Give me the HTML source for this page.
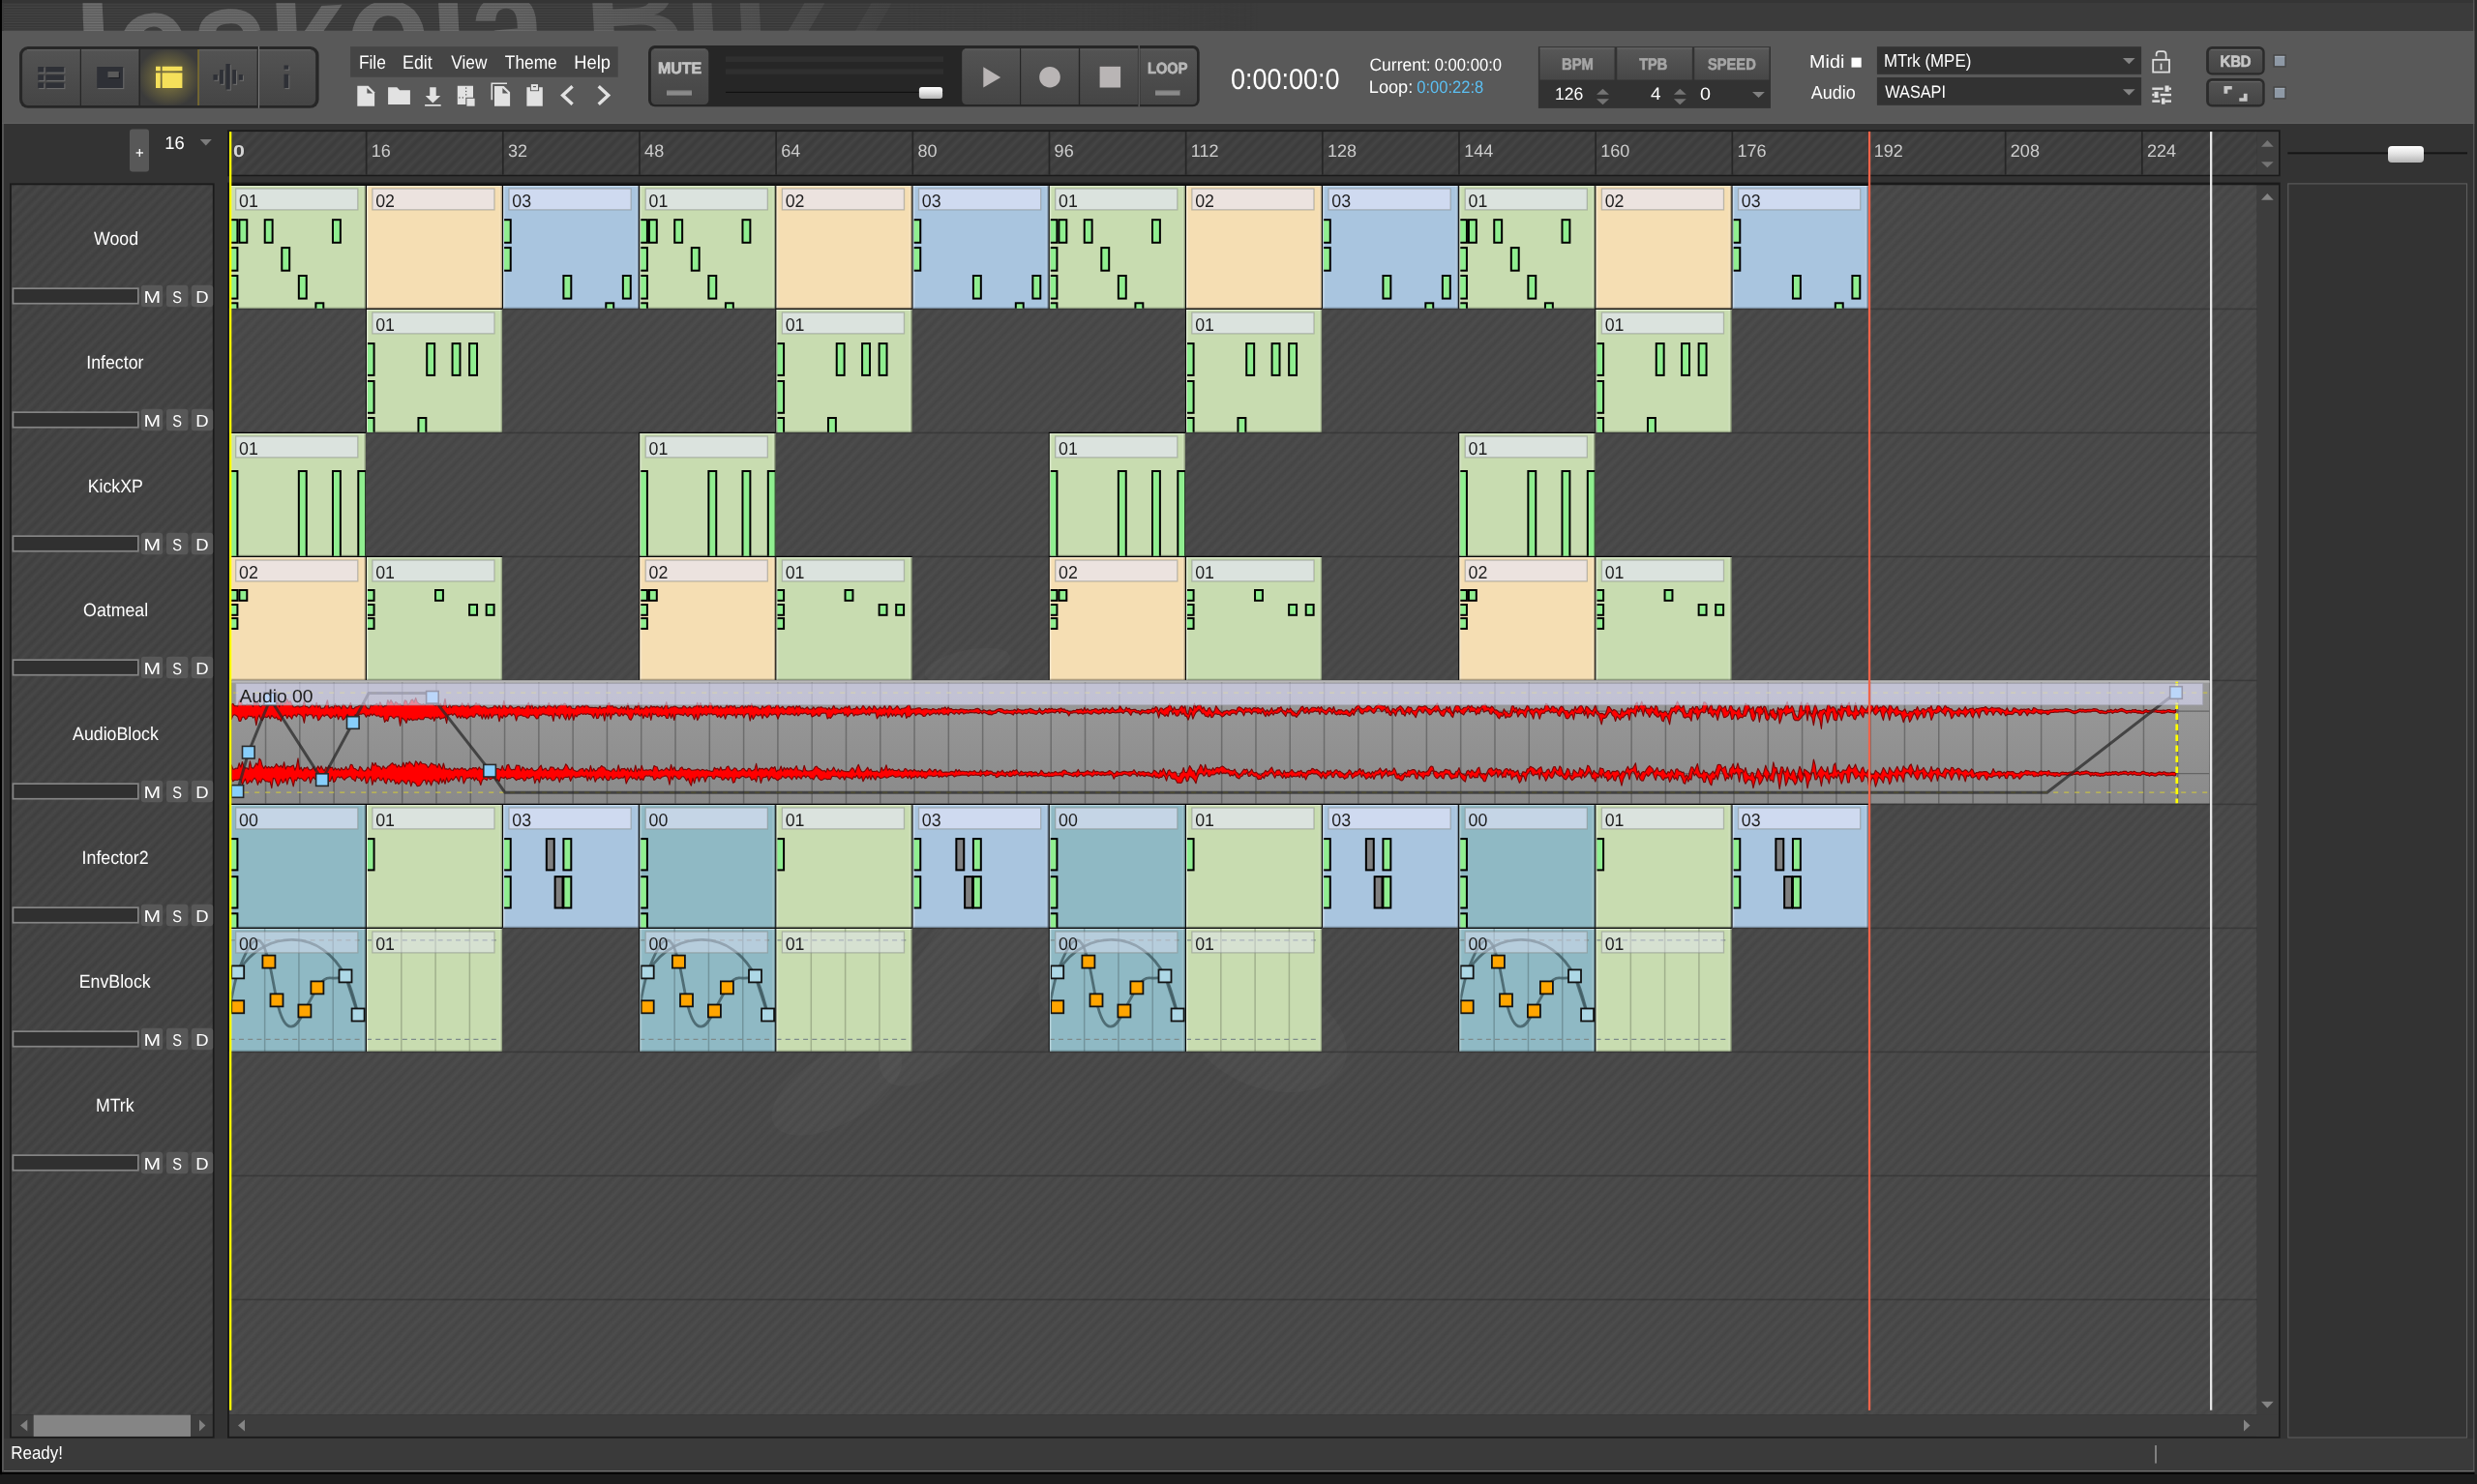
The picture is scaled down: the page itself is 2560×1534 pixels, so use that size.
<!DOCTYPE html>
<html><head><meta charset="utf-8"><title>Jeskola Buzz</title>
<style>html,body{margin:0;padding:0;background:#333;overflow:hidden}body{width:2560px;height:1534px;font-family:"Liberation Sans",sans-serif}svg{display:block}</style>
</head><body>
<svg width="2560" height="1534" viewBox="0 0 2560 1534" font-family="'Liberation Sans', sans-serif" text-rendering="geometricPrecision">
<defs><linearGradient id="btn" x1="0" y1="0" x2="0" y2="1"><stop offset="0" stop-color="#535353"/><stop offset="1" stop-color="#454545"/></linearGradient>
<linearGradient id="hdr" x1="0" y1="0" x2="0" y2="1"><stop offset="0" stop-color="#585858"/><stop offset="1" stop-color="#474747"/></linearGradient>
<linearGradient id="thumb" x1="0" y1="0" x2="0" y2="1"><stop offset="0" stop-color="#ffffff"/><stop offset="0.45" stop-color="#e4e4e4"/><stop offset="1" stop-color="#b4b4b4"/></linearGradient>
<linearGradient id="hg1" x1="0" y1="0" x2="1" y2="0"><stop offset="0" stop-color="#454545"/><stop offset="0.5" stop-color="#4c4c4c"/><stop offset="1" stop-color="#454545"/></linearGradient>
<linearGradient id="hg2" x1="0" y1="0" x2="1" y2="0"><stop offset="0" stop-color="#3b3b3b"/><stop offset="0.5" stop-color="#444444"/><stop offset="1" stop-color="#3b3b3b"/></linearGradient>
<linearGradient id="hg3" x1="0" y1="0" x2="1" y2="0"><stop offset="0" stop-color="#3f3f3f"/><stop offset="0.5" stop-color="#474747"/><stop offset="1" stop-color="#3f3f3f"/></linearGradient>
<pattern id="h1" width="8.5" height="8.5" patternUnits="userSpaceOnUse" patternTransform="rotate(45)"><rect width="8.5" height="8.5" fill="url(#hg1)"/></pattern>
<pattern id="h2" width="8.5" height="8.5" patternUnits="userSpaceOnUse" patternTransform="rotate(45)"><rect width="8.5" height="8.5" fill="url(#hg2)"/></pattern>
<pattern id="h3" width="8.5" height="8.5" patternUnits="userSpaceOnUse" patternTransform="rotate(45)"><rect width="8.5" height="8.5" fill="url(#hg3)"/></pattern>
<pattern id="scan" width="4" height="2.67" patternUnits="userSpaceOnUse"><rect width="4" height="1.33" fill="#000" fill-opacity="0.22"/></pattern>
<linearGradient id="bfade" x1="0" y1="0" x2="1" y2="0"><stop offset="0" stop-color="#747474"/><stop offset="0.55" stop-color="#6c6c6c"/><stop offset="0.8" stop-color="#5a5a5a"/><stop offset="1" stop-color="#484848"/></linearGradient>
<radialGradient id="glow" cx="0.5" cy="0.5" r="0.5"><stop offset="0" stop-color="#e8d24a" stop-opacity="0.5"/><stop offset="0.5" stop-color="#c8b440" stop-opacity="0.28"/><stop offset="1" stop-color="#c8b440" stop-opacity="0"/></radialGradient>
<linearGradient id="audbg" x1="0" y1="0" x2="0" y2="1"><stop offset="0" stop-color="#9a9a9a"/><stop offset="1" stop-color="#8a8a8a"/></linearGradient>
<filter id="idf" x="0" y="0" width="2560" height="1534" filterUnits="userSpaceOnUse" color-interpolation-filters="sRGB"><feOffset dx="0" dy="0"/></filter>
<linearGradient id="bmg" x1="0" y1="0" x2="1" y2="0"><stop offset="0" stop-color="#fff"/><stop offset="0.72" stop-color="#fff"/><stop offset="1" stop-color="#000"/></linearGradient>
<mask id="bmask" maskUnits="userSpaceOnUse" x="0" y="0" width="1300" height="40"><rect x="0" y="0" width="1300" height="40" fill="url(#bmg)"/></mask>
<clipPath id="selclip"><rect x="145" y="50.9" width="59.3" height="58.1"/></clipPath>
<clipPath id="bannerclip"><rect x="4" y="3" width="2552" height="29"/></clipPath>
</defs>
<g filter="url(#idf)">
<rect x="0.00" y="0.00" width="2560.00" height="1534.00" fill="#333333"/><rect x="0.00" y="0.00" width="2560.00" height="32.00" fill="#3b3b3b"/><rect x="0.00" y="0.00" width="2560.00" height="3.00" fill="#353535"/><g clip-path="url(#bannerclip)"><rect x="4" y="3" width="1296" height="29" fill="#454545" mask="url(#bmask)"/><text transform="translate(41 108.5) rotate(-3) scale(0.87 1)" font-size="165" font-weight="bold" fill="url(#bfade)" letter-spacing="0">Jeskola Buzz</text><rect x="55.00" y="3.00" width="30.50" height="14.00" fill="#454545"/><rect x="4" y="3" width="1296" height="29" fill="url(#scan)" mask="url(#bmask)"/></g><rect x="0.00" y="32.00" width="2560.00" height="96.00" fill="#595959"/><rect x="0.00" y="126.80" width="2560.00" height="1.20" fill="#5f5f5f"/><rect x="0.00" y="1486.80" width="2560.00" height="34.00" fill="#3a3a3a"/><rect x="0.00" y="1520.00" width="2560.00" height="1.60" fill="#707070"/><rect x="0.00" y="1521.60" width="2560.00" height="2.60" fill="#050505"/><rect x="0.00" y="1524.20" width="2560.00" height="10.00" fill="#1c1c1c"/><rect x="2.00" y="128.00" width="2.00" height="1393.00" fill="#555555"/><rect x="0.00" y="0.00" width="2.00" height="1534.00" fill="#000000"/><rect x="2556.30" y="0.00" width="1.20" height="1521.00" fill="#626262"/><rect x="2557.50" y="0.00" width="2.50" height="1534.00" fill="#2a2a2a"/><rect x="0.00" y="1524.20" width="2560.00" height="10.00" fill="#1c1c1c"/><text transform="translate(11.24 1507.80) scale(0.9050 1)" font-size="18.76" fill="#ffffff">Ready!</text><rect x="2227.00" y="1494.00" width="2.00" height="18.60" fill="#808080"/>
<rect x="20" y="48" width="309.6" height="63.8" rx="9" fill="#272727"/><path d="M29.5 50.9 H82.7 V109 H29.5 a6.4 6.4 0 0 1 -6.4 -6.4 V57.3 a6.4 6.4 0 0 1 6.4 -6.4z" fill="url(#btn)"/><rect x="84.00" y="50.90" width="59.40" height="58.10" fill="url(#btn)"/><rect x="145.00" y="50.90" width="59.30" height="58.10" fill="#3b3b3b"/><rect x="205.90" y="50.90" width="59.70" height="58.10" fill="url(#btn)"/><path d="M268.1 50.9 H319.8 a6.4 6.4 0 0 1 6.4 6.4 V102.6 a6.4 6.4 0 0 1 -6.4 6.4 H268.1z" fill="url(#btn)"/><rect x="28.00" y="51.20" width="54.70" height="1.10" fill="#6a6a6a" fill-opacity="0.8"/><rect x="84.00" y="51.20" width="59.40" height="1.10" fill="#6a6a6a" fill-opacity="0.8"/><rect x="205.90" y="51.20" width="59.70" height="1.10" fill="#6a6a6a" fill-opacity="0.8"/><rect x="268.10" y="51.20" width="53.00" height="1.10" fill="#6a6a6a" fill-opacity="0.8"/><rect x="266.90" y="48.00" width="1.20" height="63.80" fill="#7a7a7a"/><rect x="204.20" y="51.00" width="1.70" height="58.00" fill="#7d6f34"/><ellipse cx="174.8" cy="80" rx="33" ry="31" fill="url(#glow)" clip-path="url(#selclip)"/><rect x="40.30" y="70.10" width="6.10" height="5.60" fill="#6a6a6a"/><rect x="48.40" y="70.10" width="19.00" height="5.60" fill="#6a6a6a"/><rect x="40.30" y="78.40" width="6.10" height="5.60" fill="#6a6a6a"/><rect x="48.40" y="78.40" width="19.00" height="5.60" fill="#6a6a6a"/><rect x="40.30" y="86.50" width="6.10" height="5.60" fill="#6a6a6a"/><rect x="48.40" y="86.50" width="19.00" height="5.60" fill="#6a6a6a"/><rect x="39.20" y="69.00" width="6.10" height="5.60" fill="#2e3036"/><rect x="47.30" y="69.00" width="19.00" height="5.60" fill="#2e3036"/><rect x="39.20" y="77.30" width="6.10" height="5.60" fill="#2e3036"/><rect x="47.30" y="77.30" width="19.00" height="5.60" fill="#2e3036"/><rect x="39.20" y="85.40" width="6.10" height="5.60" fill="#2e3036"/><rect x="47.30" y="85.40" width="19.00" height="5.60" fill="#2e3036"/><rect x="101.30" y="70.10" width="27.00" height="22.00" fill="#6a6a6a"/><rect x="100.20" y="69.00" width="27.00" height="22.00" fill="#2e3036"/><rect x="112.60" y="75.00" width="11.30" height="6.10" fill="#1e1f24"/><rect x="111.50" y="73.90" width="11.30" height="6.10" fill="#5a5a5a"/><rect x="161.00" y="68.70" width="4.80" height="4.60" fill="#f5e05a"/><rect x="167.60" y="68.70" width="20.80" height="4.60" fill="#f5e05a"/><rect x="161.00" y="75.30" width="4.80" height="15.70" fill="#f5e05a"/><rect x="167.60" y="75.30" width="20.80" height="15.70" fill="#f5e05a"/><rect x="221.50" y="78.20" width="4.50" height="5.70" fill="#6a6a6a"/><rect x="228.20" y="73.20" width="3.80" height="14.70" fill="#6a6a6a"/><rect x="234.50" y="67.10" width="4.40" height="26.50" fill="#6a6a6a"/><rect x="241.30" y="73.20" width="3.80" height="14.70" fill="#6a6a6a"/><rect x="247.80" y="78.20" width="4.20" height="5.70" fill="#6a6a6a"/><rect x="220.40" y="77.10" width="4.50" height="5.70" fill="#2e3036"/><rect x="227.10" y="72.10" width="3.80" height="14.70" fill="#2e3036"/><rect x="233.40" y="66.00" width="4.40" height="26.50" fill="#2e3036"/><rect x="240.20" y="72.10" width="3.80" height="14.70" fill="#2e3036"/><rect x="246.70" y="77.10" width="4.20" height="5.70" fill="#2e3036"/><rect x="294.60" y="68.60" width="4.70" height="4.20" fill="#6a6a6a"/><rect x="294.60" y="77.80" width="4.70" height="14.30" fill="#6a6a6a"/><rect x="293.50" y="67.50" width="4.70" height="4.20" fill="#2e3036"/><rect x="293.50" y="76.70" width="4.70" height="14.30" fill="#2e3036"/><rect x="362.10" y="48.10" width="276.60" height="31.60" fill="#454545"/><text transform="translate(370.91 71.20) scale(0.8899 1)" font-size="19.49" fill="#ffffff">File</text><text transform="translate(416.08 71.20) scale(0.9118 1)" font-size="19.49" fill="#ffffff">Edit</text><text transform="translate(466.36 71.20) scale(0.8829 1)" font-size="19.49" fill="#ffffff">View</text><text transform="translate(521.85 71.20) scale(0.8889 1)" font-size="19.49" fill="#ffffff">Theme</text><text transform="translate(593.23 71.20) scale(0.9413 1)" font-size="19.49" fill="#ffffff">Help</text><path d="M369.3 88.8 H380.6 L387.1 95.2 V109.7 H369.3z" fill="#e2e2e2"/><path d="M379.4 90.9 V96.6 H385.2z" fill="#595959"/><path d="M401.1 90.2 H410.3 L413.1 93.3 H423.9 V108 H401.1z" fill="#e2e2e2"/><path d="M444.2 90.2 H450.7 V98.9 H455.2 L447.4 106.4 L439.7 98.9 H444.2z" fill="#e2e2e2"/><rect x="439.10" y="108.00" width="16.60" height="1.70" fill="#e2e2e2"/><path d="M472.8 88.8 H489 V100.7 H481.3 V108 H472.8z" fill="#e2e2e2"/><rect x="482.40" y="101.80" width="8.20" height="7.90" fill="#e2e2e2"/><rect x="481.00" y="90.40" width="1.30" height="1.30" fill="#595959"/><rect x="481.00" y="93.80" width="1.30" height="1.30" fill="#595959"/><rect x="481.00" y="97.20" width="1.30" height="1.30" fill="#595959"/><rect x="474.30" y="100.30" width="1.30" height="1.30" fill="#595959"/><rect x="477.70" y="100.30" width="1.30" height="1.30" fill="#595959"/><path d="M508.3 103.2 V86.2 H524" fill="none" stroke="#e2e2e2" stroke-width="1.6"/><path d="M511 89 H520.7 L527.1 95.2 V109.7 H511z" fill="#e2e2e2"/><path d="M519.4 91 V96.6 H525.2z" fill="#595959"/><rect x="544.40" y="90.20" width="16.40" height="19.50" fill="#e2e2e2"/><rect x="547.90" y="86.30" width="9.20" height="7.90" fill="#595959"/><rect x="548.90" y="87.10" width="7.10" height="6.20" fill="#e2e2e2"/><rect x="550.90" y="89.00" width="3.10" height="1.20" fill="#595959"/><path d="M591.6 89.3 L581.6 98.4 L591.6 107.7" fill="none" stroke="#e2e2e2" stroke-width="3.4" stroke-linecap="butt" stroke-linejoin="miter"/><path d="M618.7 89.3 L628.7 98.4 L618.7 107.7" fill="none" stroke="#e2e2e2" stroke-width="3.4" stroke-linecap="butt" stroke-linejoin="miter"/><rect x="670" y="47" width="569.7" height="63.3" rx="7" fill="#262626"/><rect x="672.9" y="50.2" width="59.4" height="57.8" rx="4.5" fill="url(#btn)"/><rect x="676.00" y="50.60" width="53.00" height="1.00" fill="#6a6a6a" fill-opacity="0.7"/><text transform="translate(679.96 75.70) scale(0.9717 1)" font-size="16.44" fill="#c4c4c4" font-weight="bold" stroke="#c4c4c4" stroke-width="0.7">MUTE</text><rect x="689.00" y="93.00" width="26.00" height="5.60" fill="#8a8a8a"/><rect x="689.00" y="93.00" width="26.00" height="1.20" fill="#6a6a6a"/><rect x="750.00" y="58.30" width="225.00" height="5.70" fill="#2f2f2f"/><rect x="750.00" y="71.20" width="225.00" height="5.60" fill="#2f2f2f"/><rect x="750.00" y="94.80" width="225.00" height="1.20" fill="#101010"/><rect x="949.9" y="90" width="24.2" height="11.9" rx="3" fill="url(#thumb)"/><path d="M998.7 50.2 H1054 V108 H998.7 a4.5 4.5 0 0 1 -4.5 -4.5 V54.7 a4.5 4.5 0 0 1 4.5 -4.5z" fill="url(#btn)"/><rect x="1055.20" y="50.20" width="59.60" height="57.80" fill="url(#btn)"/><rect x="1116.20" y="50.20" width="59.70" height="57.80" fill="url(#btn)"/><path d="M1178.3 50.2 H1232.5 a4.5 4.5 0 0 1 4.5 4.5 V103.5 a4.5 4.5 0 0 1 -4.5 4.5 H1178.3z" fill="url(#btn)"/><rect x="997.00" y="50.60" width="57.00" height="1.00" fill="#6a6a6a" fill-opacity="0.7"/><rect x="1055.20" y="50.60" width="59.60" height="1.00" fill="#6a6a6a" fill-opacity="0.7"/><rect x="1116.20" y="50.60" width="59.70" height="1.00" fill="#6a6a6a" fill-opacity="0.7"/><rect x="1178.30" y="50.60" width="56.00" height="1.00" fill="#6a6a6a" fill-opacity="0.7"/><rect x="1176.60" y="47.00" width="1.10" height="63.30" fill="#6c6c6c"/><path d="M1016.3 69.2 L1034.2 79.9 L1016.3 90.6z" fill="#b9b5b5"/><circle cx="1085" cy="79.7" r="10.8" fill="#b9b5b5"/><rect x="1136.60" y="68.80" width="21.50" height="21.70" fill="#b9b5b5"/><text transform="translate(1186.05 75.70) scale(0.9019 1)" font-size="16.20" fill="#b8b8b8" font-weight="bold" stroke="#b8b8b8" stroke-width="0.7">LOOP</text><rect x="1194.00" y="93.00" width="25.50" height="5.60" fill="#8a8a8a"/><rect x="1194.00" y="93.00" width="25.50" height="1.20" fill="#6a6a6a"/><text transform="translate(1271.89 92.20) scale(0.8971 1)" font-size="30.11" fill="#ffffff">0:00:00:0</text><text transform="translate(1415.42 72.80) scale(0.9708 1)" font-size="18.06" fill="#ffffff">Current:</text><text transform="translate(1482.68 72.80) scale(0.9219 1)" font-size="18.06" fill="#ffffff">0:00:00:0</text><text transform="translate(1414.85 96.20) scale(0.9895 1)" font-size="18.33" fill="#ffffff">Loop:</text><text transform="translate(1464.18 96.20) scale(0.9171 1)" font-size="18.06" fill="#5bbff2">0:00:22:8</text><rect x="1589.90" y="48.20" width="240.10" height="63.70" fill="#323232"/><rect x="1591.50" y="49.40" width="77.00" height="33.10" fill="url(#hdr)"/><rect x="1591.50" y="49.40" width="77.00" height="1.10" fill="#6e6e6e" fill-opacity="0.8"/><text transform="translate(1614.04 72.30) scale(0.8780 1)" font-size="16.87" fill="#a6a6a6" font-weight="bold" stroke="#a6a6a6" stroke-width="0.6">BPM</text><rect x="1671.30" y="49.40" width="77.50" height="33.10" fill="url(#hdr)"/><rect x="1671.30" y="49.40" width="77.50" height="1.10" fill="#6e6e6e" fill-opacity="0.8"/><text transform="translate(1694.15 72.30) scale(0.8623 1)" font-size="16.87" fill="#a6a6a6" font-weight="bold" stroke="#a6a6a6" stroke-width="0.6">TPB</text><rect x="1751.30" y="49.40" width="77.10" height="33.10" fill="url(#hdr)"/><rect x="1751.30" y="49.40" width="77.10" height="1.10" fill="#6e6e6e" fill-opacity="0.8"/><text transform="translate(1765.00 72.30) scale(0.8832 1)" font-size="16.63" fill="#a6a6a6" font-weight="bold" stroke="#a6a6a6" stroke-width="0.6">SPEED</text><text transform="translate(1606.97 103.00) scale(0.9944 1)" font-size="17.78" fill="#ffffff">126</text><text transform="translate(1706.07 103.00) scale(1.0540 1)" font-size="18.04" fill="#ffffff">4</text><text transform="translate(1757.06 103.00) scale(1.1133 1)" font-size="17.78" fill="#ffffff">0</text><path d="M1650.0 97.8 L1656.5 91.8 L1663.0 97.8z" fill="#737373"/><path d="M1650.0 102.2 L1656.5 108.3 L1663.0 102.2z" fill="#737373"/><path d="M1729.9 97.8 L1736.3 91.8 L1742.8 97.8z" fill="#737373"/><path d="M1729.9 102.2 L1736.3 108.3 L1742.8 102.2z" fill="#737373"/><path d="M1811.0 94.9 L1817.5 101.0 L1823.9 94.9z" fill="#808080"/><text transform="translate(1870.12 69.90) scale(1.0517 1)" font-size="18.76" fill="#ffffff">Midi</text><rect x="1913.50" y="59.60" width="10.20" height="10.00" fill="#ffffff"/><text transform="translate(1871.70 101.90) scale(0.9495 1)" font-size="18.91" fill="#ffffff">Audio</text><rect x="1939.90" y="48.20" width="273.20" height="28.60" fill="#323232"/><rect x="1939.90" y="80.00" width="273.20" height="28.80" fill="#323232"/><text transform="translate(1946.95 69.20) scale(0.9002 1)" font-size="18.76" fill="#ffffff">MTrk (MPE)</text><text transform="translate(1948.26 100.70) scale(0.9025 1)" font-size="18.06" fill="#ffffff">WASAPI</text><path d="M2194.0 59.9 L2200.3 66.3 L2206.6 59.9z" fill="#858585"/><path d="M2194.0 92.2 L2200.3 98.6 L2206.6 92.2z" fill="#858585"/><rect x="2225.2" y="61.8" width="16.8" height="12.8" fill="none" stroke="#dedede" stroke-width="1.8"/><path d="M2228.6 58.2 V56.2 a3 3 0 0 1 3 -3 H2235.6 a3 3 0 0 1 3 3 V61.5" fill="none" stroke="#dedede" stroke-width="1.7"/><rect x="2232.70" y="65.60" width="1.70" height="6.50" fill="#dedede"/><rect x="2224.30" y="90.50" width="11.50" height="2.40" fill="#dedede"/><rect x="2241.50" y="90.50" width="2.50" height="2.40" fill="#dedede"/><rect x="2237.50" y="88.50" width="4.10" height="6.30" fill="#dedede"/><rect x="2224.30" y="96.80" width="2.20" height="2.40" fill="#dedede"/><rect x="2232.60" y="96.80" width="11.40" height="2.40" fill="#dedede"/><rect x="2226.50" y="94.80" width="4.10" height="6.30" fill="#dedede"/><rect x="2224.30" y="103.40" width="8.00" height="2.40" fill="#dedede"/><rect x="2237.40" y="103.40" width="6.60" height="2.40" fill="#dedede"/><rect x="2234.00" y="101.40" width="3.50" height="6.30" fill="#dedede"/><rect x="2280.1" y="48.1" width="60.6" height="29.5" rx="6" fill="#2b2b2b"/><rect x="2282.9" y="50.8" width="55.3" height="24.4" rx="3.5" fill="url(#btn)"/><rect x="2285.00" y="51.10" width="51.00" height="1.00" fill="#6a6a6a" fill-opacity="0.8"/><rect x="2280.1" y="81.0" width="60.6" height="29.5" rx="6" fill="#2b2b2b"/><rect x="2282.9" y="83.7" width="55.3" height="24.4" rx="3.5" fill="url(#btn)"/><rect x="2285.00" y="84.00" width="51.00" height="1.00" fill="#6a6a6a" fill-opacity="0.8"/><text transform="translate(2294.44 68.70) scale(0.9027 1)" font-size="16.44" fill="#c6c6c6" font-weight="bold" stroke="#c6c6c6" stroke-width="0.7">KBD</text><path d="M2298.5 96.8 V88.9 H2306.8 V92.4 H2302.3 V96.8z" fill="#c6c6c6"/><path d="M2322.6 96.8 V104.7 H2314.3 V101.3 H2318.8 V96.8z" fill="#c6c6c6"/><rect x="2349.30" y="56.30" width="13.40" height="13.30" fill="#484848"/><rect x="2350.90" y="57.90" width="10.40" height="10.20" fill="#8e99a6"/><rect x="2350.90" y="57.90" width="10.40" height="1.20" fill="#a4aeba"/><rect x="2349.30" y="89.30" width="13.40" height="13.30" fill="#484848"/><rect x="2350.90" y="90.90" width="10.40" height="10.20" fill="#8e99a6"/><rect x="2350.90" y="90.90" width="10.40" height="1.20" fill="#a4aeba"/>
<rect x="134" y="133.4" width="20" height="44.2" rx="3" fill="#585858"/><rect x="140.60" y="157.30" width="7.40" height="1.30" fill="#ffffff"/><rect x="143.65" y="154.00" width="1.30" height="7.90" fill="#ffffff"/><text transform="translate(170.22 154.00) scale(0.9839 1)" font-size="18.64" fill="#ffffff">16</text><path d="M206.7 143.9 L212.8 150.4 L218.8 143.9z" fill="#7c7c7c"/><rect x="10.00" y="189.40" width="211.60" height="1297.20" fill="#1b1b1b"/><rect x="11.90" y="191.30" width="207.90" height="1271.30" fill="url(#h3)"/><rect x="11.90" y="1462.60" width="207.90" height="22.30" fill="#3d3d3d"/><rect x="34.70" y="1462.60" width="162.30" height="22.30" fill="#858585"/><path d="M28.3 1467.4 L21.0 1473.5 L28.3 1479.5z" fill="#808080"/><path d="M206.0 1467.4 L212.4 1473.5 L206.0 1479.5z" fill="#808080"/><text transform="translate(97.01 252.70) scale(0.9250 1)" font-size="19.20" fill="#ffffff">Wood</text><rect x="12.60" y="297.30" width="131.10" height="17.30" fill="#848484"/><rect x="14.30" y="299.00" width="127.70" height="13.90" fill="#303030"/><rect x="145.8" y="294.7" width="22.4" height="22.6" rx="3" fill="#585858"/><text transform="translate(148.51 312.50) scale(1.2097 1)" font-size="17.45" fill="#ffffff">M</text><rect x="172.0" y="294.7" width="22.4" height="22.6" rx="3" fill="#585858"/><text transform="translate(178.25 312.50) scale(0.8455 1)" font-size="17.20" fill="#ffffff">S</text><rect x="197.8" y="294.7" width="22.4" height="22.6" rx="3" fill="#585858"/><text transform="translate(202.32 312.50) scale(1.0592 1)" font-size="17.45" fill="#ffffff">D</text><text transform="translate(89.22 380.70) scale(0.9250 1)" font-size="19.20" fill="#ffffff">Infector</text><rect x="12.60" y="425.30" width="131.10" height="17.30" fill="#848484"/><rect x="14.30" y="427.00" width="127.70" height="13.90" fill="#303030"/><rect x="145.8" y="422.7" width="22.4" height="22.6" rx="3" fill="#585858"/><text transform="translate(148.51 440.50) scale(1.2097 1)" font-size="17.45" fill="#ffffff">M</text><rect x="172.0" y="422.7" width="22.4" height="22.6" rx="3" fill="#585858"/><text transform="translate(178.25 440.50) scale(0.8455 1)" font-size="17.20" fill="#ffffff">S</text><rect x="197.8" y="422.7" width="22.4" height="22.6" rx="3" fill="#585858"/><text transform="translate(202.32 440.50) scale(1.0592 1)" font-size="17.45" fill="#ffffff">D</text><text transform="translate(90.64 508.70) scale(0.9250 1)" font-size="19.20" fill="#ffffff">KickXP</text><rect x="12.60" y="553.30" width="131.10" height="17.30" fill="#848484"/><rect x="14.30" y="555.00" width="127.70" height="13.90" fill="#303030"/><rect x="145.8" y="550.7" width="22.4" height="22.6" rx="3" fill="#585858"/><text transform="translate(148.51 568.50) scale(1.2097 1)" font-size="17.45" fill="#ffffff">M</text><rect x="172.0" y="550.7" width="22.4" height="22.6" rx="3" fill="#585858"/><text transform="translate(178.25 568.50) scale(0.8455 1)" font-size="17.20" fill="#ffffff">S</text><rect x="197.8" y="550.7" width="22.4" height="22.6" rx="3" fill="#585858"/><text transform="translate(202.32 568.50) scale(1.0592 1)" font-size="17.45" fill="#ffffff">D</text><text transform="translate(86.11 636.70) scale(0.9250 1)" font-size="19.20" fill="#ffffff">Oatmeal</text><rect x="12.60" y="681.30" width="131.10" height="17.30" fill="#848484"/><rect x="14.30" y="683.00" width="127.70" height="13.90" fill="#303030"/><rect x="145.8" y="678.7" width="22.4" height="22.6" rx="3" fill="#585858"/><text transform="translate(148.51 696.50) scale(1.2097 1)" font-size="17.45" fill="#ffffff">M</text><rect x="172.0" y="678.7" width="22.4" height="22.6" rx="3" fill="#585858"/><text transform="translate(178.25 696.50) scale(0.8455 1)" font-size="17.20" fill="#ffffff">S</text><rect x="197.8" y="678.7" width="22.4" height="22.6" rx="3" fill="#585858"/><text transform="translate(202.32 696.50) scale(1.0592 1)" font-size="17.45" fill="#ffffff">D</text><text transform="translate(75.06 764.70) scale(0.9250 1)" font-size="19.20" fill="#ffffff">AudioBlock</text><rect x="12.60" y="809.30" width="131.10" height="17.30" fill="#848484"/><rect x="14.30" y="811.00" width="127.70" height="13.90" fill="#303030"/><rect x="145.8" y="806.7" width="22.4" height="22.6" rx="3" fill="#585858"/><text transform="translate(148.51 824.50) scale(1.2097 1)" font-size="17.45" fill="#ffffff">M</text><rect x="172.0" y="806.7" width="22.4" height="22.6" rx="3" fill="#585858"/><text transform="translate(178.25 824.50) scale(0.8455 1)" font-size="17.20" fill="#ffffff">S</text><rect x="197.8" y="806.7" width="22.4" height="22.6" rx="3" fill="#585858"/><text transform="translate(202.32 824.50) scale(1.0592 1)" font-size="17.45" fill="#ffffff">D</text><text transform="translate(84.58 892.70) scale(0.9250 1)" font-size="19.20" fill="#ffffff">Infector2</text><rect x="12.60" y="937.30" width="131.10" height="17.30" fill="#848484"/><rect x="14.30" y="939.00" width="127.70" height="13.90" fill="#303030"/><rect x="145.8" y="934.7" width="22.4" height="22.6" rx="3" fill="#585858"/><text transform="translate(148.51 952.50) scale(1.2097 1)" font-size="17.45" fill="#ffffff">M</text><rect x="172.0" y="934.7" width="22.4" height="22.6" rx="3" fill="#585858"/><text transform="translate(178.25 952.50) scale(0.8455 1)" font-size="17.20" fill="#ffffff">S</text><rect x="197.8" y="934.7" width="22.4" height="22.6" rx="3" fill="#585858"/><text transform="translate(202.32 952.50) scale(1.0592 1)" font-size="17.45" fill="#ffffff">D</text><text transform="translate(81.76 1020.70) scale(0.9250 1)" font-size="19.20" fill="#ffffff">EnvBlock</text><rect x="12.60" y="1065.30" width="131.10" height="17.30" fill="#848484"/><rect x="14.30" y="1067.00" width="127.70" height="13.90" fill="#303030"/><rect x="145.8" y="1062.7" width="22.4" height="22.6" rx="3" fill="#585858"/><text transform="translate(148.51 1080.50) scale(1.2097 1)" font-size="17.45" fill="#ffffff">M</text><rect x="172.0" y="1062.7" width="22.4" height="22.6" rx="3" fill="#585858"/><text transform="translate(178.25 1080.50) scale(0.8455 1)" font-size="17.20" fill="#ffffff">S</text><rect x="197.8" y="1062.7" width="22.4" height="22.6" rx="3" fill="#585858"/><text transform="translate(202.32 1080.50) scale(1.0592 1)" font-size="17.45" fill="#ffffff">D</text><text transform="translate(98.88 1148.70) scale(0.9250 1)" font-size="19.20" fill="#ffffff">MTrk</text><rect x="12.60" y="1193.30" width="131.10" height="17.30" fill="#848484"/><rect x="14.30" y="1195.00" width="127.70" height="13.90" fill="#303030"/><rect x="145.8" y="1190.7" width="22.4" height="22.6" rx="3" fill="#585858"/><text transform="translate(148.51 1208.50) scale(1.2097 1)" font-size="17.45" fill="#ffffff">M</text><rect x="172.0" y="1190.7" width="22.4" height="22.6" rx="3" fill="#585858"/><text transform="translate(178.25 1208.50) scale(0.8455 1)" font-size="17.20" fill="#ffffff">S</text><rect x="197.8" y="1190.7" width="22.4" height="22.6" rx="3" fill="#585858"/><text transform="translate(202.32 1208.50) scale(1.0592 1)" font-size="17.45" fill="#ffffff">D</text><rect x="235.00" y="134.40" width="2121.70" height="47.80" fill="#1a1a1a"/><rect x="236.90" y="136.10" width="2096.00" height="44.60" fill="url(#h2)"/><rect x="2332.80" y="136.10" width="22.20" height="44.60" fill="#3f3f3f"/><path d="M2337.0 151.8 L2343.3 145.0 L2349.7 151.8z" fill="#747474"/><path d="M2337.0 167.2 L2343.3 173.3 L2349.7 167.2z" fill="#747474"/><rect x="377.77" y="136.10" width="1.70" height="44.60" fill="#262626"/><rect x="518.94" y="136.10" width="1.70" height="44.60" fill="#262626"/><rect x="660.11" y="136.10" width="1.70" height="44.60" fill="#262626"/><rect x="801.28" y="136.10" width="1.70" height="44.60" fill="#262626"/><rect x="942.45" y="136.10" width="1.70" height="44.60" fill="#262626"/><rect x="1083.62" y="136.10" width="1.70" height="44.60" fill="#262626"/><rect x="1224.79" y="136.10" width="1.70" height="44.60" fill="#262626"/><rect x="1365.96" y="136.10" width="1.70" height="44.60" fill="#262626"/><rect x="1507.13" y="136.10" width="1.70" height="44.60" fill="#262626"/><rect x="1648.30" y="136.10" width="1.70" height="44.60" fill="#262626"/><rect x="1789.47" y="136.10" width="1.70" height="44.60" fill="#262626"/><rect x="1930.64" y="136.10" width="1.70" height="44.60" fill="#262626"/><rect x="2071.81" y="136.10" width="1.70" height="44.60" fill="#262626"/><rect x="2212.98" y="136.10" width="1.70" height="44.60" fill="#262626"/><text transform="translate(240.90 162.00) scale(1.2370 1)" font-size="17.35" fill="#d6d6d6" font-weight="bold">0</text><text transform="translate(383.77 162.00) scale(1.0000 1)" font-size="18.06" fill="#cdcdcd">16</text><text transform="translate(524.94 162.00) scale(1.0000 1)" font-size="18.06" fill="#cdcdcd">32</text><text transform="translate(666.11 162.00) scale(1.0000 1)" font-size="18.06" fill="#cdcdcd">48</text><text transform="translate(807.28 162.00) scale(1.0000 1)" font-size="18.06" fill="#cdcdcd">64</text><text transform="translate(948.45 162.00) scale(1.0000 1)" font-size="18.06" fill="#cdcdcd">80</text><text transform="translate(1089.62 162.00) scale(1.0000 1)" font-size="18.06" fill="#cdcdcd">96</text><text transform="translate(1230.79 162.00) scale(1.0000 1)" font-size="18.06" fill="#cdcdcd">112</text><text transform="translate(1371.96 162.00) scale(1.0000 1)" font-size="18.06" fill="#cdcdcd">128</text><text transform="translate(1513.13 162.00) scale(1.0000 1)" font-size="18.06" fill="#cdcdcd">144</text><text transform="translate(1654.30 162.00) scale(1.0000 1)" font-size="18.06" fill="#cdcdcd">160</text><text transform="translate(1795.47 162.00) scale(1.0000 1)" font-size="18.06" fill="#cdcdcd">176</text><text transform="translate(1936.64 162.00) scale(1.0000 1)" font-size="18.06" fill="#cdcdcd">192</text><text transform="translate(2077.81 162.00) scale(1.0000 1)" font-size="18.06" fill="#cdcdcd">208</text><text transform="translate(2218.98 162.00) scale(1.0000 1)" font-size="18.06" fill="#cdcdcd">224</text><rect x="235.00" y="188.60" width="2121.70" height="1298.00" fill="#1a1a1a"/><rect x="236.90" y="191.30" width="2095.90" height="1271.30" fill="url(#h1)"/><g fill="#ffffff" fill-opacity="0.022"><ellipse cx="1010" cy="1000" rx="150" ry="55" transform="rotate(-52 1010 1000)"/><ellipse cx="1180" cy="960" rx="130" ry="60" transform="rotate(-40 1180 960)"/><ellipse cx="1310" cy="1070" rx="85" ry="55" transform="rotate(20 1310 1070)"/><ellipse cx="865" cy="1125" rx="75" ry="36" transform="rotate(-30 865 1125)"/><ellipse cx="1000" cy="688" rx="45" ry="16" transform="rotate(-12 1000 688)"/></g><rect x="236.90" y="318.60" width="2095.90" height="1.60" fill="#303030" fill-opacity="0.62"/><rect x="236.90" y="446.60" width="2095.90" height="1.60" fill="#303030" fill-opacity="0.62"/><rect x="236.90" y="574.60" width="2095.90" height="1.60" fill="#303030" fill-opacity="0.62"/><rect x="236.90" y="702.60" width="2095.90" height="1.60" fill="#303030" fill-opacity="0.62"/><rect x="236.90" y="830.60" width="2095.90" height="1.60" fill="#303030" fill-opacity="0.62"/><rect x="236.90" y="958.60" width="2095.90" height="1.60" fill="#303030" fill-opacity="0.62"/><rect x="236.90" y="1086.60" width="2095.90" height="1.60" fill="#303030" fill-opacity="0.62"/><rect x="236.90" y="1214.60" width="2095.90" height="1.60" fill="#303030" fill-opacity="0.62"/><rect x="236.90" y="1342.60" width="2095.90" height="1.60" fill="#303030" fill-opacity="0.62"/><rect x="2332.80" y="191.30" width="22.20" height="1293.60" fill="#3d3d3d"/><rect x="236.90" y="1462.60" width="2118.10" height="22.30" fill="#3d3d3d"/><path d="M2337.0 206.8 L2343.3 200.0 L2349.7 206.8z" fill="#858585"/><path d="M2337.0 1448.8 L2343.3 1455.6 L2349.7 1448.8z" fill="#858585"/><path d="M253.0 1467.4 L246.0 1473.5 L253.0 1479.5z" fill="#858585"/><path d="M2319.0 1467.4 L2325.5 1473.5 L2319.0 1479.5z" fill="#858585"/><clipPath id="c1"><rect x="238.80" y="192.00" width="139.12" height="126.80"/></clipPath><rect x="236.75" y="190.80" width="141.17" height="128.00" fill="#050505"/><rect x="237.80" y="192.00" width="140.12" height="126.80" fill="#c8dcb0"/><rect x="237.80" y="192.00" width="140.12" height="1.10" fill="#ffffff" fill-opacity="0.38"/><rect x="237.80" y="192.00" width="1.00" height="126.80" fill="#ffffff" fill-opacity="0.45"/><rect x="238.80" y="192.00" width="1.00" height="126.80" fill="#ffffff" fill-opacity="0.18"/><rect x="374.52" y="192.00" width="2.00" height="126.80" fill="#ffffff" fill-opacity="0.10"/><rect x="376.52" y="192.00" width="1.40" height="126.80" fill="#000000" fill-opacity="0.25"/><rect x="237.80" y="317.50" width="140.12" height="1.30" fill="#000000" fill-opacity="0.16"/><g clip-path="url(#c1)"><rect x="237.50" y="227.20" width="7.90" height="23.60" fill="#90ee90" stroke="#000" stroke-width="2"/><rect x="247.38" y="227.20" width="7.90" height="23.60" fill="#90ee90" stroke="#000" stroke-width="2"/><rect x="273.72" y="227.20" width="7.90" height="23.60" fill="#90ee90" stroke="#000" stroke-width="2"/><rect x="343.96" y="227.20" width="7.90" height="23.60" fill="#90ee90" stroke="#000" stroke-width="2"/><rect x="237.50" y="256.10" width="7.90" height="23.60" fill="#90ee90" stroke="#000" stroke-width="2"/><rect x="291.28" y="256.10" width="7.90" height="23.60" fill="#90ee90" stroke="#000" stroke-width="2"/><rect x="237.50" y="285.00" width="7.90" height="23.60" fill="#90ee90" stroke="#000" stroke-width="2"/><rect x="308.84" y="285.00" width="7.90" height="23.60" fill="#90ee90" stroke="#000" stroke-width="2"/><rect x="237.50" y="313.30" width="7.90" height="23.60" fill="#90ee90" stroke="#000" stroke-width="2"/><rect x="326.40" y="313.30" width="7.90" height="23.60" fill="#90ee90" stroke="#000" stroke-width="2"/><rect x="243.70" y="195.05" width="126.1" height="21.8" fill="#e6e6fa" fill-opacity="0.62" stroke="#858a85" stroke-opacity="0.5" stroke-width="1.3"/><text transform="translate(247.00 213.90) scale(0.9550 1)" font-size="18.64" fill="#1e1e1e">01</text></g><clipPath id="c2"><rect x="379.97" y="192.00" width="139.12" height="126.80"/></clipPath><rect x="377.92" y="190.80" width="141.17" height="128.00" fill="#050505"/><rect x="378.97" y="192.00" width="140.12" height="126.80" fill="#f5deb3"/><rect x="378.97" y="192.00" width="140.12" height="1.10" fill="#ffffff" fill-opacity="0.38"/><rect x="378.97" y="192.00" width="1.00" height="126.80" fill="#ffffff" fill-opacity="0.45"/><rect x="379.97" y="192.00" width="1.00" height="126.80" fill="#ffffff" fill-opacity="0.18"/><rect x="515.69" y="192.00" width="2.00" height="126.80" fill="#ffffff" fill-opacity="0.10"/><rect x="517.69" y="192.00" width="1.40" height="126.80" fill="#000000" fill-opacity="0.25"/><rect x="378.97" y="317.50" width="140.12" height="1.30" fill="#000000" fill-opacity="0.16"/><g clip-path="url(#c2)"><rect x="384.87" y="195.05" width="126.1" height="21.8" fill="#e6e6fa" fill-opacity="0.62" stroke="#858a85" stroke-opacity="0.5" stroke-width="1.3"/><text transform="translate(388.17 213.90) scale(0.9550 1)" font-size="18.64" fill="#1e1e1e">02</text></g><clipPath id="c3"><rect x="521.14" y="192.00" width="139.12" height="126.80"/></clipPath><rect x="519.09" y="190.80" width="141.17" height="128.00" fill="#050505"/><rect x="520.14" y="192.00" width="140.12" height="126.80" fill="#a9c5df"/><rect x="520.14" y="192.00" width="140.12" height="1.10" fill="#ffffff" fill-opacity="0.38"/><rect x="520.14" y="192.00" width="1.00" height="126.80" fill="#ffffff" fill-opacity="0.45"/><rect x="521.14" y="192.00" width="1.00" height="126.80" fill="#ffffff" fill-opacity="0.18"/><rect x="656.86" y="192.00" width="2.00" height="126.80" fill="#ffffff" fill-opacity="0.10"/><rect x="658.86" y="192.00" width="1.40" height="126.80" fill="#000000" fill-opacity="0.25"/><rect x="520.14" y="317.50" width="140.12" height="1.30" fill="#000000" fill-opacity="0.16"/><g clip-path="url(#c3)"><rect x="519.84" y="227.20" width="7.90" height="23.60" fill="#90ee90" stroke="#000" stroke-width="2"/><rect x="519.84" y="256.10" width="7.90" height="23.60" fill="#90ee90" stroke="#000" stroke-width="2"/><rect x="582.40" y="285.00" width="7.90" height="23.60" fill="#90ee90" stroke="#000" stroke-width="2"/><rect x="643.86" y="285.00" width="7.90" height="23.60" fill="#90ee90" stroke="#000" stroke-width="2"/><rect x="626.30" y="313.30" width="7.90" height="23.60" fill="#90ee90" stroke="#000" stroke-width="2"/><rect x="526.04" y="195.05" width="126.1" height="21.8" fill="#e6e6fa" fill-opacity="0.62" stroke="#858a85" stroke-opacity="0.5" stroke-width="1.3"/><text transform="translate(529.34 213.90) scale(0.9550 1)" font-size="18.64" fill="#1e1e1e">03</text></g><clipPath id="c4"><rect x="662.31" y="192.00" width="139.12" height="126.80"/></clipPath><rect x="660.26" y="190.80" width="141.17" height="128.00" fill="#050505"/><rect x="661.31" y="192.00" width="140.12" height="126.80" fill="#c8dcb0"/><rect x="661.31" y="192.00" width="140.12" height="1.10" fill="#ffffff" fill-opacity="0.38"/><rect x="661.31" y="192.00" width="1.00" height="126.80" fill="#ffffff" fill-opacity="0.45"/><rect x="662.31" y="192.00" width="1.00" height="126.80" fill="#ffffff" fill-opacity="0.18"/><rect x="798.03" y="192.00" width="2.00" height="126.80" fill="#ffffff" fill-opacity="0.10"/><rect x="800.03" y="192.00" width="1.40" height="126.80" fill="#000000" fill-opacity="0.25"/><rect x="661.31" y="317.50" width="140.12" height="1.30" fill="#000000" fill-opacity="0.16"/><g clip-path="url(#c4)"><rect x="661.01" y="227.20" width="7.90" height="23.60" fill="#90ee90" stroke="#000" stroke-width="2"/><rect x="670.89" y="227.20" width="7.90" height="23.60" fill="#90ee90" stroke="#000" stroke-width="2"/><rect x="697.23" y="227.20" width="7.90" height="23.60" fill="#90ee90" stroke="#000" stroke-width="2"/><rect x="767.47" y="227.20" width="7.90" height="23.60" fill="#90ee90" stroke="#000" stroke-width="2"/><rect x="661.01" y="256.10" width="7.90" height="23.60" fill="#90ee90" stroke="#000" stroke-width="2"/><rect x="714.79" y="256.10" width="7.90" height="23.60" fill="#90ee90" stroke="#000" stroke-width="2"/><rect x="661.01" y="285.00" width="7.90" height="23.60" fill="#90ee90" stroke="#000" stroke-width="2"/><rect x="732.35" y="285.00" width="7.90" height="23.60" fill="#90ee90" stroke="#000" stroke-width="2"/><rect x="661.01" y="313.30" width="7.90" height="23.60" fill="#90ee90" stroke="#000" stroke-width="2"/><rect x="749.91" y="313.30" width="7.90" height="23.60" fill="#90ee90" stroke="#000" stroke-width="2"/><rect x="667.21" y="195.05" width="126.1" height="21.8" fill="#e6e6fa" fill-opacity="0.62" stroke="#858a85" stroke-opacity="0.5" stroke-width="1.3"/><text transform="translate(670.51 213.90) scale(0.9550 1)" font-size="18.64" fill="#1e1e1e">01</text></g><clipPath id="c5"><rect x="803.48" y="192.00" width="139.12" height="126.80"/></clipPath><rect x="801.43" y="190.80" width="141.17" height="128.00" fill="#050505"/><rect x="802.48" y="192.00" width="140.12" height="126.80" fill="#f5deb3"/><rect x="802.48" y="192.00" width="140.12" height="1.10" fill="#ffffff" fill-opacity="0.38"/><rect x="802.48" y="192.00" width="1.00" height="126.80" fill="#ffffff" fill-opacity="0.45"/><rect x="803.48" y="192.00" width="1.00" height="126.80" fill="#ffffff" fill-opacity="0.18"/><rect x="939.20" y="192.00" width="2.00" height="126.80" fill="#ffffff" fill-opacity="0.10"/><rect x="941.20" y="192.00" width="1.40" height="126.80" fill="#000000" fill-opacity="0.25"/><rect x="802.48" y="317.50" width="140.12" height="1.30" fill="#000000" fill-opacity="0.16"/><g clip-path="url(#c5)"><rect x="808.38" y="195.05" width="126.1" height="21.8" fill="#e6e6fa" fill-opacity="0.62" stroke="#858a85" stroke-opacity="0.5" stroke-width="1.3"/><text transform="translate(811.68 213.90) scale(0.9550 1)" font-size="18.64" fill="#1e1e1e">02</text></g><clipPath id="c6"><rect x="944.65" y="192.00" width="139.12" height="126.80"/></clipPath><rect x="942.60" y="190.80" width="141.17" height="128.00" fill="#050505"/><rect x="943.65" y="192.00" width="140.12" height="126.80" fill="#a9c5df"/><rect x="943.65" y="192.00" width="140.12" height="1.10" fill="#ffffff" fill-opacity="0.38"/><rect x="943.65" y="192.00" width="1.00" height="126.80" fill="#ffffff" fill-opacity="0.45"/><rect x="944.65" y="192.00" width="1.00" height="126.80" fill="#ffffff" fill-opacity="0.18"/><rect x="1080.37" y="192.00" width="2.00" height="126.80" fill="#ffffff" fill-opacity="0.10"/><rect x="1082.37" y="192.00" width="1.40" height="126.80" fill="#000000" fill-opacity="0.25"/><rect x="943.65" y="317.50" width="140.12" height="1.30" fill="#000000" fill-opacity="0.16"/><g clip-path="url(#c6)"><rect x="943.35" y="227.20" width="7.90" height="23.60" fill="#90ee90" stroke="#000" stroke-width="2"/><rect x="943.35" y="256.10" width="7.90" height="23.60" fill="#90ee90" stroke="#000" stroke-width="2"/><rect x="1005.91" y="285.00" width="7.90" height="23.60" fill="#90ee90" stroke="#000" stroke-width="2"/><rect x="1067.37" y="285.00" width="7.90" height="23.60" fill="#90ee90" stroke="#000" stroke-width="2"/><rect x="1049.81" y="313.30" width="7.90" height="23.60" fill="#90ee90" stroke="#000" stroke-width="2"/><rect x="949.55" y="195.05" width="126.1" height="21.8" fill="#e6e6fa" fill-opacity="0.62" stroke="#858a85" stroke-opacity="0.5" stroke-width="1.3"/><text transform="translate(952.85 213.90) scale(0.9550 1)" font-size="18.64" fill="#1e1e1e">03</text></g><clipPath id="c7"><rect x="1085.82" y="192.00" width="139.12" height="126.80"/></clipPath><rect x="1083.77" y="190.80" width="141.17" height="128.00" fill="#050505"/><rect x="1084.82" y="192.00" width="140.12" height="126.80" fill="#c8dcb0"/><rect x="1084.82" y="192.00" width="140.12" height="1.10" fill="#ffffff" fill-opacity="0.38"/><rect x="1084.82" y="192.00" width="1.00" height="126.80" fill="#ffffff" fill-opacity="0.45"/><rect x="1085.82" y="192.00" width="1.00" height="126.80" fill="#ffffff" fill-opacity="0.18"/><rect x="1221.54" y="192.00" width="2.00" height="126.80" fill="#ffffff" fill-opacity="0.10"/><rect x="1223.54" y="192.00" width="1.40" height="126.80" fill="#000000" fill-opacity="0.25"/><rect x="1084.82" y="317.50" width="140.12" height="1.30" fill="#000000" fill-opacity="0.16"/><g clip-path="url(#c7)"><rect x="1084.52" y="227.20" width="7.90" height="23.60" fill="#90ee90" stroke="#000" stroke-width="2"/><rect x="1094.40" y="227.20" width="7.90" height="23.60" fill="#90ee90" stroke="#000" stroke-width="2"/><rect x="1120.74" y="227.20" width="7.90" height="23.60" fill="#90ee90" stroke="#000" stroke-width="2"/><rect x="1190.98" y="227.20" width="7.90" height="23.60" fill="#90ee90" stroke="#000" stroke-width="2"/><rect x="1084.52" y="256.10" width="7.90" height="23.60" fill="#90ee90" stroke="#000" stroke-width="2"/><rect x="1138.30" y="256.10" width="7.90" height="23.60" fill="#90ee90" stroke="#000" stroke-width="2"/><rect x="1084.52" y="285.00" width="7.90" height="23.60" fill="#90ee90" stroke="#000" stroke-width="2"/><rect x="1155.86" y="285.00" width="7.90" height="23.60" fill="#90ee90" stroke="#000" stroke-width="2"/><rect x="1084.52" y="313.30" width="7.90" height="23.60" fill="#90ee90" stroke="#000" stroke-width="2"/><rect x="1173.42" y="313.30" width="7.90" height="23.60" fill="#90ee90" stroke="#000" stroke-width="2"/><rect x="1090.72" y="195.05" width="126.1" height="21.8" fill="#e6e6fa" fill-opacity="0.62" stroke="#858a85" stroke-opacity="0.5" stroke-width="1.3"/><text transform="translate(1094.02 213.90) scale(0.9550 1)" font-size="18.64" fill="#1e1e1e">01</text></g><clipPath id="c8"><rect x="1226.99" y="192.00" width="139.12" height="126.80"/></clipPath><rect x="1224.94" y="190.80" width="141.17" height="128.00" fill="#050505"/><rect x="1225.99" y="192.00" width="140.12" height="126.80" fill="#f5deb3"/><rect x="1225.99" y="192.00" width="140.12" height="1.10" fill="#ffffff" fill-opacity="0.38"/><rect x="1225.99" y="192.00" width="1.00" height="126.80" fill="#ffffff" fill-opacity="0.45"/><rect x="1226.99" y="192.00" width="1.00" height="126.80" fill="#ffffff" fill-opacity="0.18"/><rect x="1362.71" y="192.00" width="2.00" height="126.80" fill="#ffffff" fill-opacity="0.10"/><rect x="1364.71" y="192.00" width="1.40" height="126.80" fill="#000000" fill-opacity="0.25"/><rect x="1225.99" y="317.50" width="140.12" height="1.30" fill="#000000" fill-opacity="0.16"/><g clip-path="url(#c8)"><rect x="1231.89" y="195.05" width="126.1" height="21.8" fill="#e6e6fa" fill-opacity="0.62" stroke="#858a85" stroke-opacity="0.5" stroke-width="1.3"/><text transform="translate(1235.19 213.90) scale(0.9550 1)" font-size="18.64" fill="#1e1e1e">02</text></g><clipPath id="c9"><rect x="1368.16" y="192.00" width="139.12" height="126.80"/></clipPath><rect x="1366.11" y="190.80" width="141.17" height="128.00" fill="#050505"/><rect x="1367.16" y="192.00" width="140.12" height="126.80" fill="#a9c5df"/><rect x="1367.16" y="192.00" width="140.12" height="1.10" fill="#ffffff" fill-opacity="0.38"/><rect x="1367.16" y="192.00" width="1.00" height="126.80" fill="#ffffff" fill-opacity="0.45"/><rect x="1368.16" y="192.00" width="1.00" height="126.80" fill="#ffffff" fill-opacity="0.18"/><rect x="1503.88" y="192.00" width="2.00" height="126.80" fill="#ffffff" fill-opacity="0.10"/><rect x="1505.88" y="192.00" width="1.40" height="126.80" fill="#000000" fill-opacity="0.25"/><rect x="1367.16" y="317.50" width="140.12" height="1.30" fill="#000000" fill-opacity="0.16"/><g clip-path="url(#c9)"><rect x="1366.86" y="227.20" width="7.90" height="23.60" fill="#90ee90" stroke="#000" stroke-width="2"/><rect x="1366.86" y="256.10" width="7.90" height="23.60" fill="#90ee90" stroke="#000" stroke-width="2"/><rect x="1429.42" y="285.00" width="7.90" height="23.60" fill="#90ee90" stroke="#000" stroke-width="2"/><rect x="1490.88" y="285.00" width="7.90" height="23.60" fill="#90ee90" stroke="#000" stroke-width="2"/><rect x="1473.32" y="313.30" width="7.90" height="23.60" fill="#90ee90" stroke="#000" stroke-width="2"/><rect x="1373.06" y="195.05" width="126.1" height="21.8" fill="#e6e6fa" fill-opacity="0.62" stroke="#858a85" stroke-opacity="0.5" stroke-width="1.3"/><text transform="translate(1376.36 213.90) scale(0.9550 1)" font-size="18.64" fill="#1e1e1e">03</text></g><clipPath id="c10"><rect x="1509.33" y="192.00" width="139.12" height="126.80"/></clipPath><rect x="1507.28" y="190.80" width="141.17" height="128.00" fill="#050505"/><rect x="1508.33" y="192.00" width="140.12" height="126.80" fill="#c8dcb0"/><rect x="1508.33" y="192.00" width="140.12" height="1.10" fill="#ffffff" fill-opacity="0.38"/><rect x="1508.33" y="192.00" width="1.00" height="126.80" fill="#ffffff" fill-opacity="0.45"/><rect x="1509.33" y="192.00" width="1.00" height="126.80" fill="#ffffff" fill-opacity="0.18"/><rect x="1645.05" y="192.00" width="2.00" height="126.80" fill="#ffffff" fill-opacity="0.10"/><rect x="1647.05" y="192.00" width="1.40" height="126.80" fill="#000000" fill-opacity="0.25"/><rect x="1508.33" y="317.50" width="140.12" height="1.30" fill="#000000" fill-opacity="0.16"/><g clip-path="url(#c10)"><rect x="1508.03" y="227.20" width="7.90" height="23.60" fill="#90ee90" stroke="#000" stroke-width="2"/><rect x="1517.91" y="227.20" width="7.90" height="23.60" fill="#90ee90" stroke="#000" stroke-width="2"/><rect x="1544.25" y="227.20" width="7.90" height="23.60" fill="#90ee90" stroke="#000" stroke-width="2"/><rect x="1614.49" y="227.20" width="7.90" height="23.60" fill="#90ee90" stroke="#000" stroke-width="2"/><rect x="1508.03" y="256.10" width="7.90" height="23.60" fill="#90ee90" stroke="#000" stroke-width="2"/><rect x="1561.81" y="256.10" width="7.90" height="23.60" fill="#90ee90" stroke="#000" stroke-width="2"/><rect x="1508.03" y="285.00" width="7.90" height="23.60" fill="#90ee90" stroke="#000" stroke-width="2"/><rect x="1579.37" y="285.00" width="7.90" height="23.60" fill="#90ee90" stroke="#000" stroke-width="2"/><rect x="1508.03" y="313.30" width="7.90" height="23.60" fill="#90ee90" stroke="#000" stroke-width="2"/><rect x="1596.93" y="313.30" width="7.90" height="23.60" fill="#90ee90" stroke="#000" stroke-width="2"/><rect x="1514.23" y="195.05" width="126.1" height="21.8" fill="#e6e6fa" fill-opacity="0.62" stroke="#858a85" stroke-opacity="0.5" stroke-width="1.3"/><text transform="translate(1517.53 213.90) scale(0.9550 1)" font-size="18.64" fill="#1e1e1e">01</text></g><clipPath id="c11"><rect x="1650.50" y="192.00" width="139.12" height="126.80"/></clipPath><rect x="1648.45" y="190.80" width="141.17" height="128.00" fill="#050505"/><rect x="1649.50" y="192.00" width="140.12" height="126.80" fill="#f5deb3"/><rect x="1649.50" y="192.00" width="140.12" height="1.10" fill="#ffffff" fill-opacity="0.38"/><rect x="1649.50" y="192.00" width="1.00" height="126.80" fill="#ffffff" fill-opacity="0.45"/><rect x="1650.50" y="192.00" width="1.00" height="126.80" fill="#ffffff" fill-opacity="0.18"/><rect x="1786.22" y="192.00" width="2.00" height="126.80" fill="#ffffff" fill-opacity="0.10"/><rect x="1788.22" y="192.00" width="1.40" height="126.80" fill="#000000" fill-opacity="0.25"/><rect x="1649.50" y="317.50" width="140.12" height="1.30" fill="#000000" fill-opacity="0.16"/><g clip-path="url(#c11)"><rect x="1655.40" y="195.05" width="126.1" height="21.8" fill="#e6e6fa" fill-opacity="0.62" stroke="#858a85" stroke-opacity="0.5" stroke-width="1.3"/><text transform="translate(1658.70 213.90) scale(0.9550 1)" font-size="18.64" fill="#1e1e1e">02</text></g><clipPath id="c12"><rect x="1791.67" y="192.00" width="139.12" height="126.80"/></clipPath><rect x="1789.62" y="190.80" width="141.17" height="128.00" fill="#050505"/><rect x="1790.67" y="192.00" width="140.12" height="126.80" fill="#a9c5df"/><rect x="1790.67" y="192.00" width="140.12" height="1.10" fill="#ffffff" fill-opacity="0.38"/><rect x="1790.67" y="192.00" width="1.00" height="126.80" fill="#ffffff" fill-opacity="0.45"/><rect x="1791.67" y="192.00" width="1.00" height="126.80" fill="#ffffff" fill-opacity="0.18"/><rect x="1927.39" y="192.00" width="2.00" height="126.80" fill="#ffffff" fill-opacity="0.10"/><rect x="1929.39" y="192.00" width="1.40" height="126.80" fill="#000000" fill-opacity="0.25"/><rect x="1790.67" y="317.50" width="140.12" height="1.30" fill="#000000" fill-opacity="0.16"/><g clip-path="url(#c12)"><rect x="1790.37" y="227.20" width="7.90" height="23.60" fill="#90ee90" stroke="#000" stroke-width="2"/><rect x="1790.37" y="256.10" width="7.90" height="23.60" fill="#90ee90" stroke="#000" stroke-width="2"/><rect x="1852.93" y="285.00" width="7.90" height="23.60" fill="#90ee90" stroke="#000" stroke-width="2"/><rect x="1914.39" y="285.00" width="7.90" height="23.60" fill="#90ee90" stroke="#000" stroke-width="2"/><rect x="1896.83" y="313.30" width="7.90" height="23.60" fill="#90ee90" stroke="#000" stroke-width="2"/><rect x="1796.57" y="195.05" width="126.1" height="21.8" fill="#e6e6fa" fill-opacity="0.62" stroke="#858a85" stroke-opacity="0.5" stroke-width="1.3"/><text transform="translate(1799.87 213.90) scale(0.9550 1)" font-size="18.64" fill="#1e1e1e">03</text></g><clipPath id="c13"><rect x="379.97" y="320.00" width="139.12" height="126.80"/></clipPath><rect x="377.92" y="318.80" width="141.17" height="128.00" fill="#050505"/><rect x="378.97" y="320.00" width="140.12" height="126.80" fill="#c8dcb0"/><rect x="378.97" y="320.00" width="140.12" height="1.10" fill="#ffffff" fill-opacity="0.38"/><rect x="378.97" y="320.00" width="1.00" height="126.80" fill="#ffffff" fill-opacity="0.45"/><rect x="379.97" y="320.00" width="1.00" height="126.80" fill="#ffffff" fill-opacity="0.18"/><rect x="515.69" y="320.00" width="2.00" height="126.80" fill="#ffffff" fill-opacity="0.10"/><rect x="517.69" y="320.00" width="1.40" height="126.80" fill="#000000" fill-opacity="0.25"/><rect x="378.97" y="445.50" width="140.12" height="1.30" fill="#000000" fill-opacity="0.16"/><g clip-path="url(#c13)"><rect x="378.67" y="355.10" width="7.90" height="32.80" fill="#90ee90" stroke="#000" stroke-width="2"/><rect x="441.23" y="355.10" width="7.90" height="32.80" fill="#90ee90" stroke="#000" stroke-width="2"/><rect x="467.57" y="355.10" width="7.90" height="32.80" fill="#90ee90" stroke="#000" stroke-width="2"/><rect x="485.13" y="355.10" width="7.90" height="32.80" fill="#90ee90" stroke="#000" stroke-width="2"/><rect x="378.67" y="394.00" width="7.90" height="32.80" fill="#90ee90" stroke="#000" stroke-width="2"/><rect x="378.67" y="432.00" width="7.90" height="32.80" fill="#90ee90" stroke="#000" stroke-width="2"/><rect x="432.45" y="432.00" width="7.90" height="32.80" fill="#90ee90" stroke="#000" stroke-width="2"/><rect x="384.87" y="323.05" width="126.1" height="21.8" fill="#e6e6fa" fill-opacity="0.62" stroke="#858a85" stroke-opacity="0.5" stroke-width="1.3"/><text transform="translate(388.17 341.90) scale(0.9550 1)" font-size="18.64" fill="#1e1e1e">01</text></g><clipPath id="c14"><rect x="803.48" y="320.00" width="139.12" height="126.80"/></clipPath><rect x="801.43" y="318.80" width="141.17" height="128.00" fill="#050505"/><rect x="802.48" y="320.00" width="140.12" height="126.80" fill="#c8dcb0"/><rect x="802.48" y="320.00" width="140.12" height="1.10" fill="#ffffff" fill-opacity="0.38"/><rect x="802.48" y="320.00" width="1.00" height="126.80" fill="#ffffff" fill-opacity="0.45"/><rect x="803.48" y="320.00" width="1.00" height="126.80" fill="#ffffff" fill-opacity="0.18"/><rect x="939.20" y="320.00" width="2.00" height="126.80" fill="#ffffff" fill-opacity="0.10"/><rect x="941.20" y="320.00" width="1.40" height="126.80" fill="#000000" fill-opacity="0.25"/><rect x="802.48" y="445.50" width="140.12" height="1.30" fill="#000000" fill-opacity="0.16"/><g clip-path="url(#c14)"><rect x="802.18" y="355.10" width="7.90" height="32.80" fill="#90ee90" stroke="#000" stroke-width="2"/><rect x="864.74" y="355.10" width="7.90" height="32.80" fill="#90ee90" stroke="#000" stroke-width="2"/><rect x="891.08" y="355.10" width="7.90" height="32.80" fill="#90ee90" stroke="#000" stroke-width="2"/><rect x="908.64" y="355.10" width="7.90" height="32.80" fill="#90ee90" stroke="#000" stroke-width="2"/><rect x="802.18" y="394.00" width="7.90" height="32.80" fill="#90ee90" stroke="#000" stroke-width="2"/><rect x="802.18" y="432.00" width="7.90" height="32.80" fill="#90ee90" stroke="#000" stroke-width="2"/><rect x="855.96" y="432.00" width="7.90" height="32.80" fill="#90ee90" stroke="#000" stroke-width="2"/><rect x="808.38" y="323.05" width="126.1" height="21.8" fill="#e6e6fa" fill-opacity="0.62" stroke="#858a85" stroke-opacity="0.5" stroke-width="1.3"/><text transform="translate(811.68 341.90) scale(0.9550 1)" font-size="18.64" fill="#1e1e1e">01</text></g><clipPath id="c15"><rect x="1226.99" y="320.00" width="139.12" height="126.80"/></clipPath><rect x="1224.94" y="318.80" width="141.17" height="128.00" fill="#050505"/><rect x="1225.99" y="320.00" width="140.12" height="126.80" fill="#c8dcb0"/><rect x="1225.99" y="320.00" width="140.12" height="1.10" fill="#ffffff" fill-opacity="0.38"/><rect x="1225.99" y="320.00" width="1.00" height="126.80" fill="#ffffff" fill-opacity="0.45"/><rect x="1226.99" y="320.00" width="1.00" height="126.80" fill="#ffffff" fill-opacity="0.18"/><rect x="1362.71" y="320.00" width="2.00" height="126.80" fill="#ffffff" fill-opacity="0.10"/><rect x="1364.71" y="320.00" width="1.40" height="126.80" fill="#000000" fill-opacity="0.25"/><rect x="1225.99" y="445.50" width="140.12" height="1.30" fill="#000000" fill-opacity="0.16"/><g clip-path="url(#c15)"><rect x="1225.69" y="355.10" width="7.90" height="32.80" fill="#90ee90" stroke="#000" stroke-width="2"/><rect x="1288.25" y="355.10" width="7.90" height="32.80" fill="#90ee90" stroke="#000" stroke-width="2"/><rect x="1314.59" y="355.10" width="7.90" height="32.80" fill="#90ee90" stroke="#000" stroke-width="2"/><rect x="1332.15" y="355.10" width="7.90" height="32.80" fill="#90ee90" stroke="#000" stroke-width="2"/><rect x="1225.69" y="394.00" width="7.90" height="32.80" fill="#90ee90" stroke="#000" stroke-width="2"/><rect x="1225.69" y="432.00" width="7.90" height="32.80" fill="#90ee90" stroke="#000" stroke-width="2"/><rect x="1279.47" y="432.00" width="7.90" height="32.80" fill="#90ee90" stroke="#000" stroke-width="2"/><rect x="1231.89" y="323.05" width="126.1" height="21.8" fill="#e6e6fa" fill-opacity="0.62" stroke="#858a85" stroke-opacity="0.5" stroke-width="1.3"/><text transform="translate(1235.19 341.90) scale(0.9550 1)" font-size="18.64" fill="#1e1e1e">01</text></g><clipPath id="c16"><rect x="1650.50" y="320.00" width="139.12" height="126.80"/></clipPath><rect x="1648.45" y="318.80" width="141.17" height="128.00" fill="#050505"/><rect x="1649.50" y="320.00" width="140.12" height="126.80" fill="#c8dcb0"/><rect x="1649.50" y="320.00" width="140.12" height="1.10" fill="#ffffff" fill-opacity="0.38"/><rect x="1649.50" y="320.00" width="1.00" height="126.80" fill="#ffffff" fill-opacity="0.45"/><rect x="1650.50" y="320.00" width="1.00" height="126.80" fill="#ffffff" fill-opacity="0.18"/><rect x="1786.22" y="320.00" width="2.00" height="126.80" fill="#ffffff" fill-opacity="0.10"/><rect x="1788.22" y="320.00" width="1.40" height="126.80" fill="#000000" fill-opacity="0.25"/><rect x="1649.50" y="445.50" width="140.12" height="1.30" fill="#000000" fill-opacity="0.16"/><g clip-path="url(#c16)"><rect x="1649.20" y="355.10" width="7.90" height="32.80" fill="#90ee90" stroke="#000" stroke-width="2"/><rect x="1711.76" y="355.10" width="7.90" height="32.80" fill="#90ee90" stroke="#000" stroke-width="2"/><rect x="1738.10" y="355.10" width="7.90" height="32.80" fill="#90ee90" stroke="#000" stroke-width="2"/><rect x="1755.66" y="355.10" width="7.90" height="32.80" fill="#90ee90" stroke="#000" stroke-width="2"/><rect x="1649.20" y="394.00" width="7.90" height="32.80" fill="#90ee90" stroke="#000" stroke-width="2"/><rect x="1649.20" y="432.00" width="7.90" height="32.80" fill="#90ee90" stroke="#000" stroke-width="2"/><rect x="1702.98" y="432.00" width="7.90" height="32.80" fill="#90ee90" stroke="#000" stroke-width="2"/><rect x="1655.40" y="323.05" width="126.1" height="21.8" fill="#e6e6fa" fill-opacity="0.62" stroke="#858a85" stroke-opacity="0.5" stroke-width="1.3"/><text transform="translate(1658.70 341.90) scale(0.9550 1)" font-size="18.64" fill="#1e1e1e">01</text></g><clipPath id="c17"><rect x="238.80" y="448.00" width="139.12" height="126.80"/></clipPath><rect x="236.75" y="446.80" width="141.17" height="128.00" fill="#050505"/><rect x="237.80" y="448.00" width="140.12" height="126.80" fill="#c8dcb0"/><rect x="237.80" y="448.00" width="140.12" height="1.10" fill="#ffffff" fill-opacity="0.38"/><rect x="237.80" y="448.00" width="1.00" height="126.80" fill="#ffffff" fill-opacity="0.45"/><rect x="238.80" y="448.00" width="1.00" height="126.80" fill="#ffffff" fill-opacity="0.18"/><rect x="374.52" y="448.00" width="2.00" height="126.80" fill="#ffffff" fill-opacity="0.10"/><rect x="376.52" y="448.00" width="1.40" height="126.80" fill="#000000" fill-opacity="0.25"/><rect x="237.80" y="573.50" width="140.12" height="1.30" fill="#000000" fill-opacity="0.16"/><g clip-path="url(#c17)"><rect x="237.50" y="487.00" width="7.90" height="118.00" fill="#90ee90" stroke="#000" stroke-width="2"/><rect x="308.84" y="487.00" width="7.90" height="118.00" fill="#90ee90" stroke="#000" stroke-width="2"/><rect x="343.96" y="487.00" width="7.90" height="118.00" fill="#90ee90" stroke="#000" stroke-width="2"/><rect x="370.30" y="487.00" width="7.90" height="118.00" fill="#90ee90" stroke="#000" stroke-width="2"/><rect x="243.70" y="451.05" width="126.1" height="21.8" fill="#e6e6fa" fill-opacity="0.62" stroke="#858a85" stroke-opacity="0.5" stroke-width="1.3"/><text transform="translate(247.00 469.90) scale(0.9550 1)" font-size="18.64" fill="#1e1e1e">01</text></g><clipPath id="c18"><rect x="662.31" y="448.00" width="139.12" height="126.80"/></clipPath><rect x="660.26" y="446.80" width="141.17" height="128.00" fill="#050505"/><rect x="661.31" y="448.00" width="140.12" height="126.80" fill="#c8dcb0"/><rect x="661.31" y="448.00" width="140.12" height="1.10" fill="#ffffff" fill-opacity="0.38"/><rect x="661.31" y="448.00" width="1.00" height="126.80" fill="#ffffff" fill-opacity="0.45"/><rect x="662.31" y="448.00" width="1.00" height="126.80" fill="#ffffff" fill-opacity="0.18"/><rect x="798.03" y="448.00" width="2.00" height="126.80" fill="#ffffff" fill-opacity="0.10"/><rect x="800.03" y="448.00" width="1.40" height="126.80" fill="#000000" fill-opacity="0.25"/><rect x="661.31" y="573.50" width="140.12" height="1.30" fill="#000000" fill-opacity="0.16"/><g clip-path="url(#c18)"><rect x="661.01" y="487.00" width="7.90" height="118.00" fill="#90ee90" stroke="#000" stroke-width="2"/><rect x="732.35" y="487.00" width="7.90" height="118.00" fill="#90ee90" stroke="#000" stroke-width="2"/><rect x="767.47" y="487.00" width="7.90" height="118.00" fill="#90ee90" stroke="#000" stroke-width="2"/><rect x="793.81" y="487.00" width="7.90" height="118.00" fill="#90ee90" stroke="#000" stroke-width="2"/><rect x="667.21" y="451.05" width="126.1" height="21.8" fill="#e6e6fa" fill-opacity="0.62" stroke="#858a85" stroke-opacity="0.5" stroke-width="1.3"/><text transform="translate(670.51 469.90) scale(0.9550 1)" font-size="18.64" fill="#1e1e1e">01</text></g><clipPath id="c19"><rect x="1085.82" y="448.00" width="139.12" height="126.80"/></clipPath><rect x="1083.77" y="446.80" width="141.17" height="128.00" fill="#050505"/><rect x="1084.82" y="448.00" width="140.12" height="126.80" fill="#c8dcb0"/><rect x="1084.82" y="448.00" width="140.12" height="1.10" fill="#ffffff" fill-opacity="0.38"/><rect x="1084.82" y="448.00" width="1.00" height="126.80" fill="#ffffff" fill-opacity="0.45"/><rect x="1085.82" y="448.00" width="1.00" height="126.80" fill="#ffffff" fill-opacity="0.18"/><rect x="1221.54" y="448.00" width="2.00" height="126.80" fill="#ffffff" fill-opacity="0.10"/><rect x="1223.54" y="448.00" width="1.40" height="126.80" fill="#000000" fill-opacity="0.25"/><rect x="1084.82" y="573.50" width="140.12" height="1.30" fill="#000000" fill-opacity="0.16"/><g clip-path="url(#c19)"><rect x="1084.52" y="487.00" width="7.90" height="118.00" fill="#90ee90" stroke="#000" stroke-width="2"/><rect x="1155.86" y="487.00" width="7.90" height="118.00" fill="#90ee90" stroke="#000" stroke-width="2"/><rect x="1190.98" y="487.00" width="7.90" height="118.00" fill="#90ee90" stroke="#000" stroke-width="2"/><rect x="1217.32" y="487.00" width="7.90" height="118.00" fill="#90ee90" stroke="#000" stroke-width="2"/><rect x="1090.72" y="451.05" width="126.1" height="21.8" fill="#e6e6fa" fill-opacity="0.62" stroke="#858a85" stroke-opacity="0.5" stroke-width="1.3"/><text transform="translate(1094.02 469.90) scale(0.9550 1)" font-size="18.64" fill="#1e1e1e">01</text></g><clipPath id="c20"><rect x="1509.33" y="448.00" width="139.12" height="126.80"/></clipPath><rect x="1507.28" y="446.80" width="141.17" height="128.00" fill="#050505"/><rect x="1508.33" y="448.00" width="140.12" height="126.80" fill="#c8dcb0"/><rect x="1508.33" y="448.00" width="140.12" height="1.10" fill="#ffffff" fill-opacity="0.38"/><rect x="1508.33" y="448.00" width="1.00" height="126.80" fill="#ffffff" fill-opacity="0.45"/><rect x="1509.33" y="448.00" width="1.00" height="126.80" fill="#ffffff" fill-opacity="0.18"/><rect x="1645.05" y="448.00" width="2.00" height="126.80" fill="#ffffff" fill-opacity="0.10"/><rect x="1647.05" y="448.00" width="1.40" height="126.80" fill="#000000" fill-opacity="0.25"/><rect x="1508.33" y="573.50" width="140.12" height="1.30" fill="#000000" fill-opacity="0.16"/><g clip-path="url(#c20)"><rect x="1508.03" y="487.00" width="7.90" height="118.00" fill="#90ee90" stroke="#000" stroke-width="2"/><rect x="1579.37" y="487.00" width="7.90" height="118.00" fill="#90ee90" stroke="#000" stroke-width="2"/><rect x="1614.49" y="487.00" width="7.90" height="118.00" fill="#90ee90" stroke="#000" stroke-width="2"/><rect x="1640.83" y="487.00" width="7.90" height="118.00" fill="#90ee90" stroke="#000" stroke-width="2"/><rect x="1514.23" y="451.05" width="126.1" height="21.8" fill="#e6e6fa" fill-opacity="0.62" stroke="#858a85" stroke-opacity="0.5" stroke-width="1.3"/><text transform="translate(1517.53 469.90) scale(0.9550 1)" font-size="18.64" fill="#1e1e1e">01</text></g><clipPath id="c21"><rect x="238.80" y="576.00" width="139.12" height="126.80"/></clipPath><rect x="236.75" y="574.80" width="141.17" height="128.00" fill="#050505"/><rect x="237.80" y="576.00" width="140.12" height="126.80" fill="#f5deb3"/><rect x="237.80" y="576.00" width="140.12" height="1.10" fill="#ffffff" fill-opacity="0.38"/><rect x="237.80" y="576.00" width="1.00" height="126.80" fill="#ffffff" fill-opacity="0.45"/><rect x="238.80" y="576.00" width="1.00" height="126.80" fill="#ffffff" fill-opacity="0.18"/><rect x="374.52" y="576.00" width="2.00" height="126.80" fill="#ffffff" fill-opacity="0.10"/><rect x="376.52" y="576.00" width="1.40" height="126.80" fill="#000000" fill-opacity="0.25"/><rect x="237.80" y="701.50" width="140.12" height="1.30" fill="#000000" fill-opacity="0.16"/><g clip-path="url(#c21)"><rect x="237.50" y="610.00" width="7.90" height="10.80" fill="#90ee90" stroke="#000" stroke-width="2"/><rect x="247.38" y="610.00" width="7.90" height="10.80" fill="#90ee90" stroke="#000" stroke-width="2"/><rect x="237.50" y="625.00" width="7.90" height="10.80" fill="#90ee90" stroke="#000" stroke-width="2"/><rect x="237.50" y="639.10" width="7.90" height="10.80" fill="#90ee90" stroke="#000" stroke-width="2"/><rect x="243.70" y="579.05" width="126.1" height="21.8" fill="#e6e6fa" fill-opacity="0.62" stroke="#858a85" stroke-opacity="0.5" stroke-width="1.3"/><text transform="translate(247.00 597.90) scale(0.9550 1)" font-size="18.64" fill="#1e1e1e">02</text></g><clipPath id="c22"><rect x="379.97" y="576.00" width="139.12" height="126.80"/></clipPath><rect x="377.92" y="574.80" width="141.17" height="128.00" fill="#050505"/><rect x="378.97" y="576.00" width="140.12" height="126.80" fill="#c8dcb0"/><rect x="378.97" y="576.00" width="140.12" height="1.10" fill="#ffffff" fill-opacity="0.38"/><rect x="378.97" y="576.00" width="1.00" height="126.80" fill="#ffffff" fill-opacity="0.45"/><rect x="379.97" y="576.00" width="1.00" height="126.80" fill="#ffffff" fill-opacity="0.18"/><rect x="515.69" y="576.00" width="2.00" height="126.80" fill="#ffffff" fill-opacity="0.10"/><rect x="517.69" y="576.00" width="1.40" height="126.80" fill="#000000" fill-opacity="0.25"/><rect x="378.97" y="701.50" width="140.12" height="1.30" fill="#000000" fill-opacity="0.16"/><g clip-path="url(#c22)"><rect x="378.67" y="610.00" width="7.90" height="10.80" fill="#90ee90" stroke="#000" stroke-width="2"/><rect x="450.01" y="610.00" width="7.90" height="10.80" fill="#90ee90" stroke="#000" stroke-width="2"/><rect x="378.67" y="625.00" width="7.90" height="10.80" fill="#90ee90" stroke="#000" stroke-width="2"/><rect x="485.13" y="625.00" width="7.90" height="10.80" fill="#90ee90" stroke="#000" stroke-width="2"/><rect x="502.69" y="625.00" width="7.90" height="10.80" fill="#90ee90" stroke="#000" stroke-width="2"/><rect x="378.67" y="639.10" width="7.90" height="10.80" fill="#90ee90" stroke="#000" stroke-width="2"/><rect x="384.87" y="579.05" width="126.1" height="21.8" fill="#e6e6fa" fill-opacity="0.62" stroke="#858a85" stroke-opacity="0.5" stroke-width="1.3"/><text transform="translate(388.17 597.90) scale(0.9550 1)" font-size="18.64" fill="#1e1e1e">01</text></g><clipPath id="c23"><rect x="662.31" y="576.00" width="139.12" height="126.80"/></clipPath><rect x="660.26" y="574.80" width="141.17" height="128.00" fill="#050505"/><rect x="661.31" y="576.00" width="140.12" height="126.80" fill="#f5deb3"/><rect x="661.31" y="576.00" width="140.12" height="1.10" fill="#ffffff" fill-opacity="0.38"/><rect x="661.31" y="576.00" width="1.00" height="126.80" fill="#ffffff" fill-opacity="0.45"/><rect x="662.31" y="576.00" width="1.00" height="126.80" fill="#ffffff" fill-opacity="0.18"/><rect x="798.03" y="576.00" width="2.00" height="126.80" fill="#ffffff" fill-opacity="0.10"/><rect x="800.03" y="576.00" width="1.40" height="126.80" fill="#000000" fill-opacity="0.25"/><rect x="661.31" y="701.50" width="140.12" height="1.30" fill="#000000" fill-opacity="0.16"/><g clip-path="url(#c23)"><rect x="661.01" y="610.00" width="7.90" height="10.80" fill="#90ee90" stroke="#000" stroke-width="2"/><rect x="670.89" y="610.00" width="7.90" height="10.80" fill="#90ee90" stroke="#000" stroke-width="2"/><rect x="661.01" y="625.00" width="7.90" height="10.80" fill="#90ee90" stroke="#000" stroke-width="2"/><rect x="661.01" y="639.10" width="7.90" height="10.80" fill="#90ee90" stroke="#000" stroke-width="2"/><rect x="667.21" y="579.05" width="126.1" height="21.8" fill="#e6e6fa" fill-opacity="0.62" stroke="#858a85" stroke-opacity="0.5" stroke-width="1.3"/><text transform="translate(670.51 597.90) scale(0.9550 1)" font-size="18.64" fill="#1e1e1e">02</text></g><clipPath id="c24"><rect x="803.48" y="576.00" width="139.12" height="126.80"/></clipPath><rect x="801.43" y="574.80" width="141.17" height="128.00" fill="#050505"/><rect x="802.48" y="576.00" width="140.12" height="126.80" fill="#c8dcb0"/><rect x="802.48" y="576.00" width="140.12" height="1.10" fill="#ffffff" fill-opacity="0.38"/><rect x="802.48" y="576.00" width="1.00" height="126.80" fill="#ffffff" fill-opacity="0.45"/><rect x="803.48" y="576.00" width="1.00" height="126.80" fill="#ffffff" fill-opacity="0.18"/><rect x="939.20" y="576.00" width="2.00" height="126.80" fill="#ffffff" fill-opacity="0.10"/><rect x="941.20" y="576.00" width="1.40" height="126.80" fill="#000000" fill-opacity="0.25"/><rect x="802.48" y="701.50" width="140.12" height="1.30" fill="#000000" fill-opacity="0.16"/><g clip-path="url(#c24)"><rect x="802.18" y="610.00" width="7.90" height="10.80" fill="#90ee90" stroke="#000" stroke-width="2"/><rect x="873.52" y="610.00" width="7.90" height="10.80" fill="#90ee90" stroke="#000" stroke-width="2"/><rect x="802.18" y="625.00" width="7.90" height="10.80" fill="#90ee90" stroke="#000" stroke-width="2"/><rect x="908.64" y="625.00" width="7.90" height="10.80" fill="#90ee90" stroke="#000" stroke-width="2"/><rect x="926.20" y="625.00" width="7.90" height="10.80" fill="#90ee90" stroke="#000" stroke-width="2"/><rect x="802.18" y="639.10" width="7.90" height="10.80" fill="#90ee90" stroke="#000" stroke-width="2"/><rect x="808.38" y="579.05" width="126.1" height="21.8" fill="#e6e6fa" fill-opacity="0.62" stroke="#858a85" stroke-opacity="0.5" stroke-width="1.3"/><text transform="translate(811.68 597.90) scale(0.9550 1)" font-size="18.64" fill="#1e1e1e">01</text></g><clipPath id="c25"><rect x="1085.82" y="576.00" width="139.12" height="126.80"/></clipPath><rect x="1083.77" y="574.80" width="141.17" height="128.00" fill="#050505"/><rect x="1084.82" y="576.00" width="140.12" height="126.80" fill="#f5deb3"/><rect x="1084.82" y="576.00" width="140.12" height="1.10" fill="#ffffff" fill-opacity="0.38"/><rect x="1084.82" y="576.00" width="1.00" height="126.80" fill="#ffffff" fill-opacity="0.45"/><rect x="1085.82" y="576.00" width="1.00" height="126.80" fill="#ffffff" fill-opacity="0.18"/><rect x="1221.54" y="576.00" width="2.00" height="126.80" fill="#ffffff" fill-opacity="0.10"/><rect x="1223.54" y="576.00" width="1.40" height="126.80" fill="#000000" fill-opacity="0.25"/><rect x="1084.82" y="701.50" width="140.12" height="1.30" fill="#000000" fill-opacity="0.16"/><g clip-path="url(#c25)"><rect x="1084.52" y="610.00" width="7.90" height="10.80" fill="#90ee90" stroke="#000" stroke-width="2"/><rect x="1094.40" y="610.00" width="7.90" height="10.80" fill="#90ee90" stroke="#000" stroke-width="2"/><rect x="1084.52" y="625.00" width="7.90" height="10.80" fill="#90ee90" stroke="#000" stroke-width="2"/><rect x="1084.52" y="639.10" width="7.90" height="10.80" fill="#90ee90" stroke="#000" stroke-width="2"/><rect x="1090.72" y="579.05" width="126.1" height="21.8" fill="#e6e6fa" fill-opacity="0.62" stroke="#858a85" stroke-opacity="0.5" stroke-width="1.3"/><text transform="translate(1094.02 597.90) scale(0.9550 1)" font-size="18.64" fill="#1e1e1e">02</text></g><clipPath id="c26"><rect x="1226.99" y="576.00" width="139.12" height="126.80"/></clipPath><rect x="1224.94" y="574.80" width="141.17" height="128.00" fill="#050505"/><rect x="1225.99" y="576.00" width="140.12" height="126.80" fill="#c8dcb0"/><rect x="1225.99" y="576.00" width="140.12" height="1.10" fill="#ffffff" fill-opacity="0.38"/><rect x="1225.99" y="576.00" width="1.00" height="126.80" fill="#ffffff" fill-opacity="0.45"/><rect x="1226.99" y="576.00" width="1.00" height="126.80" fill="#ffffff" fill-opacity="0.18"/><rect x="1362.71" y="576.00" width="2.00" height="126.80" fill="#ffffff" fill-opacity="0.10"/><rect x="1364.71" y="576.00" width="1.40" height="126.80" fill="#000000" fill-opacity="0.25"/><rect x="1225.99" y="701.50" width="140.12" height="1.30" fill="#000000" fill-opacity="0.16"/><g clip-path="url(#c26)"><rect x="1225.69" y="610.00" width="7.90" height="10.80" fill="#90ee90" stroke="#000" stroke-width="2"/><rect x="1297.03" y="610.00" width="7.90" height="10.80" fill="#90ee90" stroke="#000" stroke-width="2"/><rect x="1225.69" y="625.00" width="7.90" height="10.80" fill="#90ee90" stroke="#000" stroke-width="2"/><rect x="1332.15" y="625.00" width="7.90" height="10.80" fill="#90ee90" stroke="#000" stroke-width="2"/><rect x="1349.71" y="625.00" width="7.90" height="10.80" fill="#90ee90" stroke="#000" stroke-width="2"/><rect x="1225.69" y="639.10" width="7.90" height="10.80" fill="#90ee90" stroke="#000" stroke-width="2"/><rect x="1231.89" y="579.05" width="126.1" height="21.8" fill="#e6e6fa" fill-opacity="0.62" stroke="#858a85" stroke-opacity="0.5" stroke-width="1.3"/><text transform="translate(1235.19 597.90) scale(0.9550 1)" font-size="18.64" fill="#1e1e1e">01</text></g><clipPath id="c27"><rect x="1509.33" y="576.00" width="139.12" height="126.80"/></clipPath><rect x="1507.28" y="574.80" width="141.17" height="128.00" fill="#050505"/><rect x="1508.33" y="576.00" width="140.12" height="126.80" fill="#f5deb3"/><rect x="1508.33" y="576.00" width="140.12" height="1.10" fill="#ffffff" fill-opacity="0.38"/><rect x="1508.33" y="576.00" width="1.00" height="126.80" fill="#ffffff" fill-opacity="0.45"/><rect x="1509.33" y="576.00" width="1.00" height="126.80" fill="#ffffff" fill-opacity="0.18"/><rect x="1645.05" y="576.00" width="2.00" height="126.80" fill="#ffffff" fill-opacity="0.10"/><rect x="1647.05" y="576.00" width="1.40" height="126.80" fill="#000000" fill-opacity="0.25"/><rect x="1508.33" y="701.50" width="140.12" height="1.30" fill="#000000" fill-opacity="0.16"/><g clip-path="url(#c27)"><rect x="1508.03" y="610.00" width="7.90" height="10.80" fill="#90ee90" stroke="#000" stroke-width="2"/><rect x="1517.91" y="610.00" width="7.90" height="10.80" fill="#90ee90" stroke="#000" stroke-width="2"/><rect x="1508.03" y="625.00" width="7.90" height="10.80" fill="#90ee90" stroke="#000" stroke-width="2"/><rect x="1508.03" y="639.10" width="7.90" height="10.80" fill="#90ee90" stroke="#000" stroke-width="2"/><rect x="1514.23" y="579.05" width="126.1" height="21.8" fill="#e6e6fa" fill-opacity="0.62" stroke="#858a85" stroke-opacity="0.5" stroke-width="1.3"/><text transform="translate(1517.53 597.90) scale(0.9550 1)" font-size="18.64" fill="#1e1e1e">02</text></g><clipPath id="c28"><rect x="1650.50" y="576.00" width="139.12" height="126.80"/></clipPath><rect x="1648.45" y="574.80" width="141.17" height="128.00" fill="#050505"/><rect x="1649.50" y="576.00" width="140.12" height="126.80" fill="#c8dcb0"/><rect x="1649.50" y="576.00" width="140.12" height="1.10" fill="#ffffff" fill-opacity="0.38"/><rect x="1649.50" y="576.00" width="1.00" height="126.80" fill="#ffffff" fill-opacity="0.45"/><rect x="1650.50" y="576.00" width="1.00" height="126.80" fill="#ffffff" fill-opacity="0.18"/><rect x="1786.22" y="576.00" width="2.00" height="126.80" fill="#ffffff" fill-opacity="0.10"/><rect x="1788.22" y="576.00" width="1.40" height="126.80" fill="#000000" fill-opacity="0.25"/><rect x="1649.50" y="701.50" width="140.12" height="1.30" fill="#000000" fill-opacity="0.16"/><g clip-path="url(#c28)"><rect x="1649.20" y="610.00" width="7.90" height="10.80" fill="#90ee90" stroke="#000" stroke-width="2"/><rect x="1720.54" y="610.00" width="7.90" height="10.80" fill="#90ee90" stroke="#000" stroke-width="2"/><rect x="1649.20" y="625.00" width="7.90" height="10.80" fill="#90ee90" stroke="#000" stroke-width="2"/><rect x="1755.66" y="625.00" width="7.90" height="10.80" fill="#90ee90" stroke="#000" stroke-width="2"/><rect x="1773.22" y="625.00" width="7.90" height="10.80" fill="#90ee90" stroke="#000" stroke-width="2"/><rect x="1649.20" y="639.10" width="7.90" height="10.80" fill="#90ee90" stroke="#000" stroke-width="2"/><rect x="1655.40" y="579.05" width="126.1" height="21.8" fill="#e6e6fa" fill-opacity="0.62" stroke="#858a85" stroke-opacity="0.5" stroke-width="1.3"/><text transform="translate(1658.70 597.90) scale(0.9550 1)" font-size="18.64" fill="#1e1e1e">01</text></g><clipPath id="c29"><rect x="238.80" y="832.00" width="139.12" height="126.80"/></clipPath><rect x="236.75" y="830.80" width="141.17" height="128.00" fill="#050505"/><rect x="237.80" y="832.00" width="140.12" height="126.80" fill="#8fb9c4"/><rect x="237.80" y="832.00" width="140.12" height="1.10" fill="#ffffff" fill-opacity="0.38"/><rect x="237.80" y="832.00" width="1.00" height="126.80" fill="#ffffff" fill-opacity="0.45"/><rect x="238.80" y="832.00" width="1.00" height="126.80" fill="#ffffff" fill-opacity="0.18"/><rect x="374.52" y="832.00" width="2.00" height="126.80" fill="#ffffff" fill-opacity="0.10"/><rect x="376.52" y="832.00" width="1.40" height="126.80" fill="#000000" fill-opacity="0.25"/><rect x="237.80" y="957.50" width="140.12" height="1.30" fill="#000000" fill-opacity="0.16"/><g clip-path="url(#c29)"><rect x="237.50" y="867.10" width="7.90" height="32.30" fill="#90ee90" stroke="#000" stroke-width="2"/><rect x="237.50" y="906.20" width="7.90" height="32.30" fill="#90ee90" stroke="#000" stroke-width="2"/><rect x="237.50" y="944.30" width="7.90" height="32.30" fill="#90ee90" stroke="#000" stroke-width="2"/><rect x="243.70" y="835.05" width="126.1" height="21.8" fill="#e6e6fa" fill-opacity="0.62" stroke="#858a85" stroke-opacity="0.5" stroke-width="1.3"/><text transform="translate(247.00 853.90) scale(0.9550 1)" font-size="18.64" fill="#1e1e1e">00</text></g><clipPath id="c30"><rect x="379.97" y="832.00" width="139.12" height="126.80"/></clipPath><rect x="377.92" y="830.80" width="141.17" height="128.00" fill="#050505"/><rect x="378.97" y="832.00" width="140.12" height="126.80" fill="#c8dcb0"/><rect x="378.97" y="832.00" width="140.12" height="1.10" fill="#ffffff" fill-opacity="0.38"/><rect x="378.97" y="832.00" width="1.00" height="126.80" fill="#ffffff" fill-opacity="0.45"/><rect x="379.97" y="832.00" width="1.00" height="126.80" fill="#ffffff" fill-opacity="0.18"/><rect x="515.69" y="832.00" width="2.00" height="126.80" fill="#ffffff" fill-opacity="0.10"/><rect x="517.69" y="832.00" width="1.40" height="126.80" fill="#000000" fill-opacity="0.25"/><rect x="378.97" y="957.50" width="140.12" height="1.30" fill="#000000" fill-opacity="0.16"/><g clip-path="url(#c30)"><rect x="378.67" y="867.10" width="7.90" height="32.30" fill="#90ee90" stroke="#000" stroke-width="2"/><rect x="384.87" y="835.05" width="126.1" height="21.8" fill="#e6e6fa" fill-opacity="0.62" stroke="#858a85" stroke-opacity="0.5" stroke-width="1.3"/><text transform="translate(388.17 853.90) scale(0.9550 1)" font-size="18.64" fill="#1e1e1e">01</text></g><clipPath id="c31"><rect x="521.14" y="832.00" width="139.12" height="126.80"/></clipPath><rect x="519.09" y="830.80" width="141.17" height="128.00" fill="#050505"/><rect x="520.14" y="832.00" width="140.12" height="126.80" fill="#a9c5df"/><rect x="520.14" y="832.00" width="140.12" height="1.10" fill="#ffffff" fill-opacity="0.38"/><rect x="520.14" y="832.00" width="1.00" height="126.80" fill="#ffffff" fill-opacity="0.45"/><rect x="521.14" y="832.00" width="1.00" height="126.80" fill="#ffffff" fill-opacity="0.18"/><rect x="656.86" y="832.00" width="2.00" height="126.80" fill="#ffffff" fill-opacity="0.10"/><rect x="658.86" y="832.00" width="1.40" height="126.80" fill="#000000" fill-opacity="0.25"/><rect x="520.14" y="957.50" width="140.12" height="1.30" fill="#000000" fill-opacity="0.16"/><g clip-path="url(#c31)"><rect x="564.84" y="867.10" width="7.90" height="32.30" fill="#808080" stroke="#000" stroke-width="2"/><rect x="519.84" y="867.10" width="7.90" height="32.30" fill="#90ee90" stroke="#000" stroke-width="2"/><rect x="582.40" y="867.10" width="7.90" height="32.30" fill="#90ee90" stroke="#000" stroke-width="2"/><rect x="573.62" y="906.20" width="7.90" height="32.30" fill="#808080" stroke="#000" stroke-width="2"/><rect x="519.84" y="906.20" width="7.90" height="32.30" fill="#90ee90" stroke="#000" stroke-width="2"/><rect x="582.40" y="906.20" width="7.90" height="32.30" fill="#90ee90" stroke="#000" stroke-width="2"/><rect x="526.04" y="835.05" width="126.1" height="21.8" fill="#e6e6fa" fill-opacity="0.62" stroke="#858a85" stroke-opacity="0.5" stroke-width="1.3"/><text transform="translate(529.34 853.90) scale(0.9550 1)" font-size="18.64" fill="#1e1e1e">03</text></g><clipPath id="c32"><rect x="662.31" y="832.00" width="139.12" height="126.80"/></clipPath><rect x="660.26" y="830.80" width="141.17" height="128.00" fill="#050505"/><rect x="661.31" y="832.00" width="140.12" height="126.80" fill="#8fb9c4"/><rect x="661.31" y="832.00" width="140.12" height="1.10" fill="#ffffff" fill-opacity="0.38"/><rect x="661.31" y="832.00" width="1.00" height="126.80" fill="#ffffff" fill-opacity="0.45"/><rect x="662.31" y="832.00" width="1.00" height="126.80" fill="#ffffff" fill-opacity="0.18"/><rect x="798.03" y="832.00" width="2.00" height="126.80" fill="#ffffff" fill-opacity="0.10"/><rect x="800.03" y="832.00" width="1.40" height="126.80" fill="#000000" fill-opacity="0.25"/><rect x="661.31" y="957.50" width="140.12" height="1.30" fill="#000000" fill-opacity="0.16"/><g clip-path="url(#c32)"><rect x="661.01" y="867.10" width="7.90" height="32.30" fill="#90ee90" stroke="#000" stroke-width="2"/><rect x="661.01" y="906.20" width="7.90" height="32.30" fill="#90ee90" stroke="#000" stroke-width="2"/><rect x="661.01" y="944.30" width="7.90" height="32.30" fill="#90ee90" stroke="#000" stroke-width="2"/><rect x="667.21" y="835.05" width="126.1" height="21.8" fill="#e6e6fa" fill-opacity="0.62" stroke="#858a85" stroke-opacity="0.5" stroke-width="1.3"/><text transform="translate(670.51 853.90) scale(0.9550 1)" font-size="18.64" fill="#1e1e1e">00</text></g><clipPath id="c33"><rect x="803.48" y="832.00" width="139.12" height="126.80"/></clipPath><rect x="801.43" y="830.80" width="141.17" height="128.00" fill="#050505"/><rect x="802.48" y="832.00" width="140.12" height="126.80" fill="#c8dcb0"/><rect x="802.48" y="832.00" width="140.12" height="1.10" fill="#ffffff" fill-opacity="0.38"/><rect x="802.48" y="832.00" width="1.00" height="126.80" fill="#ffffff" fill-opacity="0.45"/><rect x="803.48" y="832.00" width="1.00" height="126.80" fill="#ffffff" fill-opacity="0.18"/><rect x="939.20" y="832.00" width="2.00" height="126.80" fill="#ffffff" fill-opacity="0.10"/><rect x="941.20" y="832.00" width="1.40" height="126.80" fill="#000000" fill-opacity="0.25"/><rect x="802.48" y="957.50" width="140.12" height="1.30" fill="#000000" fill-opacity="0.16"/><g clip-path="url(#c33)"><rect x="802.18" y="867.10" width="7.90" height="32.30" fill="#90ee90" stroke="#000" stroke-width="2"/><rect x="808.38" y="835.05" width="126.1" height="21.8" fill="#e6e6fa" fill-opacity="0.62" stroke="#858a85" stroke-opacity="0.5" stroke-width="1.3"/><text transform="translate(811.68 853.90) scale(0.9550 1)" font-size="18.64" fill="#1e1e1e">01</text></g><clipPath id="c34"><rect x="944.65" y="832.00" width="139.12" height="126.80"/></clipPath><rect x="942.60" y="830.80" width="141.17" height="128.00" fill="#050505"/><rect x="943.65" y="832.00" width="140.12" height="126.80" fill="#a9c5df"/><rect x="943.65" y="832.00" width="140.12" height="1.10" fill="#ffffff" fill-opacity="0.38"/><rect x="943.65" y="832.00" width="1.00" height="126.80" fill="#ffffff" fill-opacity="0.45"/><rect x="944.65" y="832.00" width="1.00" height="126.80" fill="#ffffff" fill-opacity="0.18"/><rect x="1080.37" y="832.00" width="2.00" height="126.80" fill="#ffffff" fill-opacity="0.10"/><rect x="1082.37" y="832.00" width="1.40" height="126.80" fill="#000000" fill-opacity="0.25"/><rect x="943.65" y="957.50" width="140.12" height="1.30" fill="#000000" fill-opacity="0.16"/><g clip-path="url(#c34)"><rect x="988.35" y="867.10" width="7.90" height="32.30" fill="#808080" stroke="#000" stroke-width="2"/><rect x="943.35" y="867.10" width="7.90" height="32.30" fill="#90ee90" stroke="#000" stroke-width="2"/><rect x="1005.91" y="867.10" width="7.90" height="32.30" fill="#90ee90" stroke="#000" stroke-width="2"/><rect x="997.13" y="906.20" width="7.90" height="32.30" fill="#808080" stroke="#000" stroke-width="2"/><rect x="943.35" y="906.20" width="7.90" height="32.30" fill="#90ee90" stroke="#000" stroke-width="2"/><rect x="1005.91" y="906.20" width="7.90" height="32.30" fill="#90ee90" stroke="#000" stroke-width="2"/><rect x="949.55" y="835.05" width="126.1" height="21.8" fill="#e6e6fa" fill-opacity="0.62" stroke="#858a85" stroke-opacity="0.5" stroke-width="1.3"/><text transform="translate(952.85 853.90) scale(0.9550 1)" font-size="18.64" fill="#1e1e1e">03</text></g><clipPath id="c35"><rect x="1085.82" y="832.00" width="139.12" height="126.80"/></clipPath><rect x="1083.77" y="830.80" width="141.17" height="128.00" fill="#050505"/><rect x="1084.82" y="832.00" width="140.12" height="126.80" fill="#8fb9c4"/><rect x="1084.82" y="832.00" width="140.12" height="1.10" fill="#ffffff" fill-opacity="0.38"/><rect x="1084.82" y="832.00" width="1.00" height="126.80" fill="#ffffff" fill-opacity="0.45"/><rect x="1085.82" y="832.00" width="1.00" height="126.80" fill="#ffffff" fill-opacity="0.18"/><rect x="1221.54" y="832.00" width="2.00" height="126.80" fill="#ffffff" fill-opacity="0.10"/><rect x="1223.54" y="832.00" width="1.40" height="126.80" fill="#000000" fill-opacity="0.25"/><rect x="1084.82" y="957.50" width="140.12" height="1.30" fill="#000000" fill-opacity="0.16"/><g clip-path="url(#c35)"><rect x="1084.52" y="867.10" width="7.90" height="32.30" fill="#90ee90" stroke="#000" stroke-width="2"/><rect x="1084.52" y="906.20" width="7.90" height="32.30" fill="#90ee90" stroke="#000" stroke-width="2"/><rect x="1084.52" y="944.30" width="7.90" height="32.30" fill="#90ee90" stroke="#000" stroke-width="2"/><rect x="1090.72" y="835.05" width="126.1" height="21.8" fill="#e6e6fa" fill-opacity="0.62" stroke="#858a85" stroke-opacity="0.5" stroke-width="1.3"/><text transform="translate(1094.02 853.90) scale(0.9550 1)" font-size="18.64" fill="#1e1e1e">00</text></g><clipPath id="c36"><rect x="1226.99" y="832.00" width="139.12" height="126.80"/></clipPath><rect x="1224.94" y="830.80" width="141.17" height="128.00" fill="#050505"/><rect x="1225.99" y="832.00" width="140.12" height="126.80" fill="#c8dcb0"/><rect x="1225.99" y="832.00" width="140.12" height="1.10" fill="#ffffff" fill-opacity="0.38"/><rect x="1225.99" y="832.00" width="1.00" height="126.80" fill="#ffffff" fill-opacity="0.45"/><rect x="1226.99" y="832.00" width="1.00" height="126.80" fill="#ffffff" fill-opacity="0.18"/><rect x="1362.71" y="832.00" width="2.00" height="126.80" fill="#ffffff" fill-opacity="0.10"/><rect x="1364.71" y="832.00" width="1.40" height="126.80" fill="#000000" fill-opacity="0.25"/><rect x="1225.99" y="957.50" width="140.12" height="1.30" fill="#000000" fill-opacity="0.16"/><g clip-path="url(#c36)"><rect x="1225.69" y="867.10" width="7.90" height="32.30" fill="#90ee90" stroke="#000" stroke-width="2"/><rect x="1231.89" y="835.05" width="126.1" height="21.8" fill="#e6e6fa" fill-opacity="0.62" stroke="#858a85" stroke-opacity="0.5" stroke-width="1.3"/><text transform="translate(1235.19 853.90) scale(0.9550 1)" font-size="18.64" fill="#1e1e1e">01</text></g><clipPath id="c37"><rect x="1368.16" y="832.00" width="139.12" height="126.80"/></clipPath><rect x="1366.11" y="830.80" width="141.17" height="128.00" fill="#050505"/><rect x="1367.16" y="832.00" width="140.12" height="126.80" fill="#a9c5df"/><rect x="1367.16" y="832.00" width="140.12" height="1.10" fill="#ffffff" fill-opacity="0.38"/><rect x="1367.16" y="832.00" width="1.00" height="126.80" fill="#ffffff" fill-opacity="0.45"/><rect x="1368.16" y="832.00" width="1.00" height="126.80" fill="#ffffff" fill-opacity="0.18"/><rect x="1503.88" y="832.00" width="2.00" height="126.80" fill="#ffffff" fill-opacity="0.10"/><rect x="1505.88" y="832.00" width="1.40" height="126.80" fill="#000000" fill-opacity="0.25"/><rect x="1367.16" y="957.50" width="140.12" height="1.30" fill="#000000" fill-opacity="0.16"/><g clip-path="url(#c37)"><rect x="1411.86" y="867.10" width="7.90" height="32.30" fill="#808080" stroke="#000" stroke-width="2"/><rect x="1366.86" y="867.10" width="7.90" height="32.30" fill="#90ee90" stroke="#000" stroke-width="2"/><rect x="1429.42" y="867.10" width="7.90" height="32.30" fill="#90ee90" stroke="#000" stroke-width="2"/><rect x="1420.64" y="906.20" width="7.90" height="32.30" fill="#808080" stroke="#000" stroke-width="2"/><rect x="1366.86" y="906.20" width="7.90" height="32.30" fill="#90ee90" stroke="#000" stroke-width="2"/><rect x="1429.42" y="906.20" width="7.90" height="32.30" fill="#90ee90" stroke="#000" stroke-width="2"/><rect x="1373.06" y="835.05" width="126.1" height="21.8" fill="#e6e6fa" fill-opacity="0.62" stroke="#858a85" stroke-opacity="0.5" stroke-width="1.3"/><text transform="translate(1376.36 853.90) scale(0.9550 1)" font-size="18.64" fill="#1e1e1e">03</text></g><clipPath id="c38"><rect x="1509.33" y="832.00" width="139.12" height="126.80"/></clipPath><rect x="1507.28" y="830.80" width="141.17" height="128.00" fill="#050505"/><rect x="1508.33" y="832.00" width="140.12" height="126.80" fill="#8fb9c4"/><rect x="1508.33" y="832.00" width="140.12" height="1.10" fill="#ffffff" fill-opacity="0.38"/><rect x="1508.33" y="832.00" width="1.00" height="126.80" fill="#ffffff" fill-opacity="0.45"/><rect x="1509.33" y="832.00" width="1.00" height="126.80" fill="#ffffff" fill-opacity="0.18"/><rect x="1645.05" y="832.00" width="2.00" height="126.80" fill="#ffffff" fill-opacity="0.10"/><rect x="1647.05" y="832.00" width="1.40" height="126.80" fill="#000000" fill-opacity="0.25"/><rect x="1508.33" y="957.50" width="140.12" height="1.30" fill="#000000" fill-opacity="0.16"/><g clip-path="url(#c38)"><rect x="1508.03" y="867.10" width="7.90" height="32.30" fill="#90ee90" stroke="#000" stroke-width="2"/><rect x="1508.03" y="906.20" width="7.90" height="32.30" fill="#90ee90" stroke="#000" stroke-width="2"/><rect x="1508.03" y="944.30" width="7.90" height="32.30" fill="#90ee90" stroke="#000" stroke-width="2"/><rect x="1514.23" y="835.05" width="126.1" height="21.8" fill="#e6e6fa" fill-opacity="0.62" stroke="#858a85" stroke-opacity="0.5" stroke-width="1.3"/><text transform="translate(1517.53 853.90) scale(0.9550 1)" font-size="18.64" fill="#1e1e1e">00</text></g><clipPath id="c39"><rect x="1650.50" y="832.00" width="139.12" height="126.80"/></clipPath><rect x="1648.45" y="830.80" width="141.17" height="128.00" fill="#050505"/><rect x="1649.50" y="832.00" width="140.12" height="126.80" fill="#c8dcb0"/><rect x="1649.50" y="832.00" width="140.12" height="1.10" fill="#ffffff" fill-opacity="0.38"/><rect x="1649.50" y="832.00" width="1.00" height="126.80" fill="#ffffff" fill-opacity="0.45"/><rect x="1650.50" y="832.00" width="1.00" height="126.80" fill="#ffffff" fill-opacity="0.18"/><rect x="1786.22" y="832.00" width="2.00" height="126.80" fill="#ffffff" fill-opacity="0.10"/><rect x="1788.22" y="832.00" width="1.40" height="126.80" fill="#000000" fill-opacity="0.25"/><rect x="1649.50" y="957.50" width="140.12" height="1.30" fill="#000000" fill-opacity="0.16"/><g clip-path="url(#c39)"><rect x="1649.20" y="867.10" width="7.90" height="32.30" fill="#90ee90" stroke="#000" stroke-width="2"/><rect x="1655.40" y="835.05" width="126.1" height="21.8" fill="#e6e6fa" fill-opacity="0.62" stroke="#858a85" stroke-opacity="0.5" stroke-width="1.3"/><text transform="translate(1658.70 853.90) scale(0.9550 1)" font-size="18.64" fill="#1e1e1e">01</text></g><clipPath id="c40"><rect x="1791.67" y="832.00" width="139.12" height="126.80"/></clipPath><rect x="1789.62" y="830.80" width="141.17" height="128.00" fill="#050505"/><rect x="1790.67" y="832.00" width="140.12" height="126.80" fill="#a9c5df"/><rect x="1790.67" y="832.00" width="140.12" height="1.10" fill="#ffffff" fill-opacity="0.38"/><rect x="1790.67" y="832.00" width="1.00" height="126.80" fill="#ffffff" fill-opacity="0.45"/><rect x="1791.67" y="832.00" width="1.00" height="126.80" fill="#ffffff" fill-opacity="0.18"/><rect x="1927.39" y="832.00" width="2.00" height="126.80" fill="#ffffff" fill-opacity="0.10"/><rect x="1929.39" y="832.00" width="1.40" height="126.80" fill="#000000" fill-opacity="0.25"/><rect x="1790.67" y="957.50" width="140.12" height="1.30" fill="#000000" fill-opacity="0.16"/><g clip-path="url(#c40)"><rect x="1835.37" y="867.10" width="7.90" height="32.30" fill="#808080" stroke="#000" stroke-width="2"/><rect x="1790.37" y="867.10" width="7.90" height="32.30" fill="#90ee90" stroke="#000" stroke-width="2"/><rect x="1852.93" y="867.10" width="7.90" height="32.30" fill="#90ee90" stroke="#000" stroke-width="2"/><rect x="1844.15" y="906.20" width="7.90" height="32.30" fill="#808080" stroke="#000" stroke-width="2"/><rect x="1790.37" y="906.20" width="7.90" height="32.30" fill="#90ee90" stroke="#000" stroke-width="2"/><rect x="1852.93" y="906.20" width="7.90" height="32.30" fill="#90ee90" stroke="#000" stroke-width="2"/><rect x="1796.57" y="835.05" width="126.1" height="21.8" fill="#e6e6fa" fill-opacity="0.62" stroke="#858a85" stroke-opacity="0.5" stroke-width="1.3"/><text transform="translate(1799.87 853.90) scale(0.9550 1)" font-size="18.64" fill="#1e1e1e">03</text></g><clipPath id="c41"><rect x="238.80" y="960.00" width="139.12" height="126.80"/></clipPath><rect x="236.75" y="958.80" width="141.17" height="128.00" fill="#050505"/><rect x="237.80" y="960.00" width="140.12" height="126.80" fill="#8fb9c4"/><rect x="237.80" y="960.00" width="140.12" height="1.10" fill="#ffffff" fill-opacity="0.38"/><rect x="237.80" y="960.00" width="1.00" height="126.80" fill="#ffffff" fill-opacity="0.45"/><rect x="238.80" y="960.00" width="1.00" height="126.80" fill="#ffffff" fill-opacity="0.18"/><rect x="374.52" y="960.00" width="2.00" height="126.80" fill="#ffffff" fill-opacity="0.10"/><rect x="376.52" y="960.00" width="1.40" height="126.80" fill="#000000" fill-opacity="0.25"/><rect x="237.80" y="1085.50" width="140.12" height="1.30" fill="#000000" fill-opacity="0.16"/><g clip-path="url(#c41)"><rect x="272.89" y="960.00" width="1.50" height="126.80" fill="#000000" fill-opacity="0.2"/><rect x="308.18" y="960.00" width="1.50" height="126.80" fill="#000000" fill-opacity="0.2"/><rect x="343.47" y="960.00" width="1.50" height="126.80" fill="#000000" fill-opacity="0.2"/><path d="M237.8 971.8 H371.9" stroke="#7e8a8a" stroke-width="1.2" stroke-dasharray="5 4.2" fill="none"/><path d="M237.8 1074.4 H371.9" stroke="#7e8a8a" stroke-width="1.2" stroke-dasharray="5 4.2" fill="none"/><path d="M238.5 1036.0 C242.0 1018.0 244.0 1010.0 246.0 1004.9 C262.0 978.0 286.0 971.0 303.0 971.4 C326.0 972.0 345.0 986.0 357.0 1008.9" fill="none" stroke="#3f5a62" stroke-opacity="0.8" stroke-width="2.8"/><path d="M357.0 1008.9 C363.0 1020.0 367.0 1036.0 370.1 1049.0" fill="none" stroke="#3f5a62" stroke-opacity="0.8" stroke-width="2.8"/><path d="M357.0 1008.9 L370.1 1049.0" fill="none" stroke="#3f5a62" stroke-opacity="0.8" stroke-width="2.8"/><path d="M246.0 1004.9 C252.0 988.0 259.0 972.0 266.0 971.8 C272.0 972.0 275.0 984.0 278.0 994.1 C281.0 1006.0 283.0 1020.0 286.0 1033.9 C290.0 1052.0 295.0 1061.5 300.9 1061.2 C307.0 1061.0 311.0 1052.0 314.9 1045.0 C320.0 1034.0 324.0 1028.0 327.9 1020.9" fill="none" stroke="#3f5a62" stroke-opacity="0.8" stroke-width="2.8"/><path d="M327.9 1020.9 C333.0 1012.0 338.0 1010.0 343.0 1011.0 C349.0 1012.0 353.0 1010.0 357.0 1008.9" fill="none" stroke="#3f5a62" stroke-opacity="0.8" stroke-width="2.8"/><rect x="243.70" y="963.05" width="126.1" height="21.8" fill="#e6e6fa" fill-opacity="0.45" stroke="#858a85" stroke-opacity="0.5" stroke-width="1.3"/><text transform="translate(247.00 981.90) scale(0.9550 1)" font-size="18.64" fill="#1e1e1e">00</text><rect x="239.2" y="1034.3" width="13" height="13" fill="#ffa500" stroke="#111" stroke-width="1.8"/><rect x="271.4" y="987.6" width="13" height="13" fill="#ffa500" stroke="#111" stroke-width="1.8"/><rect x="279.5" y="1027.4" width="13" height="13" fill="#ffa500" stroke="#111" stroke-width="1.8"/><rect x="308.4" y="1038.5" width="13" height="13" fill="#ffa500" stroke="#111" stroke-width="1.8"/><rect x="321.4" y="1014.4" width="13" height="13" fill="#ffa500" stroke="#111" stroke-width="1.8"/><rect x="239.2" y="998.4" width="13" height="13" fill="#add8e6" stroke="#111" stroke-width="1.8"/><rect x="350.5" y="1002.4" width="13" height="13" fill="#add8e6" stroke="#111" stroke-width="1.8"/><rect x="363.6" y="1042.5" width="13" height="13" fill="#add8e6" stroke="#111" stroke-width="1.8"/></g><clipPath id="c42"><rect x="379.97" y="960.00" width="139.12" height="126.80"/></clipPath><rect x="377.92" y="958.80" width="141.17" height="128.00" fill="#050505"/><rect x="378.97" y="960.00" width="140.12" height="126.80" fill="#c8dcb0"/><rect x="378.97" y="960.00" width="140.12" height="1.10" fill="#ffffff" fill-opacity="0.38"/><rect x="378.97" y="960.00" width="1.00" height="126.80" fill="#ffffff" fill-opacity="0.45"/><rect x="379.97" y="960.00" width="1.00" height="126.80" fill="#ffffff" fill-opacity="0.18"/><rect x="515.69" y="960.00" width="2.00" height="126.80" fill="#ffffff" fill-opacity="0.10"/><rect x="517.69" y="960.00" width="1.40" height="126.80" fill="#000000" fill-opacity="0.25"/><rect x="378.97" y="1085.50" width="140.12" height="1.30" fill="#000000" fill-opacity="0.16"/><g clip-path="url(#c42)"><rect x="414.06" y="960.00" width="1.50" height="126.80" fill="#000000" fill-opacity="0.2"/><rect x="449.35" y="960.00" width="1.50" height="126.80" fill="#000000" fill-opacity="0.2"/><rect x="484.64" y="960.00" width="1.50" height="126.80" fill="#000000" fill-opacity="0.2"/><path d="M379.0 971.8 H513.1" stroke="#7e8a8a" stroke-width="1.2" stroke-dasharray="5 4.2" fill="none"/><path d="M379.0 1074.4 H513.1" stroke="#7e8a8a" stroke-width="1.2" stroke-dasharray="5 4.2" fill="none"/><rect x="384.87" y="963.05" width="126.1" height="21.8" fill="#e6e6fa" fill-opacity="0.45" stroke="#858a85" stroke-opacity="0.5" stroke-width="1.3"/><text transform="translate(388.17 981.90) scale(0.9550 1)" font-size="18.64" fill="#1e1e1e">01</text></g><clipPath id="c43"><rect x="662.31" y="960.00" width="139.12" height="126.80"/></clipPath><rect x="660.26" y="958.80" width="141.17" height="128.00" fill="#050505"/><rect x="661.31" y="960.00" width="140.12" height="126.80" fill="#8fb9c4"/><rect x="661.31" y="960.00" width="140.12" height="1.10" fill="#ffffff" fill-opacity="0.38"/><rect x="661.31" y="960.00" width="1.00" height="126.80" fill="#ffffff" fill-opacity="0.45"/><rect x="662.31" y="960.00" width="1.00" height="126.80" fill="#ffffff" fill-opacity="0.18"/><rect x="798.03" y="960.00" width="2.00" height="126.80" fill="#ffffff" fill-opacity="0.10"/><rect x="800.03" y="960.00" width="1.40" height="126.80" fill="#000000" fill-opacity="0.25"/><rect x="661.31" y="1085.50" width="140.12" height="1.30" fill="#000000" fill-opacity="0.16"/><g clip-path="url(#c43)"><rect x="696.40" y="960.00" width="1.50" height="126.80" fill="#000000" fill-opacity="0.2"/><rect x="731.69" y="960.00" width="1.50" height="126.80" fill="#000000" fill-opacity="0.2"/><rect x="766.98" y="960.00" width="1.50" height="126.80" fill="#000000" fill-opacity="0.2"/><path d="M661.3 971.8 H795.4" stroke="#7e8a8a" stroke-width="1.2" stroke-dasharray="5 4.2" fill="none"/><path d="M661.3 1074.4 H795.4" stroke="#7e8a8a" stroke-width="1.2" stroke-dasharray="5 4.2" fill="none"/><path d="M662.0 1036.0 C665.5 1018.0 667.5 1010.0 669.5 1004.9 C685.5 978.0 709.5 971.0 726.5 971.4 C749.5 972.0 768.5 986.0 780.5 1008.9" fill="none" stroke="#3f5a62" stroke-opacity="0.8" stroke-width="2.8"/><path d="M780.5 1008.9 C786.5 1020.0 790.5 1036.0 793.6 1049.0" fill="none" stroke="#3f5a62" stroke-opacity="0.8" stroke-width="2.8"/><path d="M780.5 1008.9 L793.6 1049.0" fill="none" stroke="#3f5a62" stroke-opacity="0.8" stroke-width="2.8"/><path d="M669.5 1004.9 C675.5 988.0 682.5 972.0 689.5 971.8 C695.5 972.0 698.5 984.0 701.5 994.1 C704.5 1006.0 706.5 1020.0 709.5 1033.9 C713.5 1052.0 718.5 1061.5 724.4 1061.2 C730.5 1061.0 734.5 1052.0 738.4 1045.0 C743.5 1034.0 747.5 1028.0 751.4 1020.9" fill="none" stroke="#3f5a62" stroke-opacity="0.8" stroke-width="2.8"/><path d="M751.4 1020.9 C756.5 1012.0 761.5 1010.0 766.5 1011.0 C772.5 1012.0 776.5 1010.0 780.5 1008.9" fill="none" stroke="#3f5a62" stroke-opacity="0.8" stroke-width="2.8"/><rect x="667.21" y="963.05" width="126.1" height="21.8" fill="#e6e6fa" fill-opacity="0.45" stroke="#858a85" stroke-opacity="0.5" stroke-width="1.3"/><text transform="translate(670.51 981.90) scale(0.9550 1)" font-size="18.64" fill="#1e1e1e">00</text><rect x="662.7" y="1034.3" width="13" height="13" fill="#ffa500" stroke="#111" stroke-width="1.8"/><rect x="694.9" y="987.6" width="13" height="13" fill="#ffa500" stroke="#111" stroke-width="1.8"/><rect x="703.0" y="1027.4" width="13" height="13" fill="#ffa500" stroke="#111" stroke-width="1.8"/><rect x="731.9" y="1038.5" width="13" height="13" fill="#ffa500" stroke="#111" stroke-width="1.8"/><rect x="744.9" y="1014.4" width="13" height="13" fill="#ffa500" stroke="#111" stroke-width="1.8"/><rect x="662.7" y="998.4" width="13" height="13" fill="#add8e6" stroke="#111" stroke-width="1.8"/><rect x="774.0" y="1002.4" width="13" height="13" fill="#add8e6" stroke="#111" stroke-width="1.8"/><rect x="787.1" y="1042.5" width="13" height="13" fill="#add8e6" stroke="#111" stroke-width="1.8"/></g><clipPath id="c44"><rect x="803.48" y="960.00" width="139.12" height="126.80"/></clipPath><rect x="801.43" y="958.80" width="141.17" height="128.00" fill="#050505"/><rect x="802.48" y="960.00" width="140.12" height="126.80" fill="#c8dcb0"/><rect x="802.48" y="960.00" width="140.12" height="1.10" fill="#ffffff" fill-opacity="0.38"/><rect x="802.48" y="960.00" width="1.00" height="126.80" fill="#ffffff" fill-opacity="0.45"/><rect x="803.48" y="960.00" width="1.00" height="126.80" fill="#ffffff" fill-opacity="0.18"/><rect x="939.20" y="960.00" width="2.00" height="126.80" fill="#ffffff" fill-opacity="0.10"/><rect x="941.20" y="960.00" width="1.40" height="126.80" fill="#000000" fill-opacity="0.25"/><rect x="802.48" y="1085.50" width="140.12" height="1.30" fill="#000000" fill-opacity="0.16"/><g clip-path="url(#c44)"><rect x="837.57" y="960.00" width="1.50" height="126.80" fill="#000000" fill-opacity="0.2"/><rect x="872.86" y="960.00" width="1.50" height="126.80" fill="#000000" fill-opacity="0.2"/><rect x="908.15" y="960.00" width="1.50" height="126.80" fill="#000000" fill-opacity="0.2"/><path d="M802.5 971.8 H936.6" stroke="#7e8a8a" stroke-width="1.2" stroke-dasharray="5 4.2" fill="none"/><path d="M802.5 1074.4 H936.6" stroke="#7e8a8a" stroke-width="1.2" stroke-dasharray="5 4.2" fill="none"/><rect x="808.38" y="963.05" width="126.1" height="21.8" fill="#e6e6fa" fill-opacity="0.45" stroke="#858a85" stroke-opacity="0.5" stroke-width="1.3"/><text transform="translate(811.68 981.90) scale(0.9550 1)" font-size="18.64" fill="#1e1e1e">01</text></g><clipPath id="c45"><rect x="1085.82" y="960.00" width="139.12" height="126.80"/></clipPath><rect x="1083.77" y="958.80" width="141.17" height="128.00" fill="#050505"/><rect x="1084.82" y="960.00" width="140.12" height="126.80" fill="#8fb9c4"/><rect x="1084.82" y="960.00" width="140.12" height="1.10" fill="#ffffff" fill-opacity="0.38"/><rect x="1084.82" y="960.00" width="1.00" height="126.80" fill="#ffffff" fill-opacity="0.45"/><rect x="1085.82" y="960.00" width="1.00" height="126.80" fill="#ffffff" fill-opacity="0.18"/><rect x="1221.54" y="960.00" width="2.00" height="126.80" fill="#ffffff" fill-opacity="0.10"/><rect x="1223.54" y="960.00" width="1.40" height="126.80" fill="#000000" fill-opacity="0.25"/><rect x="1084.82" y="1085.50" width="140.12" height="1.30" fill="#000000" fill-opacity="0.16"/><g clip-path="url(#c45)"><rect x="1119.91" y="960.00" width="1.50" height="126.80" fill="#000000" fill-opacity="0.2"/><rect x="1155.20" y="960.00" width="1.50" height="126.80" fill="#000000" fill-opacity="0.2"/><rect x="1190.49" y="960.00" width="1.50" height="126.80" fill="#000000" fill-opacity="0.2"/><path d="M1084.8 971.8 H1218.9" stroke="#7e8a8a" stroke-width="1.2" stroke-dasharray="5 4.2" fill="none"/><path d="M1084.8 1074.4 H1218.9" stroke="#7e8a8a" stroke-width="1.2" stroke-dasharray="5 4.2" fill="none"/><path d="M1085.5 1036.0 C1089.0 1018.0 1091.0 1010.0 1093.0 1004.9 C1109.0 978.0 1133.0 971.0 1150.0 971.4 C1173.0 972.0 1192.0 986.0 1204.0 1008.9" fill="none" stroke="#3f5a62" stroke-opacity="0.8" stroke-width="2.8"/><path d="M1204.0 1008.9 C1210.0 1020.0 1214.0 1036.0 1217.1 1049.0" fill="none" stroke="#3f5a62" stroke-opacity="0.8" stroke-width="2.8"/><path d="M1204.0 1008.9 L1217.1 1049.0" fill="none" stroke="#3f5a62" stroke-opacity="0.8" stroke-width="2.8"/><path d="M1093.0 1004.9 C1099.0 988.0 1106.0 972.0 1113.0 971.8 C1119.0 972.0 1122.0 984.0 1125.0 994.1 C1128.0 1006.0 1130.0 1020.0 1133.0 1033.9 C1137.0 1052.0 1142.0 1061.5 1147.9 1061.2 C1154.0 1061.0 1158.0 1052.0 1161.9 1045.0 C1167.0 1034.0 1171.0 1028.0 1174.9 1020.9" fill="none" stroke="#3f5a62" stroke-opacity="0.8" stroke-width="2.8"/><path d="M1174.9 1020.9 C1180.0 1012.0 1185.0 1010.0 1190.0 1011.0 C1196.0 1012.0 1200.0 1010.0 1204.0 1008.9" fill="none" stroke="#3f5a62" stroke-opacity="0.8" stroke-width="2.8"/><rect x="1090.72" y="963.05" width="126.1" height="21.8" fill="#e6e6fa" fill-opacity="0.45" stroke="#858a85" stroke-opacity="0.5" stroke-width="1.3"/><text transform="translate(1094.02 981.90) scale(0.9550 1)" font-size="18.64" fill="#1e1e1e">00</text><rect x="1086.2" y="1034.3" width="13" height="13" fill="#ffa500" stroke="#111" stroke-width="1.8"/><rect x="1118.4" y="987.6" width="13" height="13" fill="#ffa500" stroke="#111" stroke-width="1.8"/><rect x="1126.5" y="1027.4" width="13" height="13" fill="#ffa500" stroke="#111" stroke-width="1.8"/><rect x="1155.4" y="1038.5" width="13" height="13" fill="#ffa500" stroke="#111" stroke-width="1.8"/><rect x="1168.4" y="1014.4" width="13" height="13" fill="#ffa500" stroke="#111" stroke-width="1.8"/><rect x="1086.2" y="998.4" width="13" height="13" fill="#add8e6" stroke="#111" stroke-width="1.8"/><rect x="1197.5" y="1002.4" width="13" height="13" fill="#add8e6" stroke="#111" stroke-width="1.8"/><rect x="1210.6" y="1042.5" width="13" height="13" fill="#add8e6" stroke="#111" stroke-width="1.8"/></g><clipPath id="c46"><rect x="1226.99" y="960.00" width="139.12" height="126.80"/></clipPath><rect x="1224.94" y="958.80" width="141.17" height="128.00" fill="#050505"/><rect x="1225.99" y="960.00" width="140.12" height="126.80" fill="#c8dcb0"/><rect x="1225.99" y="960.00" width="140.12" height="1.10" fill="#ffffff" fill-opacity="0.38"/><rect x="1225.99" y="960.00" width="1.00" height="126.80" fill="#ffffff" fill-opacity="0.45"/><rect x="1226.99" y="960.00" width="1.00" height="126.80" fill="#ffffff" fill-opacity="0.18"/><rect x="1362.71" y="960.00" width="2.00" height="126.80" fill="#ffffff" fill-opacity="0.10"/><rect x="1364.71" y="960.00" width="1.40" height="126.80" fill="#000000" fill-opacity="0.25"/><rect x="1225.99" y="1085.50" width="140.12" height="1.30" fill="#000000" fill-opacity="0.16"/><g clip-path="url(#c46)"><rect x="1261.08" y="960.00" width="1.50" height="126.80" fill="#000000" fill-opacity="0.2"/><rect x="1296.37" y="960.00" width="1.50" height="126.80" fill="#000000" fill-opacity="0.2"/><rect x="1331.66" y="960.00" width="1.50" height="126.80" fill="#000000" fill-opacity="0.2"/><path d="M1226.0 971.8 H1360.1" stroke="#7e8a8a" stroke-width="1.2" stroke-dasharray="5 4.2" fill="none"/><path d="M1226.0 1074.4 H1360.1" stroke="#7e8a8a" stroke-width="1.2" stroke-dasharray="5 4.2" fill="none"/><rect x="1231.89" y="963.05" width="126.1" height="21.8" fill="#e6e6fa" fill-opacity="0.45" stroke="#858a85" stroke-opacity="0.5" stroke-width="1.3"/><text transform="translate(1235.19 981.90) scale(0.9550 1)" font-size="18.64" fill="#1e1e1e">01</text></g><clipPath id="c47"><rect x="1509.33" y="960.00" width="139.12" height="126.80"/></clipPath><rect x="1507.28" y="958.80" width="141.17" height="128.00" fill="#050505"/><rect x="1508.33" y="960.00" width="140.12" height="126.80" fill="#8fb9c4"/><rect x="1508.33" y="960.00" width="140.12" height="1.10" fill="#ffffff" fill-opacity="0.38"/><rect x="1508.33" y="960.00" width="1.00" height="126.80" fill="#ffffff" fill-opacity="0.45"/><rect x="1509.33" y="960.00" width="1.00" height="126.80" fill="#ffffff" fill-opacity="0.18"/><rect x="1645.05" y="960.00" width="2.00" height="126.80" fill="#ffffff" fill-opacity="0.10"/><rect x="1647.05" y="960.00" width="1.40" height="126.80" fill="#000000" fill-opacity="0.25"/><rect x="1508.33" y="1085.50" width="140.12" height="1.30" fill="#000000" fill-opacity="0.16"/><g clip-path="url(#c47)"><rect x="1543.42" y="960.00" width="1.50" height="126.80" fill="#000000" fill-opacity="0.2"/><rect x="1578.71" y="960.00" width="1.50" height="126.80" fill="#000000" fill-opacity="0.2"/><rect x="1614.00" y="960.00" width="1.50" height="126.80" fill="#000000" fill-opacity="0.2"/><path d="M1508.3 971.8 H1642.4" stroke="#7e8a8a" stroke-width="1.2" stroke-dasharray="5 4.2" fill="none"/><path d="M1508.3 1074.4 H1642.4" stroke="#7e8a8a" stroke-width="1.2" stroke-dasharray="5 4.2" fill="none"/><path d="M1509.0 1036.0 C1512.5 1018.0 1514.5 1010.0 1516.5 1004.9 C1532.5 978.0 1556.5 971.0 1573.5 971.4 C1596.5 972.0 1615.5 986.0 1627.5 1008.9" fill="none" stroke="#3f5a62" stroke-opacity="0.8" stroke-width="2.8"/><path d="M1627.5 1008.9 C1633.5 1020.0 1637.5 1036.0 1640.6 1049.0" fill="none" stroke="#3f5a62" stroke-opacity="0.8" stroke-width="2.8"/><path d="M1627.5 1008.9 L1640.6 1049.0" fill="none" stroke="#3f5a62" stroke-opacity="0.8" stroke-width="2.8"/><path d="M1516.5 1004.9 C1522.5 988.0 1529.5 972.0 1536.5 971.8 C1542.5 972.0 1545.5 984.0 1548.5 994.1 C1551.5 1006.0 1553.5 1020.0 1556.5 1033.9 C1560.5 1052.0 1565.5 1061.5 1571.4 1061.2 C1577.5 1061.0 1581.5 1052.0 1585.4 1045.0 C1590.5 1034.0 1594.5 1028.0 1598.4 1020.9" fill="none" stroke="#3f5a62" stroke-opacity="0.8" stroke-width="2.8"/><path d="M1598.4 1020.9 C1603.5 1012.0 1608.5 1010.0 1613.5 1011.0 C1619.5 1012.0 1623.5 1010.0 1627.5 1008.9" fill="none" stroke="#3f5a62" stroke-opacity="0.8" stroke-width="2.8"/><rect x="1514.23" y="963.05" width="126.1" height="21.8" fill="#e6e6fa" fill-opacity="0.45" stroke="#858a85" stroke-opacity="0.5" stroke-width="1.3"/><text transform="translate(1517.53 981.90) scale(0.9550 1)" font-size="18.64" fill="#1e1e1e">00</text><rect x="1509.7" y="1034.3" width="13" height="13" fill="#ffa500" stroke="#111" stroke-width="1.8"/><rect x="1541.9" y="987.6" width="13" height="13" fill="#ffa500" stroke="#111" stroke-width="1.8"/><rect x="1550.0" y="1027.4" width="13" height="13" fill="#ffa500" stroke="#111" stroke-width="1.8"/><rect x="1578.9" y="1038.5" width="13" height="13" fill="#ffa500" stroke="#111" stroke-width="1.8"/><rect x="1591.9" y="1014.4" width="13" height="13" fill="#ffa500" stroke="#111" stroke-width="1.8"/><rect x="1509.7" y="998.4" width="13" height="13" fill="#add8e6" stroke="#111" stroke-width="1.8"/><rect x="1621.0" y="1002.4" width="13" height="13" fill="#add8e6" stroke="#111" stroke-width="1.8"/><rect x="1634.1" y="1042.5" width="13" height="13" fill="#add8e6" stroke="#111" stroke-width="1.8"/></g><clipPath id="c48"><rect x="1650.50" y="960.00" width="139.12" height="126.80"/></clipPath><rect x="1648.45" y="958.80" width="141.17" height="128.00" fill="#050505"/><rect x="1649.50" y="960.00" width="140.12" height="126.80" fill="#c8dcb0"/><rect x="1649.50" y="960.00" width="140.12" height="1.10" fill="#ffffff" fill-opacity="0.38"/><rect x="1649.50" y="960.00" width="1.00" height="126.80" fill="#ffffff" fill-opacity="0.45"/><rect x="1650.50" y="960.00" width="1.00" height="126.80" fill="#ffffff" fill-opacity="0.18"/><rect x="1786.22" y="960.00" width="2.00" height="126.80" fill="#ffffff" fill-opacity="0.10"/><rect x="1788.22" y="960.00" width="1.40" height="126.80" fill="#000000" fill-opacity="0.25"/><rect x="1649.50" y="1085.50" width="140.12" height="1.30" fill="#000000" fill-opacity="0.16"/><g clip-path="url(#c48)"><rect x="1684.59" y="960.00" width="1.50" height="126.80" fill="#000000" fill-opacity="0.2"/><rect x="1719.88" y="960.00" width="1.50" height="126.80" fill="#000000" fill-opacity="0.2"/><rect x="1755.17" y="960.00" width="1.50" height="126.80" fill="#000000" fill-opacity="0.2"/><path d="M1649.5 971.8 H1783.6" stroke="#7e8a8a" stroke-width="1.2" stroke-dasharray="5 4.2" fill="none"/><path d="M1649.5 1074.4 H1783.6" stroke="#7e8a8a" stroke-width="1.2" stroke-dasharray="5 4.2" fill="none"/><rect x="1655.40" y="963.05" width="126.1" height="21.8" fill="#e6e6fa" fill-opacity="0.45" stroke="#858a85" stroke-opacity="0.5" stroke-width="1.3"/><text transform="translate(1658.70 981.90) scale(0.9550 1)" font-size="18.64" fill="#1e1e1e">01</text></g><clipPath id="aud"><rect x="239.2" y="704.5" width="2044.4" height="126.0"/></clipPath><rect x="239.20" y="704.50" width="2044.40" height="126.00" fill="url(#audbg)"/><rect x="239.20" y="703.20" width="2044.40" height="2.40" fill="#b9b9b9"/><g clip-path="url(#aud)"><rect x="273.79" y="705.50" width="1.50" height="126.00" fill="#000000" fill-opacity="0.26"/><rect x="309.08" y="705.50" width="1.50" height="126.00" fill="#000000" fill-opacity="0.26"/><rect x="344.37" y="705.50" width="1.50" height="126.00" fill="#000000" fill-opacity="0.26"/><rect x="379.66" y="705.50" width="1.50" height="126.00" fill="#000000" fill-opacity="0.26"/><rect x="414.95" y="705.50" width="1.50" height="126.00" fill="#000000" fill-opacity="0.26"/><rect x="450.24" y="705.50" width="1.50" height="126.00" fill="#000000" fill-opacity="0.26"/><rect x="485.53" y="705.50" width="1.50" height="126.00" fill="#000000" fill-opacity="0.26"/><rect x="520.82" y="705.50" width="1.50" height="126.00" fill="#000000" fill-opacity="0.26"/><rect x="556.11" y="705.50" width="1.50" height="126.00" fill="#000000" fill-opacity="0.26"/><rect x="591.40" y="705.50" width="1.50" height="126.00" fill="#000000" fill-opacity="0.26"/><rect x="626.69" y="705.50" width="1.50" height="126.00" fill="#000000" fill-opacity="0.26"/><rect x="661.98" y="705.50" width="1.50" height="126.00" fill="#000000" fill-opacity="0.26"/><rect x="697.27" y="705.50" width="1.50" height="126.00" fill="#000000" fill-opacity="0.26"/><rect x="732.56" y="705.50" width="1.50" height="126.00" fill="#000000" fill-opacity="0.26"/><rect x="767.85" y="705.50" width="1.50" height="126.00" fill="#000000" fill-opacity="0.26"/><rect x="803.14" y="705.50" width="1.50" height="126.00" fill="#000000" fill-opacity="0.26"/><rect x="838.43" y="705.50" width="1.50" height="126.00" fill="#000000" fill-opacity="0.26"/><rect x="873.72" y="705.50" width="1.50" height="126.00" fill="#000000" fill-opacity="0.26"/><rect x="909.01" y="705.50" width="1.50" height="126.00" fill="#000000" fill-opacity="0.26"/><rect x="944.30" y="705.50" width="1.50" height="126.00" fill="#000000" fill-opacity="0.26"/><rect x="979.59" y="705.50" width="1.50" height="126.00" fill="#000000" fill-opacity="0.26"/><rect x="1014.88" y="705.50" width="1.50" height="126.00" fill="#000000" fill-opacity="0.26"/><rect x="1050.17" y="705.50" width="1.50" height="126.00" fill="#000000" fill-opacity="0.26"/><rect x="1085.46" y="705.50" width="1.50" height="126.00" fill="#000000" fill-opacity="0.26"/><rect x="1120.75" y="705.50" width="1.50" height="126.00" fill="#000000" fill-opacity="0.26"/><rect x="1156.04" y="705.50" width="1.50" height="126.00" fill="#000000" fill-opacity="0.26"/><rect x="1191.33" y="705.50" width="1.50" height="126.00" fill="#000000" fill-opacity="0.26"/><rect x="1226.62" y="705.50" width="1.50" height="126.00" fill="#000000" fill-opacity="0.26"/><rect x="1261.91" y="705.50" width="1.50" height="126.00" fill="#000000" fill-opacity="0.26"/><rect x="1297.20" y="705.50" width="1.50" height="126.00" fill="#000000" fill-opacity="0.26"/><rect x="1332.49" y="705.50" width="1.50" height="126.00" fill="#000000" fill-opacity="0.26"/><rect x="1367.78" y="705.50" width="1.50" height="126.00" fill="#000000" fill-opacity="0.26"/><rect x="1403.07" y="705.50" width="1.50" height="126.00" fill="#000000" fill-opacity="0.26"/><rect x="1438.36" y="705.50" width="1.50" height="126.00" fill="#000000" fill-opacity="0.26"/><rect x="1473.65" y="705.50" width="1.50" height="126.00" fill="#000000" fill-opacity="0.26"/><rect x="1508.94" y="705.50" width="1.50" height="126.00" fill="#000000" fill-opacity="0.26"/><rect x="1544.23" y="705.50" width="1.50" height="126.00" fill="#000000" fill-opacity="0.26"/><rect x="1579.52" y="705.50" width="1.50" height="126.00" fill="#000000" fill-opacity="0.26"/><rect x="1614.81" y="705.50" width="1.50" height="126.00" fill="#000000" fill-opacity="0.26"/><rect x="1650.10" y="705.50" width="1.50" height="126.00" fill="#000000" fill-opacity="0.26"/><rect x="1685.39" y="705.50" width="1.50" height="126.00" fill="#000000" fill-opacity="0.26"/><rect x="1720.68" y="705.50" width="1.50" height="126.00" fill="#000000" fill-opacity="0.26"/><rect x="1755.97" y="705.50" width="1.50" height="126.00" fill="#000000" fill-opacity="0.26"/><rect x="1791.26" y="705.50" width="1.50" height="126.00" fill="#000000" fill-opacity="0.26"/><rect x="1826.55" y="705.50" width="1.50" height="126.00" fill="#000000" fill-opacity="0.26"/><rect x="1861.84" y="705.50" width="1.50" height="126.00" fill="#000000" fill-opacity="0.26"/><rect x="1897.13" y="705.50" width="1.50" height="126.00" fill="#000000" fill-opacity="0.26"/><rect x="1932.42" y="705.50" width="1.50" height="126.00" fill="#000000" fill-opacity="0.26"/><rect x="1967.71" y="705.50" width="1.50" height="126.00" fill="#000000" fill-opacity="0.26"/><rect x="2003.00" y="705.50" width="1.50" height="126.00" fill="#000000" fill-opacity="0.26"/><rect x="2038.29" y="705.50" width="1.50" height="126.00" fill="#000000" fill-opacity="0.26"/><rect x="2073.58" y="705.50" width="1.50" height="126.00" fill="#000000" fill-opacity="0.26"/><rect x="2108.87" y="705.50" width="1.50" height="126.00" fill="#000000" fill-opacity="0.26"/><rect x="2144.16" y="705.50" width="1.50" height="126.00" fill="#000000" fill-opacity="0.26"/><rect x="2179.45" y="705.50" width="1.50" height="126.00" fill="#000000" fill-opacity="0.26"/><rect x="2214.74" y="705.50" width="1.50" height="126.00" fill="#000000" fill-opacity="0.26"/><rect x="2250.03" y="705.50" width="1.50" height="126.00" fill="#000000" fill-opacity="0.26"/><rect x="239.20" y="734.60" width="2044.40" height="1.00" fill="#5a5a5a"/><rect x="239.20" y="799.20" width="2044.40" height="1.00" fill="#5a5a5a"/><path d="M241.2 716.2 H2283.6" stroke="#c6bf48" stroke-width="1.2" stroke-dasharray="5 6" fill="none"/><path d="M241.2 819.1 H2283.6" stroke="#c6bf48" stroke-width="1.2" stroke-dasharray="5 6" fill="none"/><path d="M239.2 728.0 L240.8 727.4 L242.4 729.8 L244.0 729.5 L245.6 730.2 L247.2 724.5 L248.8 722.8 L250.4 728.9 L252.0 728.4 L253.6 729.1 L255.2 727.9 L256.8 728.6 L258.4 728.2 L260.0 728.2 L261.6 730.5 L263.2 723.7 L264.8 728.9 L266.4 725.5 L268.0 729.8 L269.6 730.7 L271.2 729.1 L272.8 727.6 L274.4 727.4 L276.0 725.9 L277.6 724.4 L279.2 726.9 L280.8 728.6 L282.4 724.7 L284.0 730.6 L285.6 727.5 L287.2 726.0 L288.8 730.7 L290.4 724.1 L292.0 729.7 L293.6 725.9 L295.2 727.0 L296.8 722.5 L298.4 726.0 L300.0 724.7 L301.6 727.7 L303.2 730.8 L304.8 731.0 L306.4 730.3 L308.0 729.7 L309.6 731.2 L311.2 730.6 L312.8 730.1 L314.4 725.1 L316.0 730.5 L317.6 730.3 L319.2 731.9 L320.8 730.5 L322.4 728.0 L324.0 729.0 L325.6 730.9 L327.2 726.3 L328.8 731.2 L330.4 728.7 L332.0 732.6 L333.6 732.1 L335.2 731.7 L336.8 728.6 L338.4 723.7 L340.0 732.1 L341.6 730.9 L343.2 730.4 L344.8 732.2 L346.4 727.4 L348.0 730.6 L349.6 729.7 L351.2 730.1 L352.8 732.8 L354.4 728.1 L356.0 728.8 L357.6 731.2 L359.2 732.5 L360.8 730.5 L362.4 726.5 L364.0 732.5 L365.6 732.6 L367.2 731.0 L368.8 730.6 L370.4 729.9 L372.0 728.7 L373.6 729.2 L375.2 726.4 L376.8 727.0 L378.4 730.8 L380.0 732.5 L381.6 732.9 L383.2 728.5 L384.8 729.9 L386.4 728.7 L388.0 728.5 L389.6 727.3 L391.2 729.8 L392.8 725.7 L394.4 728.7 L396.0 731.0 L397.6 729.5 L399.2 729.6 L400.8 723.6 L402.4 726.9 L404.0 723.6 L405.6 726.1 L407.2 728.8 L408.8 725.5 L410.4 726.6 L412.0 728.4 L413.6 727.6 L415.2 729.3 L416.8 729.2 L418.4 723.8 L420.0 724.4 L421.6 728.6 L423.2 727.4 L424.8 724.0 L426.4 723.0 L428.0 726.2 L429.6 721.3 L431.2 725.8 L432.8 727.2 L434.4 727.8 L436.0 728.6 L437.6 727.6 L439.2 728.9 L440.8 727.2 L442.4 728.0 L444.0 726.1 L445.6 726.9 L447.2 727.1 L448.8 729.1 L450.4 729.7 L452.0 725.2 L453.6 729.6 L455.2 727.3 L456.8 730.7 L458.4 729.0 L460.0 722.3 L461.6 731.2 L463.2 731.5 L464.8 727.9 L466.4 731.6 L468.0 729.3 L469.6 729.4 L471.2 728.7 L472.8 729.7 L474.4 730.6 L476.0 729.9 L477.6 726.8 L479.2 729.2 L480.8 730.4 L482.4 729.8 L484.0 726.8 L485.6 732.0 L487.2 730.3 L488.8 730.1 L490.4 728.9 L492.0 726.5 L493.6 728.5 L495.2 727.7 L496.8 730.1 L498.4 731.1 L500.0 729.6 L501.6 730.4 L503.2 731.9 L504.8 732.3 L506.4 731.8 L508.0 731.6 L509.6 731.2 L511.2 728.8 L512.8 730.5 L514.4 732.1 L516.0 728.9 L517.6 732.2 L519.2 731.7 L520.8 724.4 L522.4 730.6 L524.0 731.9 L525.6 732.1 L527.2 728.8 L528.8 730.4 L530.4 732.2 L532.0 731.7 L533.6 731.2 L535.2 730.3 L536.8 730.3 L538.4 732.5 L540.0 731.0 L541.6 732.7 L543.2 731.5 L544.8 728.5 L546.4 726.3 L548.0 732.6 L549.6 727.7 L551.2 732.6 L552.8 730.5 L554.4 731.2 L556.0 732.7 L557.6 729.8 L559.2 731.4 L560.8 730.6 L562.4 729.6 L564.0 732.2 L565.6 730.7 L567.2 726.5 L568.8 730.0 L570.4 730.8 L572.0 731.2 L573.6 728.0 L575.2 732.4 L576.8 730.0 L578.4 729.4 L580.0 727.9 L581.6 728.9 L583.2 727.1 L584.8 727.8 L586.4 731.5 L588.0 729.9 L589.6 729.9 L591.2 732.2 L592.8 732.5 L594.4 732.7 L596.0 729.9 L597.6 729.4 L599.2 731.3 L600.8 730.5 L602.4 728.8 L604.0 731.1 L605.6 728.4 L607.2 729.5 L608.8 731.2 L610.4 731.4 L612.0 731.3 L613.6 731.5 L615.2 731.3 L616.8 731.5 L618.4 732.4 L620.0 729.8 L621.6 732.5 L623.2 731.6 L624.8 731.3 L626.4 732.1 L628.0 728.0 L629.6 726.3 L631.2 730.4 L632.8 729.0 L634.4 731.4 L636.0 730.7 L637.6 731.7 L639.2 732.8 L640.8 732.3 L642.4 730.4 L644.0 732.6 L645.6 730.7 L647.2 733.7 L648.8 727.0 L650.4 733.1 L652.0 732.1 L653.6 733.0 L655.2 733.2 L656.8 729.8 L658.4 731.5 L660.0 726.3 L661.6 733.4 L663.2 731.6 L664.8 733.1 L666.4 731.5 L668.0 730.0 L669.6 731.5 L671.2 732.3 L672.8 729.4 L674.4 731.1 L676.0 730.2 L677.6 731.3 L679.2 730.0 L680.8 730.9 L682.4 731.8 L684.0 729.8 L685.6 733.0 L687.2 730.0 L688.8 725.6 L690.4 732.4 L692.0 731.8 L693.6 730.8 L695.2 731.0 L696.8 730.1 L698.4 730.6 L700.0 731.2 L701.6 732.1 L703.2 731.8 L704.8 731.9 L706.4 729.5 L708.0 730.2 L709.6 732.0 L711.2 731.8 L712.8 730.3 L714.4 732.0 L716.0 731.7 L717.6 730.1 L719.2 730.2 L720.8 726.3 L722.4 731.2 L724.0 726.4 L725.6 731.5 L727.2 731.4 L728.8 728.8 L730.4 729.6 L732.0 731.3 L733.6 726.3 L735.2 727.4 L736.8 732.5 L738.4 730.0 L740.0 730.3 L741.6 729.2 L743.2 732.3 L744.8 729.7 L746.4 732.0 L748.0 731.7 L749.6 731.7 L751.2 728.1 L752.8 731.6 L754.4 728.9 L756.0 729.4 L757.6 731.0 L759.2 728.9 L760.8 732.4 L762.4 731.3 L764.0 731.8 L765.6 730.4 L767.2 729.1 L768.8 732.2 L770.4 729.7 L772.0 731.3 L773.6 728.6 L775.2 730.5 L776.8 727.1 L778.4 731.3 L780.0 729.9 L781.6 730.8 L783.2 731.0 L784.8 732.7 L786.4 732.9 L788.0 729.5 L789.6 731.8 L791.2 730.7 L792.8 729.7 L794.4 728.3 L796.0 729.1 L797.6 732.4 L799.2 731.1 L800.8 731.9 L802.4 728.7 L804.0 728.2 L805.6 732.1 L807.2 731.5 L808.8 730.2 L810.4 732.2 L812.0 733.3 L813.6 731.3 L815.2 730.1 L816.8 730.9 L818.4 731.1 L820.0 729.8 L821.6 732.9 L823.2 729.4 L824.8 731.1 L826.4 729.4 L828.0 732.6 L829.6 731.8 L831.2 733.1 L832.8 732.0 L834.4 730.8 L836.0 732.9 L837.6 733.2 L839.2 732.9 L840.8 730.9 L842.4 733.3 L844.0 731.9 L845.6 731.0 L847.2 731.2 L848.8 730.8 L850.4 731.7 L852.0 732.0 L853.6 731.9 L855.2 733.5 L856.8 731.3 L858.4 733.3 L860.0 732.4 L861.6 729.1 L863.2 732.3 L864.8 732.0 L866.4 733.0 L868.0 733.6 L869.6 731.5 L871.2 732.7 L872.8 731.1 L874.4 730.7 L876.0 731.8 L877.6 729.2 L879.2 733.0 L880.8 733.3 L882.4 732.6 L884.0 732.6 L885.6 730.2 L887.2 732.4 L888.8 733.3 L890.4 732.1 L892.0 729.0 L893.6 731.3 L895.2 733.5 L896.8 732.2 L898.4 730.1 L900.0 732.0 L901.6 733.6 L903.2 729.3 L904.8 731.2 L906.4 733.4 L908.0 732.7 L909.6 730.9 L911.2 732.5 L912.8 732.0 L914.4 729.4 L916.0 732.9 L917.6 732.8 L919.2 729.6 L920.8 730.3 L922.4 733.5 L924.0 732.8 L925.6 731.5 L927.2 729.4 L928.8 731.6 L930.4 733.6 L932.0 732.2 L933.6 732.3 L935.2 731.9 L936.8 731.0 L938.4 728.9 L940.0 728.5 L941.6 733.4 L943.2 732.8 L944.8 733.0 L946.4 732.6 L948.0 732.0 L949.6 731.7 L951.2 731.9 L952.8 733.8 L954.4 732.9 L956.0 732.7 L957.6 732.6 L959.2 733.2 L960.8 733.2 L962.4 733.9 L964.0 732.5 L965.6 733.0 L967.2 733.7 L968.8 733.5 L970.4 732.4 L972.0 733.5 L973.6 731.7 L975.2 732.2 L976.8 730.9 L978.4 733.3 L980.0 731.1 L981.6 732.9 L983.2 732.5 L984.8 733.6 L986.4 733.5 L988.0 733.4 L989.6 733.7 L991.2 733.7 L992.8 732.7 L994.4 733.0 L996.0 733.3 L997.6 733.8 L999.2 733.5 L1000.8 734.2 L1002.4 733.6 L1004.0 733.7 L1005.6 733.6 L1007.2 733.2 L1008.8 732.6 L1010.4 732.2 L1012.0 733.0 L1013.6 734.5 L1015.2 735.0 L1016.8 733.7 L1018.4 734.5 L1020.0 735.3 L1021.6 734.2 L1023.2 733.9 L1024.8 735.1 L1026.4 735.1 L1028.0 734.7 L1029.6 733.7 L1031.2 733.0 L1032.8 732.5 L1034.4 732.6 L1036.0 733.0 L1037.6 734.3 L1039.2 734.3 L1040.8 733.8 L1042.4 734.4 L1044.0 734.5 L1045.6 734.2 L1047.2 734.3 L1048.8 733.3 L1050.4 734.9 L1052.0 732.6 L1053.6 733.6 L1055.2 734.1 L1056.8 734.1 L1058.4 734.2 L1060.0 733.3 L1061.6 733.2 L1063.2 733.1 L1064.8 732.3 L1066.4 732.9 L1068.0 733.8 L1069.6 734.5 L1071.2 734.7 L1072.8 734.7 L1074.4 731.9 L1076.0 734.4 L1077.6 735.1 L1079.2 734.1 L1080.8 732.5 L1082.4 733.7 L1084.0 732.3 L1085.6 733.2 L1087.2 732.2 L1088.8 733.4 L1090.4 733.0 L1092.0 733.7 L1093.6 732.9 L1095.2 732.6 L1096.8 731.9 L1098.4 733.5 L1100.0 732.8 L1101.6 734.3 L1103.2 734.3 L1104.8 735.4 L1106.4 735.2 L1108.0 735.1 L1109.6 734.4 L1111.2 734.8 L1112.8 733.4 L1114.4 733.6 L1116.0 733.4 L1117.6 732.7 L1119.2 734.9 L1120.8 731.4 L1122.4 734.4 L1124.0 732.6 L1125.6 734.4 L1127.2 734.2 L1128.8 733.5 L1130.4 733.5 L1132.0 732.4 L1133.6 732.9 L1135.2 734.4 L1136.8 733.2 L1138.4 733.9 L1140.0 731.8 L1141.6 733.5 L1143.2 732.0 L1144.8 733.6 L1146.4 734.3 L1148.0 733.0 L1149.6 731.2 L1151.2 733.3 L1152.8 734.5 L1154.4 733.6 L1156.0 733.1 L1157.6 729.7 L1159.2 732.4 L1160.8 733.7 L1162.4 734.0 L1164.0 731.0 L1165.6 733.0 L1167.2 732.1 L1168.8 733.8 L1170.4 733.5 L1172.0 733.4 L1173.6 733.3 L1175.2 734.8 L1176.8 734.6 L1178.4 735.6 L1180.0 733.7 L1181.6 734.1 L1183.2 734.7 L1184.8 734.1 L1186.4 733.2 L1188.0 733.5 L1189.6 734.0 L1191.2 731.9 L1192.8 733.0 L1194.4 730.5 L1196.0 731.5 L1197.6 735.5 L1199.2 732.0 L1200.8 732.0 L1202.4 733.9 L1204.0 732.4 L1205.6 731.5 L1207.2 730.7 L1208.8 727.4 L1210.4 730.2 L1212.0 734.5 L1213.6 730.7 L1215.2 733.8 L1216.8 733.3 L1218.4 733.6 L1220.0 730.7 L1221.6 729.2 L1223.2 732.2 L1224.8 729.6 L1226.4 737.1 L1228.0 738.5 L1229.6 731.0 L1231.2 731.9 L1232.8 734.6 L1234.4 727.1 L1236.0 731.7 L1237.6 729.2 L1239.2 728.8 L1240.8 728.4 L1242.4 732.9 L1244.0 730.8 L1245.6 734.1 L1247.2 735.3 L1248.8 732.3 L1250.4 731.5 L1252.0 734.8 L1253.6 736.9 L1255.2 734.7 L1256.8 729.4 L1258.4 732.2 L1260.0 734.2 L1261.6 735.9 L1263.2 737.1 L1264.8 735.3 L1266.4 735.1 L1268.0 734.1 L1269.6 735.1 L1271.2 734.7 L1272.8 733.7 L1274.4 733.8 L1276.0 733.9 L1277.6 735.0 L1279.2 731.4 L1280.8 730.8 L1282.4 731.5 L1284.0 732.6 L1285.6 734.1 L1287.2 731.4 L1288.8 732.2 L1290.4 732.2 L1292.0 731.8 L1293.6 734.1 L1295.2 731.9 L1296.8 731.6 L1298.4 732.4 L1300.0 731.6 L1301.6 732.5 L1303.2 733.3 L1304.8 731.5 L1306.4 733.7 L1308.0 736.0 L1309.6 733.6 L1311.2 736.0 L1312.8 734.3 L1314.4 731.6 L1316.0 735.6 L1317.6 733.9 L1319.2 734.1 L1320.8 731.6 L1322.4 732.0 L1324.0 730.7 L1325.6 733.9 L1327.2 734.6 L1328.8 735.7 L1330.4 732.2 L1332.0 734.0 L1333.6 732.0 L1335.2 734.1 L1336.8 735.6 L1338.4 736.7 L1340.0 737.9 L1341.6 735.1 L1343.2 733.4 L1344.8 730.9 L1346.4 730.0 L1348.0 733.4 L1349.6 731.6 L1351.2 731.2 L1352.8 734.5 L1354.4 732.6 L1356.0 731.3 L1357.6 731.2 L1359.2 731.5 L1360.8 732.5 L1362.4 730.6 L1364.0 732.5 L1365.6 730.5 L1367.2 733.1 L1368.8 734.1 L1370.4 734.7 L1372.0 732.9 L1373.6 731.4 L1375.2 732.1 L1376.8 734.0 L1378.4 730.5 L1380.0 734.8 L1381.6 735.7 L1383.2 733.6 L1384.8 733.9 L1386.4 733.7 L1388.0 735.3 L1389.6 735.1 L1391.2 733.8 L1392.8 734.2 L1394.4 736.7 L1396.0 735.5 L1397.6 732.4 L1399.2 734.3 L1400.8 731.4 L1402.4 730.2 L1404.0 727.6 L1405.6 731.6 L1407.2 732.2 L1408.8 733.2 L1410.4 732.3 L1412.0 731.1 L1413.6 729.2 L1415.2 729.6 L1416.8 730.8 L1418.4 732.7 L1420.0 732.5 L1421.6 730.2 L1423.2 729.1 L1424.8 727.8 L1426.4 728.8 L1428.0 729.1 L1429.6 730.1 L1431.2 729.4 L1432.8 732.3 L1434.4 730.0 L1436.0 733.9 L1437.6 736.6 L1439.2 732.6 L1440.8 732.7 L1442.4 734.5 L1444.0 731.9 L1445.6 731.1 L1447.2 729.4 L1448.8 731.1 L1450.4 732.9 L1452.0 736.1 L1453.6 732.6 L1455.2 730.4 L1456.8 731.4 L1458.4 731.2 L1460.0 734.2 L1461.6 734.8 L1463.2 734.5 L1464.8 731.9 L1466.4 729.7 L1468.0 730.4 L1469.6 730.7 L1471.2 730.3 L1472.8 729.3 L1474.4 730.8 L1476.0 732.4 L1477.6 732.6 L1479.2 733.9 L1480.8 732.4 L1482.4 730.8 L1484.0 728.6 L1485.6 726.9 L1487.2 731.7 L1488.8 734.6 L1490.4 735.0 L1492.0 733.0 L1493.6 733.6 L1495.2 730.4 L1496.8 732.8 L1498.4 730.2 L1500.0 735.0 L1501.6 737.6 L1503.2 732.1 L1504.8 729.0 L1506.4 729.2 L1508.0 729.9 L1509.6 733.6 L1511.2 733.1 L1512.8 731.5 L1514.4 731.2 L1516.0 731.0 L1517.6 728.6 L1519.2 731.5 L1520.8 728.8 L1522.4 731.5 L1524.0 731.7 L1525.6 733.5 L1527.2 730.4 L1528.8 732.0 L1530.4 731.4 L1532.0 728.7 L1533.6 728.8 L1535.2 727.8 L1536.8 731.1 L1538.4 731.0 L1540.0 732.2 L1541.6 729.9 L1543.2 731.2 L1544.8 734.1 L1546.4 733.8 L1548.0 734.8 L1549.6 736.3 L1551.2 736.3 L1552.8 737.2 L1554.4 732.7 L1556.0 735.7 L1557.6 736.0 L1559.2 738.2 L1560.8 736.8 L1562.4 730.1 L1564.0 729.5 L1565.6 732.9 L1567.2 731.3 L1568.8 735.1 L1570.4 731.9 L1572.0 733.8 L1573.6 733.5 L1575.2 734.8 L1576.8 732.4 L1578.4 728.7 L1580.0 730.9 L1581.6 734.2 L1583.2 732.7 L1584.8 734.5 L1586.4 732.6 L1588.0 731.9 L1589.6 733.0 L1591.2 734.1 L1592.8 732.0 L1594.4 733.7 L1596.0 732.7 L1597.6 727.3 L1599.2 728.1 L1600.8 731.2 L1602.4 733.4 L1604.0 730.0 L1605.6 730.1 L1607.2 732.1 L1608.8 732.0 L1610.4 735.0 L1612.0 731.6 L1613.6 730.0 L1615.2 730.9 L1616.8 733.9 L1618.4 734.5 L1620.0 734.5 L1621.6 737.3 L1623.2 735.2 L1624.8 733.0 L1626.4 734.8 L1628.0 730.1 L1629.6 734.1 L1631.2 731.7 L1632.8 729.8 L1634.4 729.0 L1636.0 731.7 L1637.6 735.6 L1639.2 730.1 L1640.8 730.8 L1642.4 732.5 L1644.0 734.2 L1645.6 735.5 L1647.2 732.7 L1648.8 728.6 L1650.4 734.5 L1652.0 736.0 L1653.6 737.8 L1655.2 737.4 L1656.8 737.8 L1658.4 739.1 L1660.0 736.4 L1661.6 730.6 L1663.2 730.5 L1664.8 732.6 L1666.4 735.0 L1668.0 733.4 L1669.6 734.2 L1671.2 735.8 L1672.8 737.9 L1674.4 738.7 L1676.0 732.4 L1677.6 735.8 L1679.2 736.0 L1680.8 734.6 L1682.4 731.7 L1684.0 733.5 L1685.6 731.7 L1687.2 733.1 L1688.8 732.8 L1690.4 727.7 L1692.0 725.9 L1693.6 732.1 L1695.2 728.5 L1696.8 725.1 L1698.4 729.5 L1700.0 728.4 L1701.6 732.6 L1703.2 732.1 L1704.8 732.7 L1706.4 729.8 L1708.0 731.7 L1709.6 733.9 L1711.2 729.0 L1712.8 730.9 L1714.4 737.1 L1716.0 734.6 L1717.6 736.3 L1719.2 736.7 L1720.8 735.1 L1722.4 736.2 L1724.0 738.8 L1725.6 735.6 L1727.2 731.7 L1728.8 732.1 L1730.4 731.4 L1732.0 728.5 L1733.6 725.0 L1735.2 728.2 L1736.8 731.7 L1738.4 731.6 L1740.0 728.6 L1741.6 735.5 L1743.2 737.9 L1744.8 737.1 L1746.4 732.5 L1748.0 733.1 L1749.6 730.4 L1751.2 733.8 L1752.8 730.2 L1754.4 730.6 L1756.0 734.0 L1757.6 733.0 L1759.2 731.9 L1760.8 725.9 L1762.4 726.0 L1764.0 727.9 L1765.6 734.4 L1767.2 730.5 L1768.8 727.9 L1770.4 734.1 L1772.0 733.0 L1773.6 734.9 L1775.2 732.4 L1776.8 728.0 L1778.4 729.7 L1780.0 732.3 L1781.6 731.7 L1783.2 729.7 L1784.8 735.1 L1786.4 734.8 L1788.0 729.2 L1789.6 729.6 L1791.2 733.4 L1792.8 734.0 L1794.4 735.6 L1796.0 733.3 L1797.6 731.0 L1799.2 737.0 L1800.8 739.0 L1802.4 732.9 L1804.0 727.1 L1805.6 728.7 L1807.2 728.6 L1808.8 733.2 L1810.4 732.4 L1812.0 730.6 L1813.6 738.1 L1815.2 732.4 L1816.8 730.6 L1818.4 731.5 L1820.0 729.9 L1821.6 733.8 L1823.2 730.0 L1824.8 731.0 L1826.4 736.2 L1828.0 739.7 L1829.6 733.8 L1831.2 734.4 L1832.8 732.6 L1834.4 737.0 L1836.0 738.0 L1837.6 731.2 L1839.2 733.8 L1840.8 732.1 L1842.4 734.2 L1844.0 732.5 L1845.6 729.3 L1847.2 725.4 L1848.8 732.1 L1850.4 732.3 L1852.0 729.5 L1853.6 732.5 L1855.2 738.1 L1856.8 740.8 L1858.4 741.8 L1860.0 731.5 L1861.6 725.8 L1863.2 734.9 L1864.8 734.6 L1866.4 728.4 L1868.0 726.5 L1869.6 728.5 L1871.2 736.1 L1872.8 738.6 L1874.4 733.3 L1876.0 727.6 L1877.6 732.4 L1879.2 737.3 L1880.8 734.3 L1882.4 734.6 L1884.0 733.4 L1885.6 732.9 L1887.2 735.8 L1888.8 728.5 L1890.4 728.2 L1892.0 732.7 L1893.6 730.9 L1895.2 730.9 L1896.8 732.6 L1898.4 737.5 L1900.0 732.7 L1901.6 734.7 L1903.2 727.3 L1904.8 731.8 L1906.4 731.3 L1908.0 732.1 L1909.6 728.3 L1911.2 726.0 L1912.8 733.9 L1914.4 736.0 L1916.0 735.7 L1917.6 726.3 L1919.2 733.5 L1920.8 735.8 L1922.4 733.2 L1924.0 728.8 L1925.6 731.5 L1927.2 732.9 L1928.8 734.3 L1930.4 730.6 L1932.0 728.1 L1933.6 728.5 L1935.2 729.9 L1936.8 733.8 L1938.4 729.9 L1940.0 728.1 L1941.6 732.6 L1943.2 730.9 L1944.8 731.2 L1946.4 729.0 L1948.0 730.5 L1949.6 732.0 L1951.2 734.5 L1952.8 728.5 L1954.4 729.3 L1956.0 732.4 L1957.6 734.0 L1959.2 731.9 L1960.8 730.0 L1962.4 734.2 L1964.0 734.8 L1965.6 735.6 L1967.2 734.6 L1968.8 732.8 L1970.4 736.9 L1972.0 737.5 L1973.6 735.3 L1975.2 735.7 L1976.8 735.9 L1978.4 733.5 L1980.0 733.9 L1981.6 730.4 L1983.2 734.1 L1984.8 735.6 L1986.4 733.0 L1988.0 732.4 L1989.6 734.0 L1991.2 733.8 L1992.8 731.5 L1994.4 732.2 L1996.0 729.3 L1997.6 734.3 L1999.2 733.7 L2000.8 733.5 L2002.4 729.6 L2004.0 729.8 L2005.6 731.1 L2007.2 734.1 L2008.8 731.9 L2010.4 728.7 L2012.0 731.4 L2013.6 731.3 L2015.2 732.7 L2016.8 732.7 L2018.4 734.7 L2020.0 735.0 L2021.6 735.1 L2023.2 733.8 L2024.8 731.8 L2026.4 733.7 L2028.0 734.8 L2029.6 733.3 L2031.2 730.4 L2032.8 733.6 L2034.4 734.0 L2036.0 732.5 L2037.6 732.2 L2039.2 732.0 L2040.8 734.6 L2042.4 732.2 L2044.0 732.7 L2045.6 732.0 L2047.2 731.8 L2048.8 731.5 L2050.4 731.6 L2052.0 730.5 L2053.6 731.7 L2055.2 732.9 L2056.8 732.6 L2058.4 731.1 L2060.0 731.7 L2061.6 732.0 L2063.2 732.1 L2064.8 731.9 L2066.4 731.7 L2068.0 732.7 L2069.6 733.1 L2071.2 734.4 L2072.8 734.2 L2074.4 731.8 L2076.0 735.1 L2077.6 735.5 L2079.2 735.3 L2080.8 731.9 L2082.4 731.9 L2084.0 732.9 L2085.6 733.9 L2087.2 734.2 L2088.8 733.0 L2090.4 733.4 L2092.0 732.9 L2093.6 733.4 L2095.2 733.0 L2096.8 732.6 L2098.4 734.2 L2100.0 734.6 L2101.6 731.4 L2103.2 731.9 L2104.8 733.0 L2106.4 733.8 L2108.0 733.7 L2109.6 733.7 L2111.2 734.0 L2112.8 734.7 L2114.4 734.4 L2116.0 734.4 L2117.6 734.3 L2119.2 733.8 L2120.8 734.0 L2122.4 733.2 L2124.0 732.9 L2125.6 733.4 L2127.2 733.5 L2128.8 733.2 L2130.4 733.3 L2132.0 733.4 L2133.6 733.0 L2135.2 732.5 L2136.8 732.7 L2138.4 733.2 L2140.0 733.6 L2141.6 734.6 L2143.2 735.0 L2144.8 734.7 L2146.4 734.5 L2148.0 733.4 L2149.6 732.9 L2151.2 733.2 L2152.8 733.0 L2154.4 733.8 L2156.0 733.6 L2157.6 733.4 L2159.2 733.3 L2160.8 733.2 L2162.4 733.1 L2164.0 732.6 L2165.6 732.8 L2167.2 733.0 L2168.8 734.0 L2170.4 734.5 L2172.0 734.3 L2173.6 734.9 L2175.2 735.2 L2176.8 735.5 L2178.4 733.9 L2180.0 734.3 L2181.6 733.4 L2183.2 734.3 L2184.8 734.2 L2186.4 733.0 L2188.0 734.2 L2189.6 733.4 L2191.2 732.7 L2192.8 732.3 L2194.4 733.0 L2196.0 733.8 L2197.6 734.5 L2199.2 734.5 L2200.8 734.2 L2202.4 734.6 L2204.0 733.5 L2205.6 733.8 L2207.2 733.4 L2208.8 734.6 L2210.4 734.2 L2212.0 734.6 L2213.6 735.2 L2215.2 735.2 L2216.8 733.9 L2218.4 733.6 L2220.0 734.6 L2221.6 734.4 L2223.2 734.2 L2224.8 733.7 L2226.4 733.1 L2228.0 733.6 L2229.6 734.2 L2231.2 734.2 L2232.8 734.4 L2234.4 734.3 L2236.0 734.1 L2237.6 734.4 L2239.2 734.1 L2240.8 733.5 L2242.4 733.5 L2244.0 734.2 L2245.6 734.3 L2247.2 734.6 L2248.8 733.5 L2248.8 736.3 L2247.2 737.1 L2245.6 736.7 L2244.0 736.5 L2242.4 736.5 L2240.8 735.8 L2239.2 736.6 L2237.6 737.1 L2236.0 736.9 L2234.4 737.5 L2232.8 736.8 L2231.2 736.5 L2229.6 736.5 L2228.0 736.0 L2226.4 736.0 L2224.8 736.0 L2223.2 737.1 L2221.6 737.3 L2220.0 737.0 L2218.4 735.9 L2216.8 736.5 L2215.2 737.7 L2213.6 737.7 L2212.0 737.3 L2210.4 736.9 L2208.8 737.1 L2207.2 736.3 L2205.6 736.4 L2204.0 735.9 L2202.4 737.1 L2200.8 736.4 L2199.2 736.9 L2197.6 737.4 L2196.0 736.3 L2194.4 735.8 L2192.8 735.0 L2191.2 735.3 L2189.6 736.1 L2188.0 736.6 L2186.4 736.1 L2184.8 736.6 L2183.2 737.4 L2181.6 736.1 L2180.0 736.7 L2178.4 736.5 L2176.8 737.8 L2175.2 737.7 L2173.6 737.2 L2172.0 737.0 L2170.4 737.4 L2168.8 736.5 L2167.2 735.5 L2165.6 735.1 L2164.0 735.3 L2162.4 735.3 L2160.8 735.9 L2159.2 735.9 L2157.6 735.9 L2156.0 736.3 L2154.4 736.3 L2152.8 735.8 L2151.2 736.1 L2149.6 735.5 L2148.0 736.2 L2146.4 736.9 L2144.8 737.6 L2143.2 737.6 L2141.6 737.1 L2140.0 736.3 L2138.4 735.6 L2136.8 735.6 L2135.2 735.2 L2133.6 735.6 L2132.0 735.9 L2130.4 735.9 L2128.8 735.7 L2127.2 736.1 L2125.6 736.3 L2124.0 736.0 L2122.4 736.4 L2120.8 736.5 L2119.2 736.6 L2117.6 738.2 L2116.0 738.8 L2114.4 737.1 L2112.8 737.2 L2111.2 736.9 L2109.6 738.4 L2108.0 737.6 L2106.4 737.2 L2104.8 735.6 L2103.2 737.1 L2101.6 737.9 L2100.0 737.4 L2098.4 736.7 L2096.8 737.3 L2095.2 739.9 L2093.6 737.2 L2092.0 735.3 L2090.4 736.4 L2088.8 739.1 L2087.2 739.6 L2085.6 737.0 L2084.0 736.2 L2082.4 736.4 L2080.8 738.0 L2079.2 738.7 L2077.6 738.2 L2076.0 738.4 L2074.4 738.6 L2072.8 740.0 L2071.2 737.1 L2069.6 736.2 L2068.0 739.2 L2066.4 737.3 L2064.8 735.7 L2063.2 734.9 L2061.6 736.7 L2060.0 739.5 L2058.4 736.2 L2056.8 735.1 L2055.2 735.9 L2053.6 739.2 L2052.0 737.8 L2050.4 734.5 L2048.8 734.4 L2047.2 736.0 L2045.6 742.2 L2044.0 738.2 L2042.4 735.4 L2040.8 737.5 L2039.2 741.9 L2037.6 740.1 L2036.0 735.3 L2034.4 737.1 L2032.8 738.7 L2031.2 741.3 L2029.6 738.1 L2028.0 737.9 L2026.4 737.0 L2024.8 740.7 L2023.2 740.1 L2021.6 737.8 L2020.0 737.7 L2018.4 741.1 L2016.8 742.9 L2015.2 737.4 L2013.6 734.3 L2012.0 735.8 L2010.4 740.2 L2008.8 737.4 L2007.2 736.7 L2005.6 734.7 L2004.0 736.1 L2002.4 737.1 L2000.8 737.6 L1999.2 736.4 L1997.6 740.9 L1996.0 744.5 L1994.4 737.5 L1992.8 735.0 L1991.2 736.4 L1989.6 741.1 L1988.0 742.1 L1986.4 736.6 L1984.8 738.3 L1983.2 740.6 L1981.6 744.1 L1980.0 739.6 L1978.4 736.9 L1976.8 740.0 L1975.2 744.0 L1973.6 746.4 L1972.0 740.1 L1970.4 740.3 L1968.8 742.5 L1967.2 746.7 L1965.6 741.0 L1964.0 737.5 L1962.4 738.5 L1960.8 739.4 L1959.2 740.5 L1957.6 737.2 L1956.0 735.8 L1954.4 738.1 L1952.8 744.6 L1951.2 738.6 L1949.6 734.8 L1948.0 737.6 L1946.4 744.6 L1944.8 739.9 L1943.2 733.8 L1941.6 735.4 L1940.0 737.4 L1938.4 739.1 L1936.8 737.3 L1935.2 733.1 L1933.6 736.4 L1932.0 740.4 L1930.4 736.5 L1928.8 737.2 L1927.2 736.1 L1925.6 741.8 L1924.0 739.3 L1922.4 736.1 L1920.8 739.6 L1919.2 739.2 L1917.6 743.9 L1916.0 743.1 L1914.4 739.0 L1912.8 738.7 L1911.2 740.6 L1909.6 740.0 L1908.0 735.3 L1906.4 734.2 L1904.8 739.5 L1903.2 744.9 L1901.6 740.0 L1900.0 736.6 L1898.4 744.3 L1896.8 744.8 L1895.2 743.5 L1893.6 735.4 L1892.0 736.9 L1890.4 742.7 L1888.8 747.2 L1887.2 740.5 L1885.6 736.6 L1884.0 739.2 L1882.4 753.5 L1880.8 743.9 L1879.2 741.2 L1877.6 735.9 L1876.0 740.7 L1874.4 749.8 L1872.8 741.8 L1871.2 739.5 L1869.6 735.1 L1868.0 744.9 L1866.4 734.3 L1864.8 738.5 L1863.2 739.6 L1861.6 741.9 L1860.0 743.7 L1858.4 744.9 L1856.8 744.5 L1855.2 744.7 L1853.6 742.8 L1852.0 735.9 L1850.4 736.8 L1848.8 737.4 L1847.2 737.8 L1845.6 739.9 L1844.0 736.3 L1842.4 737.6 L1840.8 743.8 L1839.2 748.0 L1837.6 735.9 L1836.0 742.3 L1834.4 744.5 L1832.8 742.1 L1831.2 741.5 L1829.6 737.3 L1828.0 743.3 L1826.4 744.7 L1824.8 742.5 L1823.2 733.6 L1821.6 738.1 L1820.0 738.4 L1818.4 746.4 L1816.8 737.0 L1815.2 736.2 L1813.6 743.2 L1812.0 745.5 L1810.4 743.1 L1808.8 736.7 L1807.2 732.8 L1805.6 737.2 L1804.0 740.4 L1802.4 740.0 L1800.8 741.9 L1799.2 741.3 L1797.6 742.2 L1796.0 744.0 L1794.4 738.8 L1792.8 738.5 L1791.2 742.9 L1789.6 743.7 L1788.0 735.2 L1786.4 739.2 L1784.8 740.6 L1783.2 741.4 L1781.6 741.6 L1780.0 736.5 L1778.4 732.7 L1776.8 738.8 L1775.2 744.6 L1773.6 739.2 L1772.0 737.1 L1770.4 741.5 L1768.8 739.4 L1767.2 736.8 L1765.6 737.7 L1764.0 731.0 L1762.4 736.4 L1760.8 737.0 L1759.2 735.8 L1757.6 736.7 L1756.0 741.0 L1754.4 744.1 L1752.8 737.6 L1751.2 737.9 L1749.6 734.8 L1748.0 745.4 L1746.4 741.8 L1744.8 740.9 L1743.2 741.2 L1741.6 742.3 L1740.0 741.2 L1738.4 736.6 L1736.8 735.3 L1735.2 733.1 L1733.6 734.8 L1732.0 737.9 L1730.4 735.3 L1728.8 735.7 L1727.2 739.3 L1725.6 748.9 L1724.0 743.5 L1722.4 740.3 L1720.8 741.0 L1719.2 745.9 L1717.6 744.9 L1716.0 738.7 L1714.4 740.9 L1712.8 741.2 L1711.2 739.5 L1709.6 738.2 L1708.0 735.5 L1706.4 738.2 L1704.8 741.5 L1703.2 738.2 L1701.6 736.9 L1700.0 732.5 L1698.4 740.3 L1696.8 734.8 L1695.2 732.2 L1693.6 735.9 L1692.0 733.1 L1690.4 741.0 L1688.8 737.6 L1687.2 736.7 L1685.6 736.6 L1684.0 744.5 L1682.4 738.4 L1680.8 738.5 L1679.2 739.7 L1677.6 741.6 L1676.0 741.4 L1674.4 744.3 L1672.8 742.1 L1671.2 740.6 L1669.6 745.5 L1668.0 740.6 L1666.4 739.5 L1664.8 736.1 L1663.2 736.8 L1661.6 738.9 L1660.0 741.6 L1658.4 742.4 L1656.8 742.2 L1655.2 748.9 L1653.6 743.6 L1652.0 739.3 L1650.4 738.6 L1648.8 735.3 L1647.2 740.7 L1645.6 739.3 L1644.0 737.6 L1642.4 738.1 L1640.8 742.5 L1639.2 735.5 L1637.6 739.7 L1636.0 735.3 L1634.4 737.6 L1632.8 737.8 L1631.2 737.2 L1629.6 737.6 L1628.0 736.2 L1626.4 743.9 L1624.8 738.4 L1623.2 739.1 L1621.6 741.9 L1620.0 743.0 L1618.4 742.2 L1616.8 737.9 L1615.2 735.4 L1613.6 737.1 L1612.0 740.4 L1610.4 739.5 L1608.8 735.9 L1607.2 736.5 L1605.6 736.9 L1604.0 735.6 L1602.4 737.0 L1600.8 734.3 L1599.2 735.0 L1597.6 735.2 L1596.0 737.4 L1594.4 737.0 L1592.8 738.3 L1591.2 743.3 L1589.6 738.0 L1588.0 735.6 L1586.4 736.7 L1584.8 743.2 L1583.2 739.2 L1581.6 737.2 L1580.0 734.1 L1578.4 735.2 L1576.8 741.8 L1575.2 740.0 L1573.6 737.3 L1572.0 737.3 L1570.4 738.6 L1568.8 741.1 L1567.2 735.3 L1565.6 736.9 L1564.0 734.4 L1562.4 739.7 L1560.8 741.1 L1559.2 741.1 L1557.6 740.7 L1556.0 742.3 L1554.4 737.8 L1552.8 740.4 L1551.2 739.7 L1549.6 742.9 L1548.0 741.5 L1546.4 738.6 L1544.8 737.6 L1543.2 735.4 L1541.6 738.3 L1540.0 738.0 L1538.4 734.2 L1536.8 734.6 L1535.2 735.2 L1533.6 736.2 L1532.0 732.2 L1530.4 734.5 L1528.8 738.0 L1527.2 736.9 L1525.6 739.0 L1524.0 734.9 L1522.4 735.5 L1520.8 735.1 L1519.2 736.4 L1517.6 732.4 L1516.0 734.5 L1514.4 736.3 L1512.8 739.1 L1511.2 737.9 L1509.6 737.1 L1508.0 734.6 L1506.4 736.9 L1504.8 734.3 L1503.2 736.2 L1501.6 741.7 L1500.0 740.0 L1498.4 737.1 L1496.8 736.4 L1495.2 734.3 L1493.6 737.6 L1492.0 740.6 L1490.4 740.1 L1488.8 738.5 L1487.2 735.2 L1485.6 733.8 L1484.0 736.2 L1482.4 734.3 L1480.8 735.9 L1479.2 738.3 L1477.6 739.0 L1476.0 737.3 L1474.4 735.1 L1472.8 733.4 L1471.2 737.1 L1469.6 736.7 L1468.0 733.9 L1466.4 733.9 L1464.8 737.1 L1463.2 741.8 L1461.6 739.2 L1460.0 737.7 L1458.4 734.8 L1456.8 738.6 L1455.2 736.5 L1453.6 736.0 L1452.0 740.2 L1450.4 738.2 L1448.8 738.1 L1447.2 733.1 L1445.6 734.2 L1444.0 735.7 L1442.4 740.2 L1440.8 737.1 L1439.2 736.2 L1437.6 739.8 L1436.0 738.9 L1434.4 736.0 L1432.8 737.1 L1431.2 733.0 L1429.6 734.4 L1428.0 735.8 L1426.4 733.4 L1424.8 732.1 L1423.2 732.6 L1421.6 735.7 L1420.0 737.4 L1418.4 736.6 L1416.8 734.1 L1415.2 734.0 L1413.6 735.8 L1412.0 736.0 L1410.4 735.3 L1408.8 737.9 L1407.2 737.9 L1405.6 736.5 L1404.0 732.3 L1402.4 733.8 L1400.8 735.8 L1399.2 739.4 L1397.6 736.9 L1396.0 739.7 L1394.4 740.4 L1392.8 739.4 L1391.2 738.4 L1389.6 738.4 L1388.0 738.6 L1386.4 737.8 L1384.8 738.9 L1383.2 737.9 L1381.6 739.1 L1380.0 738.3 L1378.4 735.5 L1376.8 738.2 L1375.2 735.6 L1373.6 735.1 L1372.0 737.3 L1370.4 738.8 L1368.8 737.4 L1367.2 736.4 L1365.6 735.0 L1364.0 738.4 L1362.4 734.9 L1360.8 735.6 L1359.2 734.7 L1357.6 735.9 L1356.0 736.2 L1354.4 735.8 L1352.8 738.1 L1351.2 735.1 L1349.6 737.1 L1348.0 737.2 L1346.4 733.9 L1344.8 734.6 L1343.2 737.7 L1341.6 739.3 L1340.0 741.5 L1338.4 739.9 L1336.8 740.0 L1335.2 739.6 L1333.6 736.5 L1332.0 737.0 L1330.4 736.4 L1328.8 740.6 L1327.2 738.5 L1325.6 736.8 L1324.0 734.4 L1322.4 736.2 L1320.8 737.1 L1319.2 737.5 L1317.6 736.7 L1316.0 739.1 L1314.4 737.0 L1312.8 738.4 L1311.2 740.1 L1309.6 737.5 L1308.0 740.8 L1306.4 738.5 L1304.8 735.1 L1303.2 738.0 L1301.6 736.7 L1300.0 737.9 L1298.4 735.7 L1296.8 735.9 L1295.2 735.8 L1293.6 738.4 L1292.0 736.4 L1290.4 735.7 L1288.8 736.3 L1287.2 735.9 L1285.6 739.9 L1284.0 736.7 L1282.4 735.4 L1280.8 734.8 L1279.2 736.2 L1277.6 738.9 L1276.0 737.2 L1274.4 737.2 L1272.8 737.6 L1271.2 739.6 L1269.6 739.1 L1268.0 737.4 L1266.4 738.5 L1264.8 740.1 L1263.2 741.1 L1261.6 739.6 L1260.0 738.5 L1258.4 738.5 L1256.8 737.8 L1255.2 738.1 L1253.6 741.0 L1252.0 741.7 L1250.4 738.6 L1248.8 741.2 L1247.2 740.4 L1245.6 740.3 L1244.0 737.4 L1242.4 737.9 L1240.8 735.2 L1239.2 733.5 L1237.6 735.0 L1236.0 736.5 L1234.4 739.6 L1232.8 743.2 L1231.2 736.5 L1229.6 740.3 L1228.0 744.3 L1226.4 740.5 L1224.8 740.1 L1223.2 737.2 L1221.6 738.7 L1220.0 735.4 L1218.4 739.0 L1216.8 740.2 L1215.2 739.8 L1213.6 736.5 L1212.0 738.8 L1210.4 734.6 L1208.8 735.4 L1207.2 740.6 L1205.6 738.6 L1204.0 740.4 L1202.4 738.8 L1200.8 738.1 L1199.2 736.4 L1197.6 742.1 L1196.0 736.5 L1194.4 734.7 L1192.8 737.0 L1191.2 737.1 L1189.6 736.0 L1188.0 737.2 L1186.4 737.9 L1184.8 736.8 L1183.2 737.1 L1181.6 736.5 L1180.0 737.4 L1178.4 738.8 L1176.8 736.9 L1175.2 736.9 L1173.6 736.6 L1172.0 735.4 L1170.4 736.0 L1168.8 739.4 L1167.2 737.5 L1165.6 735.7 L1164.0 735.1 L1162.4 735.8 L1160.8 737.5 L1159.2 736.3 L1157.6 736.3 L1156.0 736.7 L1154.4 736.6 L1152.8 737.0 L1151.2 736.4 L1149.6 736.2 L1148.0 737.2 L1146.4 737.4 L1144.8 736.2 L1143.2 736.0 L1141.6 737.8 L1140.0 736.1 L1138.4 736.9 L1136.8 737.8 L1135.2 738.1 L1133.6 737.2 L1132.0 736.9 L1130.4 735.9 L1128.8 738.0 L1127.2 738.3 L1125.6 737.6 L1124.0 736.7 L1122.4 737.3 L1120.8 737.2 L1119.2 738.3 L1117.6 737.2 L1116.0 737.3 L1114.4 738.1 L1112.8 736.7 L1111.2 736.8 L1109.6 736.8 L1108.0 737.2 L1106.4 736.9 L1104.8 740.1 L1103.2 737.5 L1101.6 736.4 L1100.0 736.5 L1098.4 735.9 L1096.8 735.5 L1095.2 737.4 L1093.6 735.2 L1092.0 735.5 L1090.4 737.0 L1088.8 736.4 L1087.2 736.0 L1085.6 736.4 L1084.0 736.9 L1082.4 737.2 L1080.8 736.3 L1079.2 737.2 L1077.6 738.4 L1076.0 737.5 L1074.4 736.0 L1072.8 736.8 L1071.2 738.4 L1069.6 738.1 L1068.0 737.6 L1066.4 737.3 L1064.8 737.3 L1063.2 735.9 L1061.6 737.7 L1060.0 737.8 L1058.4 737.0 L1056.8 738.6 L1055.2 737.2 L1053.6 736.8 L1052.0 737.0 L1050.4 737.9 L1048.8 736.5 L1047.2 739.1 L1045.6 738.0 L1044.0 737.5 L1042.4 737.3 L1040.8 737.3 L1039.2 738.1 L1037.6 737.6 L1036.0 736.8 L1034.4 736.5 L1032.8 735.5 L1031.2 735.3 L1029.6 737.2 L1028.0 737.5 L1026.4 738.0 L1024.8 739.0 L1023.2 738.4 L1021.6 738.6 L1020.0 737.7 L1018.4 737.0 L1016.8 736.4 L1015.2 737.8 L1013.6 736.2 L1012.0 737.7 L1010.4 737.3 L1008.8 736.6 L1007.2 736.9 L1005.6 736.8 L1004.0 736.6 L1002.4 736.4 L1000.8 737.3 L999.2 736.8 L997.6 737.5 L996.0 738.1 L994.4 736.4 L992.8 736.6 L991.2 738.4 L989.6 737.1 L988.0 736.6 L986.4 738.3 L984.8 737.4 L983.2 736.4 L981.6 736.7 L980.0 739.4 L978.4 737.6 L976.8 738.5 L975.2 738.8 L973.6 737.3 L972.0 736.9 L970.4 739.0 L968.8 736.7 L967.2 738.3 L965.6 737.1 L964.0 737.8 L962.4 738.5 L960.8 739.4 L959.2 737.2 L957.6 738.4 L956.0 740.3 L954.4 740.5 L952.8 738.8 L951.2 737.9 L949.6 737.7 L948.0 738.3 L946.4 739.7 L944.8 736.9 L943.2 737.4 L941.6 739.2 L940.0 740.9 L938.4 740.4 L936.8 742.5 L935.2 736.8 L933.6 738.2 L932.0 741.4 L930.4 738.7 L928.8 738.8 L927.2 738.4 L925.6 740.5 L924.0 738.0 L922.4 740.4 L920.8 737.3 L919.2 740.2 L917.6 741.8 L916.0 736.9 L914.4 740.0 L912.8 738.5 L911.2 740.3 L909.6 739.0 L908.0 740.5 L906.4 742.9 L904.8 736.7 L903.2 737.0 L901.6 736.9 L900.0 736.7 L898.4 739.5 L896.8 737.3 L895.2 739.1 L893.6 737.4 L892.0 737.0 L890.4 738.2 L888.8 738.3 L887.2 738.9 L885.6 739.1 L884.0 738.5 L882.4 740.2 L880.8 737.1 L879.2 737.4 L877.6 739.0 L876.0 741.0 L874.4 738.2 L872.8 739.6 L871.2 736.5 L869.6 737.6 L868.0 737.4 L866.4 737.4 L864.8 737.9 L863.2 739.1 L861.6 737.9 L860.0 740.4 L858.4 742.4 L856.8 741.6 L855.2 743.0 L853.6 737.2 L852.0 737.2 L850.4 737.1 L848.8 737.5 L847.2 740.1 L845.6 740.1 L844.0 737.7 L842.4 739.6 L840.8 740.2 L839.2 741.1 L837.6 737.5 L836.0 738.3 L834.4 738.6 L832.8 737.3 L831.2 737.0 L829.6 737.9 L828.0 737.2 L826.4 738.6 L824.8 740.0 L823.2 737.1 L821.6 739.7 L820.0 738.8 L818.4 737.5 L816.8 738.9 L815.2 738.7 L813.6 738.7 L812.0 737.3 L810.4 738.8 L808.8 738.4 L807.2 737.2 L805.6 739.3 L804.0 743.2 L802.4 739.0 L800.8 738.1 L799.2 738.7 L797.6 739.2 L796.0 737.3 L794.4 740.2 L792.8 741.8 L791.2 739.8 L789.6 738.4 L788.0 742.7 L786.4 738.2 L784.8 739.7 L783.2 739.9 L781.6 738.4 L780.0 740.8 L778.4 743.5 L776.8 739.2 L775.2 745.1 L773.6 737.7 L772.0 737.8 L770.4 738.5 L768.8 742.1 L767.2 738.5 L765.6 739.1 L764.0 738.5 L762.4 738.1 L760.8 742.2 L759.2 738.0 L757.6 739.9 L756.0 739.1 L754.4 738.5 L752.8 738.2 L751.2 739.0 L749.6 743.3 L748.0 738.4 L746.4 740.1 L744.8 741.8 L743.2 739.4 L741.6 741.4 L740.0 738.7 L738.4 738.3 L736.8 739.0 L735.2 737.5 L733.6 738.2 L732.0 737.5 L730.4 739.7 L728.8 738.6 L727.2 738.0 L725.6 739.9 L724.0 737.4 L722.4 741.7 L720.8 744.6 L719.2 738.3 L717.6 743.8 L716.0 739.9 L714.4 738.2 L712.8 738.8 L711.2 740.7 L709.6 739.6 L708.0 737.3 L706.4 739.7 L704.8 738.9 L703.2 738.9 L701.6 738.1 L700.0 738.2 L698.4 738.5 L696.8 744.5 L695.2 738.1 L693.6 742.4 L692.0 737.3 L690.4 742.4 L688.8 742.5 L687.2 739.5 L685.6 739.2 L684.0 740.6 L682.4 739.1 L680.8 740.9 L679.2 740.2 L677.6 737.9 L676.0 738.9 L674.4 737.4 L672.8 744.4 L671.2 737.1 L669.6 741.6 L668.0 741.1 L666.4 739.0 L664.8 742.8 L663.2 737.9 L661.6 740.2 L660.0 739.2 L658.4 737.7 L656.8 739.2 L655.2 737.1 L653.6 741.8 L652.0 744.4 L650.4 743.3 L648.8 739.6 L647.2 738.3 L645.6 737.9 L644.0 739.9 L642.4 737.4 L640.8 740.2 L639.2 739.9 L637.6 737.2 L636.0 736.9 L634.4 739.0 L632.8 738.0 L631.2 743.6 L629.6 737.2 L628.0 740.6 L626.4 737.1 L624.8 745.1 L623.2 737.6 L621.6 740.0 L620.0 738.1 L618.4 742.3 L616.8 742.8 L615.2 737.3 L613.6 742.4 L612.0 739.7 L610.4 738.3 L608.8 738.4 L607.2 737.6 L605.6 738.4 L604.0 737.8 L602.4 738.4 L600.8 737.4 L599.2 738.6 L597.6 738.7 L596.0 740.9 L594.4 739.1 L592.8 744.5 L591.2 737.7 L589.6 741.8 L588.0 744.2 L586.4 738.4 L584.8 744.2 L583.2 741.8 L581.6 738.3 L580.0 738.3 L578.4 742.9 L576.8 739.4 L575.2 740.0 L573.6 737.3 L572.0 745.5 L570.4 739.6 L568.8 739.3 L567.2 740.2 L565.6 738.8 L564.0 738.9 L562.4 738.1 L560.8 737.9 L559.2 739.4 L557.6 738.9 L556.0 742.8 L554.4 742.9 L552.8 740.7 L551.2 739.0 L549.6 739.6 L548.0 739.0 L546.4 742.0 L544.8 742.1 L543.2 740.8 L541.6 740.5 L540.0 740.0 L538.4 739.0 L536.8 739.8 L535.2 740.2 L533.6 745.0 L532.0 739.3 L530.4 737.8 L528.8 740.0 L527.2 737.9 L525.6 738.2 L524.0 740.3 L522.4 741.2 L520.8 739.1 L519.2 742.4 L517.6 740.2 L516.0 745.8 L514.4 738.3 L512.8 739.0 L511.2 738.7 L509.6 740.3 L508.0 742.4 L506.4 737.9 L504.8 743.2 L503.2 739.1 L501.6 743.2 L500.0 738.3 L498.4 743.2 L496.8 739.0 L495.2 740.2 L493.6 738.0 L492.0 737.9 L490.4 741.3 L488.8 741.2 L487.2 740.0 L485.6 740.4 L484.0 741.7 L482.4 743.2 L480.8 741.3 L479.2 742.1 L477.6 739.8 L476.0 742.5 L474.4 739.8 L472.8 742.1 L471.2 739.4 L469.6 737.7 L468.0 739.5 L466.4 737.9 L464.8 738.9 L463.2 738.6 L461.6 747.6 L460.0 741.0 L458.4 742.3 L456.8 742.2 L455.2 743.4 L453.6 740.8 L452.0 742.3 L450.4 741.3 L448.8 745.4 L447.2 741.1 L445.6 743.5 L444.0 742.6 L442.4 741.5 L440.8 741.6 L439.2 741.3 L437.6 743.8 L436.0 743.7 L434.4 743.7 L432.8 742.3 L431.2 744.2 L429.6 743.7 L428.0 744.0 L426.4 744.8 L424.8 742.8 L423.2 744.5 L421.6 742.7 L420.0 747.4 L418.4 744.6 L416.8 743.0 L415.2 741.9 L413.6 750.3 L412.0 740.9 L410.4 740.9 L408.8 741.0 L407.2 742.9 L405.6 741.6 L404.0 740.2 L402.4 740.5 L400.8 745.5 L399.2 744.2 L397.6 746.5 L396.0 740.1 L394.4 741.3 L392.8 741.1 L391.2 739.6 L389.6 740.2 L388.0 739.4 L386.4 738.0 L384.8 739.7 L383.2 737.9 L381.6 740.4 L380.0 739.1 L378.4 741.3 L376.8 738.3 L375.2 737.6 L373.6 738.2 L372.0 738.0 L370.4 739.9 L368.8 741.0 L367.2 738.5 L365.6 742.5 L364.0 740.8 L362.4 741.1 L360.8 741.7 L359.2 738.4 L357.6 740.9 L356.0 743.3 L354.4 744.2 L352.8 740.5 L351.2 740.5 L349.6 743.8 L348.0 738.4 L346.4 741.5 L344.8 739.5 L343.2 741.6 L341.6 742.7 L340.0 740.6 L338.4 738.9 L336.8 739.1 L335.2 740.6 L333.6 738.9 L332.0 741.0 L330.4 743.6 L328.8 744.7 L327.2 739.6 L325.6 739.8 L324.0 742.8 L322.4 739.0 L320.8 738.8 L319.2 738.8 L317.6 740.2 L316.0 738.1 L314.4 747.3 L312.8 740.9 L311.2 739.6 L309.6 738.4 L308.0 737.9 L306.4 741.0 L304.8 738.9 L303.2 739.3 L301.6 743.2 L300.0 741.0 L298.4 739.7 L296.8 742.8 L295.2 739.1 L293.6 739.5 L292.0 741.5 L290.4 745.6 L288.8 743.3 L287.2 743.9 L285.6 741.2 L284.0 742.6 L282.4 741.2 L280.8 739.5 L279.2 743.0 L277.6 739.8 L276.0 741.7 L274.4 741.0 L272.8 741.4 L271.2 744.8 L269.6 744.1 L268.0 739.0 L266.4 742.3 L264.8 749.8 L263.2 740.6 L261.6 742.1 L260.0 740.2 L258.4 740.6 L256.8 739.9 L255.2 742.7 L253.6 743.7 L252.0 741.0 L250.4 741.3 L248.8 745.4 L247.2 745.5 L245.6 740.7 L244.0 739.5 L242.4 738.7 L240.8 739.6 L239.2 743.5z" fill="#ff0000" stroke="#7a0606" stroke-width="1.1" stroke-linejoin="round"/><path d="M239.2 790.8 L240.8 795.1 L242.4 795.0 L244.0 794.0 L245.6 794.5 L247.2 788.7 L248.8 793.1 L250.4 787.5 L252.0 792.4 L253.6 794.1 L255.2 793.8 L256.8 795.4 L258.4 786.8 L260.0 793.4 L261.6 794.3 L263.2 792.2 L264.8 788.8 L266.4 791.0 L268.0 784.1 L269.6 785.9 L271.2 791.8 L272.8 794.4 L274.4 791.5 L276.0 794.0 L277.6 792.3 L279.2 793.9 L280.8 792.3 L282.4 793.9 L284.0 792.5 L285.6 789.6 L287.2 791.7 L288.8 792.9 L290.4 791.2 L292.0 793.6 L293.6 787.7 L295.2 795.1 L296.8 791.9 L298.4 792.2 L300.0 793.0 L301.6 791.7 L303.2 790.9 L304.8 796.2 L306.4 792.3 L308.0 783.9 L309.6 795.3 L311.2 793.2 L312.8 796.9 L314.4 793.4 L316.0 794.3 L317.6 792.9 L319.2 795.4 L320.8 796.1 L322.4 795.2 L324.0 792.5 L325.6 796.2 L327.2 794.5 L328.8 791.9 L330.4 795.1 L332.0 791.7 L333.6 794.9 L335.2 796.9 L336.8 792.9 L338.4 794.8 L340.0 791.2 L341.6 793.8 L343.2 793.1 L344.8 796.2 L346.4 793.9 L348.0 795.9 L349.6 794.3 L351.2 796.5 L352.8 793.6 L354.4 795.6 L356.0 795.4 L357.6 792.4 L359.2 795.7 L360.8 794.6 L362.4 790.2 L364.0 790.6 L365.6 794.3 L367.2 794.6 L368.8 795.9 L370.4 796.7 L372.0 792.3 L373.6 793.9 L375.2 796.5 L376.8 797.2 L378.4 796.0 L380.0 793.0 L381.6 794.6 L383.2 796.4 L384.8 788.3 L386.4 791.4 L388.0 788.4 L389.6 792.1 L391.2 791.9 L392.8 792.8 L394.4 795.4 L396.0 791.7 L397.6 793.7 L399.2 794.4 L400.8 792.3 L402.4 791.5 L404.0 789.8 L405.6 788.6 L407.2 790.8 L408.8 789.9 L410.4 793.3 L412.0 790.8 L413.6 792.8 L415.2 792.8 L416.8 788.1 L418.4 792.8 L420.0 788.2 L421.6 789.8 L423.2 787.2 L424.8 789.0 L426.4 790.3 L428.0 792.5 L429.6 786.7 L431.2 788.4 L432.8 790.8 L434.4 787.2 L436.0 789.2 L437.6 789.5 L439.2 789.7 L440.8 790.8 L442.4 793.5 L444.0 791.6 L445.6 788.8 L447.2 789.7 L448.8 790.8 L450.4 790.8 L452.0 793.6 L453.6 789.4 L455.2 791.9 L456.8 795.0 L458.4 789.0 L460.0 795.0 L461.6 794.7 L463.2 795.4 L464.8 794.0 L466.4 796.1 L468.0 796.6 L469.6 793.9 L471.2 795.4 L472.8 794.2 L474.4 795.6 L476.0 794.8 L477.6 793.5 L479.2 795.4 L480.8 794.5 L482.4 796.8 L484.0 796.1 L485.6 794.1 L487.2 795.2 L488.8 793.6 L490.4 794.1 L492.0 793.5 L493.6 795.8 L495.2 792.9 L496.8 795.0 L498.4 795.0 L500.0 796.2 L501.6 796.0 L503.2 793.8 L504.8 793.7 L506.4 794.1 L508.0 794.9 L509.6 792.3 L511.2 794.8 L512.8 794.8 L514.4 794.5 L516.0 795.0 L517.6 796.2 L519.2 791.5 L520.8 795.6 L522.4 796.5 L524.0 791.0 L525.6 790.3 L527.2 794.3 L528.8 795.9 L530.4 795.2 L532.0 795.7 L533.6 791.0 L535.2 791.4 L536.8 791.2 L538.4 796.9 L540.0 792.7 L541.6 794.0 L543.2 796.3 L544.8 794.2 L546.4 795.8 L548.0 795.2 L549.6 793.7 L551.2 796.2 L552.8 797.0 L554.4 796.3 L556.0 795.3 L557.6 792.8 L559.2 791.0 L560.8 796.4 L562.4 794.9 L564.0 794.0 L565.6 796.6 L567.2 796.2 L568.8 792.9 L570.4 793.1 L572.0 793.3 L573.6 795.9 L575.2 795.3 L576.8 793.7 L578.4 795.8 L580.0 795.8 L581.6 795.9 L583.2 793.6 L584.8 789.8 L586.4 791.7 L588.0 795.1 L589.6 795.7 L591.2 793.0 L592.8 796.1 L594.4 796.8 L596.0 797.4 L597.6 797.0 L599.2 795.3 L600.8 794.8 L602.4 794.2 L604.0 797.4 L605.6 794.5 L607.2 795.4 L608.8 797.6 L610.4 791.3 L612.0 797.3 L613.6 794.4 L615.2 797.1 L616.8 796.3 L618.4 793.9 L620.0 793.7 L621.6 791.5 L623.2 792.8 L624.8 793.3 L626.4 795.9 L628.0 796.0 L629.6 796.5 L631.2 797.6 L632.8 795.8 L634.4 794.3 L636.0 797.0 L637.6 797.2 L639.2 790.9 L640.8 797.1 L642.4 794.5 L644.0 794.7 L645.6 794.4 L647.2 796.5 L648.8 793.9 L650.4 797.6 L652.0 794.1 L653.6 796.9 L655.2 797.7 L656.8 791.1 L658.4 797.8 L660.0 794.5 L661.6 796.7 L663.2 791.3 L664.8 796.1 L666.4 796.3 L668.0 795.7 L669.6 796.3 L671.2 795.7 L672.8 795.6 L674.4 797.1 L676.0 791.5 L677.6 792.5 L679.2 792.9 L680.8 797.1 L682.4 796.3 L684.0 795.2 L685.6 796.6 L687.2 795.4 L688.8 793.7 L690.4 795.3 L692.0 796.5 L693.6 790.4 L695.2 795.9 L696.8 792.8 L698.4 796.5 L700.0 796.7 L701.6 796.5 L703.2 793.9 L704.8 792.9 L706.4 795.6 L708.0 795.2 L709.6 795.8 L711.2 794.3 L712.8 794.6 L714.4 796.1 L716.0 796.3 L717.6 796.0 L719.2 795.9 L720.8 795.1 L722.4 795.7 L724.0 796.7 L725.6 795.3 L727.2 795.8 L728.8 796.4 L730.4 795.7 L732.0 796.8 L733.6 796.8 L735.2 797.4 L736.8 797.3 L738.4 793.3 L740.0 795.0 L741.6 794.2 L743.2 796.3 L744.8 792.8 L746.4 796.3 L748.0 795.5 L749.6 795.7 L751.2 792.7 L752.8 791.9 L754.4 795.1 L756.0 796.7 L757.6 795.5 L759.2 793.7 L760.8 794.4 L762.4 797.0 L764.0 796.7 L765.6 796.3 L767.2 794.5 L768.8 794.3 L770.4 796.4 L772.0 797.3 L773.6 794.2 L775.2 794.5 L776.8 796.9 L778.4 796.2 L780.0 795.2 L781.6 789.4 L783.2 796.9 L784.8 794.1 L786.4 794.9 L788.0 794.3 L789.6 795.6 L791.2 794.1 L792.8 794.4 L794.4 796.6 L796.0 794.5 L797.6 792.8 L799.2 794.3 L800.8 792.5 L802.4 797.7 L804.0 796.2 L805.6 795.9 L807.2 792.0 L808.8 797.2 L810.4 793.3 L812.0 795.7 L813.6 793.6 L815.2 795.6 L816.8 793.5 L818.4 794.7 L820.0 796.1 L821.6 794.0 L823.2 791.6 L824.8 795.9 L826.4 796.0 L828.0 796.5 L829.6 797.7 L831.2 791.2 L832.8 796.2 L834.4 797.0 L836.0 797.0 L837.6 796.7 L839.2 796.6 L840.8 795.4 L842.4 792.8 L844.0 792.0 L845.6 794.1 L847.2 794.7 L848.8 796.0 L850.4 796.9 L852.0 796.4 L853.6 798.2 L855.2 794.2 L856.8 796.6 L858.4 797.0 L860.0 796.0 L861.6 793.1 L863.2 796.0 L864.8 797.8 L866.4 794.9 L868.0 798.0 L869.6 795.8 L871.2 796.9 L872.8 797.2 L874.4 797.8 L876.0 797.6 L877.6 797.8 L879.2 795.6 L880.8 793.6 L882.4 795.1 L884.0 798.5 L885.6 793.5 L887.2 790.3 L888.8 794.2 L890.4 797.4 L892.0 798.0 L893.6 797.2 L895.2 795.3 L896.8 793.2 L898.4 796.8 L900.0 795.0 L901.6 797.7 L903.2 797.3 L904.8 797.5 L906.4 796.8 L908.0 798.3 L909.6 798.1 L911.2 793.2 L912.8 796.7 L914.4 795.1 L916.0 790.8 L917.6 796.4 L919.2 794.5 L920.8 796.1 L922.4 794.9 L924.0 796.5 L925.6 796.5 L927.2 796.6 L928.8 795.1 L930.4 797.2 L932.0 797.2 L933.6 797.4 L935.2 794.4 L936.8 795.0 L938.4 797.4 L940.0 796.0 L941.6 795.9 L943.2 797.4 L944.8 795.4 L946.4 796.7 L948.0 797.1 L949.6 796.8 L951.2 798.0 L952.8 795.6 L954.4 797.8 L956.0 797.4 L957.6 798.1 L959.2 796.5 L960.8 794.6 L962.4 796.4 L964.0 797.9 L965.6 795.6 L967.2 795.4 L968.8 798.2 L970.4 796.7 L972.0 795.7 L973.6 797.9 L975.2 798.4 L976.8 798.0 L978.4 798.1 L980.0 798.2 L981.6 798.1 L983.2 797.2 L984.8 797.6 L986.4 798.2 L988.0 795.3 L989.6 797.7 L991.2 795.7 L992.8 797.6 L994.4 797.3 L996.0 797.3 L997.6 797.8 L999.2 797.6 L1000.8 798.4 L1002.4 797.0 L1004.0 797.8 L1005.6 797.5 L1007.2 796.6 L1008.8 798.1 L1010.4 798.2 L1012.0 798.4 L1013.6 795.9 L1015.2 798.4 L1016.8 797.7 L1018.4 797.6 L1020.0 796.1 L1021.6 797.2 L1023.2 797.1 L1024.8 797.2 L1026.4 798.9 L1028.0 798.8 L1029.6 799.6 L1031.2 797.0 L1032.8 798.1 L1034.4 797.9 L1036.0 796.2 L1037.6 798.4 L1039.2 799.0 L1040.8 797.8 L1042.4 798.7 L1044.0 797.0 L1045.6 798.2 L1047.2 796.1 L1048.8 796.9 L1050.4 795.6 L1052.0 797.6 L1053.6 799.5 L1055.2 797.1 L1056.8 798.0 L1058.4 798.5 L1060.0 798.0 L1061.6 798.5 L1063.2 797.9 L1064.8 797.7 L1066.4 797.6 L1068.0 799.0 L1069.6 797.9 L1071.2 798.2 L1072.8 800.3 L1074.4 799.2 L1076.0 796.2 L1077.6 797.5 L1079.2 799.4 L1080.8 799.2 L1082.4 799.4 L1084.0 797.9 L1085.6 799.3 L1087.2 798.4 L1088.8 798.9 L1090.4 797.5 L1092.0 798.1 L1093.6 799.1 L1095.2 798.0 L1096.8 798.4 L1098.4 796.6 L1100.0 796.1 L1101.6 796.7 L1103.2 798.3 L1104.8 798.4 L1106.4 798.9 L1108.0 799.4 L1109.6 798.2 L1111.2 798.2 L1112.8 797.9 L1114.4 795.4 L1116.0 798.5 L1117.6 798.2 L1119.2 798.4 L1120.8 798.2 L1122.4 797.5 L1124.0 796.4 L1125.6 797.7 L1127.2 797.9 L1128.8 798.5 L1130.4 795.8 L1132.0 798.1 L1133.6 797.2 L1135.2 797.8 L1136.8 798.3 L1138.4 797.9 L1140.0 797.7 L1141.6 798.8 L1143.2 798.4 L1144.8 797.8 L1146.4 796.6 L1148.0 797.1 L1149.6 798.1 L1151.2 800.0 L1152.8 799.0 L1154.4 797.1 L1156.0 798.2 L1157.6 798.6 L1159.2 797.9 L1160.8 797.4 L1162.4 797.4 L1164.0 797.7 L1165.6 798.1 L1167.2 797.8 L1168.8 797.6 L1170.4 797.5 L1172.0 795.7 L1173.6 797.8 L1175.2 799.8 L1176.8 797.5 L1178.4 798.0 L1180.0 798.1 L1181.6 797.4 L1183.2 798.3 L1184.8 798.8 L1186.4 798.1 L1188.0 798.6 L1189.6 799.9 L1191.2 798.8 L1192.8 796.1 L1194.4 797.1 L1196.0 798.6 L1197.6 799.9 L1199.2 796.0 L1200.8 798.0 L1202.4 794.3 L1204.0 797.5 L1205.6 801.2 L1207.2 796.8 L1208.8 795.8 L1210.4 798.2 L1212.0 798.9 L1213.6 798.1 L1215.2 798.1 L1216.8 802.1 L1218.4 802.8 L1220.0 799.3 L1221.6 798.5 L1223.2 793.5 L1224.8 798.3 L1226.4 798.8 L1228.0 795.4 L1229.6 791.5 L1231.2 794.1 L1232.8 796.9 L1234.4 796.8 L1236.0 801.5 L1237.6 796.4 L1239.2 794.3 L1240.8 790.3 L1242.4 792.4 L1244.0 797.2 L1245.6 790.3 L1247.2 794.8 L1248.8 795.6 L1250.4 795.1 L1252.0 796.6 L1253.6 793.7 L1255.2 796.2 L1256.8 793.7 L1258.4 793.3 L1260.0 794.0 L1261.6 792.9 L1263.2 791.9 L1264.8 792.8 L1266.4 794.2 L1268.0 795.5 L1269.6 795.0 L1271.2 796.2 L1272.8 796.5 L1274.4 797.0 L1276.0 795.0 L1277.6 798.1 L1279.2 799.3 L1280.8 801.3 L1282.4 799.5 L1284.0 797.2 L1285.6 795.0 L1287.2 795.9 L1288.8 795.0 L1290.4 798.8 L1292.0 797.5 L1293.6 795.0 L1295.2 798.1 L1296.8 799.0 L1298.4 798.2 L1300.0 800.1 L1301.6 800.7 L1303.2 801.4 L1304.8 799.4 L1306.4 798.8 L1308.0 796.3 L1309.6 798.0 L1311.2 797.0 L1312.8 794.8 L1314.4 793.0 L1316.0 796.8 L1317.6 799.3 L1319.2 796.4 L1320.8 796.1 L1322.4 795.9 L1324.0 798.5 L1325.6 800.2 L1327.2 796.3 L1328.8 799.0 L1330.4 798.3 L1332.0 798.6 L1333.6 797.2 L1335.2 795.5 L1336.8 797.6 L1338.4 798.9 L1340.0 798.6 L1341.6 797.1 L1343.2 797.5 L1344.8 796.3 L1346.4 798.7 L1348.0 798.4 L1349.6 799.4 L1351.2 796.9 L1352.8 796.3 L1354.4 796.8 L1356.0 794.4 L1357.6 794.8 L1359.2 796.3 L1360.8 795.2 L1362.4 796.5 L1364.0 797.6 L1365.6 799.3 L1367.2 797.3 L1368.8 798.7 L1370.4 799.7 L1372.0 796.5 L1373.6 797.4 L1375.2 796.2 L1376.8 799.0 L1378.4 797.9 L1380.0 796.0 L1381.6 795.7 L1383.2 798.0 L1384.8 797.1 L1386.4 798.4 L1388.0 799.5 L1389.6 801.2 L1391.2 799.4 L1392.8 798.3 L1394.4 795.8 L1396.0 797.1 L1397.6 800.3 L1399.2 799.0 L1400.8 797.0 L1402.4 797.9 L1404.0 796.0 L1405.6 794.5 L1407.2 797.7 L1408.8 795.7 L1410.4 799.0 L1412.0 799.6 L1413.6 798.2 L1415.2 798.1 L1416.8 800.5 L1418.4 797.4 L1420.0 799.3 L1421.6 796.7 L1423.2 797.2 L1424.8 796.0 L1426.4 793.9 L1428.0 796.8 L1429.6 797.5 L1431.2 796.0 L1432.8 794.5 L1434.4 798.1 L1436.0 796.4 L1437.6 797.9 L1439.2 796.7 L1440.8 793.8 L1442.4 796.6 L1444.0 801.3 L1445.6 800.0 L1447.2 802.4 L1448.8 800.8 L1450.4 800.0 L1452.0 798.0 L1453.6 799.6 L1455.2 795.9 L1456.8 796.9 L1458.4 796.2 L1460.0 795.6 L1461.6 795.5 L1463.2 797.2 L1464.8 800.5 L1466.4 796.2 L1468.0 798.3 L1469.6 798.1 L1471.2 797.4 L1472.8 798.3 L1474.4 797.9 L1476.0 796.5 L1477.6 793.4 L1479.2 792.0 L1480.8 792.5 L1482.4 797.6 L1484.0 797.2 L1485.6 798.4 L1487.2 799.6 L1488.8 797.6 L1490.4 797.9 L1492.0 797.6 L1493.6 795.3 L1495.2 795.6 L1496.8 796.3 L1498.4 796.0 L1500.0 799.3 L1501.6 800.4 L1503.2 800.7 L1504.8 797.2 L1506.4 797.1 L1508.0 793.6 L1509.6 798.8 L1511.2 799.9 L1512.8 800.5 L1514.4 801.8 L1516.0 797.2 L1517.6 796.2 L1519.2 798.5 L1520.8 795.8 L1522.4 797.0 L1524.0 798.9 L1525.6 797.5 L1527.2 794.3 L1528.8 793.1 L1530.4 799.4 L1532.0 800.2 L1533.6 799.5 L1535.2 801.0 L1536.8 798.6 L1538.4 795.2 L1540.0 794.2 L1541.6 793.7 L1543.2 796.4 L1544.8 795.9 L1546.4 794.1 L1548.0 796.1 L1549.6 795.5 L1551.2 796.2 L1552.8 800.1 L1554.4 796.3 L1556.0 794.8 L1557.6 794.5 L1559.2 796.9 L1560.8 794.7 L1562.4 796.9 L1564.0 796.4 L1565.6 798.4 L1567.2 797.5 L1568.8 796.2 L1570.4 801.2 L1572.0 802.4 L1573.6 797.9 L1575.2 797.9 L1576.8 798.7 L1578.4 794.8 L1580.0 794.7 L1581.6 792.2 L1583.2 793.1 L1584.8 793.8 L1586.4 795.2 L1588.0 797.3 L1589.6 794.9 L1591.2 793.8 L1592.8 792.7 L1594.4 798.3 L1596.0 798.9 L1597.6 798.0 L1599.2 795.6 L1600.8 795.1 L1602.4 799.2 L1604.0 797.0 L1605.6 792.8 L1607.2 792.5 L1608.8 796.1 L1610.4 796.6 L1612.0 791.8 L1613.6 793.7 L1615.2 799.1 L1616.8 801.5 L1618.4 798.2 L1620.0 794.3 L1621.6 795.7 L1623.2 801.4 L1624.8 802.2 L1626.4 795.6 L1628.0 797.2 L1629.6 798.7 L1631.2 799.4 L1632.8 793.6 L1634.4 795.7 L1636.0 795.8 L1637.6 799.8 L1639.2 796.8 L1640.8 791.1 L1642.4 792.2 L1644.0 795.9 L1645.6 800.5 L1647.2 796.2 L1648.8 798.5 L1650.4 799.3 L1652.0 800.5 L1653.6 793.9 L1655.2 794.3 L1656.8 794.6 L1658.4 799.1 L1660.0 797.9 L1661.6 796.5 L1663.2 796.5 L1664.8 800.0 L1666.4 797.3 L1668.0 797.4 L1669.6 797.7 L1671.2 796.4 L1672.8 797.3 L1674.4 801.5 L1676.0 798.5 L1677.6 797.0 L1679.2 798.9 L1680.8 795.2 L1682.4 792.2 L1684.0 795.7 L1685.6 794.7 L1687.2 794.5 L1688.8 791.9 L1690.4 788.7 L1692.0 798.8 L1693.6 796.9 L1695.2 801.9 L1696.8 798.4 L1698.4 797.6 L1700.0 798.3 L1701.6 795.3 L1703.2 793.2 L1704.8 791.6 L1706.4 793.1 L1708.0 794.6 L1709.6 798.3 L1711.2 795.9 L1712.8 793.4 L1714.4 797.4 L1716.0 797.6 L1717.6 796.0 L1719.2 795.2 L1720.8 798.3 L1722.4 800.4 L1724.0 797.6 L1725.6 798.9 L1727.2 795.3 L1728.8 797.0 L1730.4 800.9 L1732.0 795.3 L1733.6 794.7 L1735.2 797.1 L1736.8 797.3 L1738.4 798.5 L1740.0 798.1 L1741.6 803.3 L1743.2 800.8 L1744.8 803.9 L1746.4 797.1 L1748.0 792.8 L1749.6 793.3 L1751.2 797.4 L1752.8 793.2 L1754.4 789.4 L1756.0 796.5 L1757.6 800.0 L1759.2 799.9 L1760.8 796.0 L1762.4 798.7 L1764.0 798.3 L1765.6 800.8 L1767.2 801.3 L1768.8 799.0 L1770.4 797.2 L1772.0 799.8 L1773.6 795.8 L1775.2 790.6 L1776.8 790.3 L1778.4 790.8 L1780.0 794.6 L1781.6 793.4 L1783.2 792.1 L1784.8 798.7 L1786.4 801.5 L1788.0 794.6 L1789.6 793.3 L1791.2 789.4 L1792.8 795.0 L1794.4 794.2 L1796.0 788.9 L1797.6 794.1 L1799.2 794.7 L1800.8 795.2 L1802.4 798.3 L1804.0 793.4 L1805.6 799.3 L1807.2 801.4 L1808.8 802.3 L1810.4 798.2 L1812.0 799.1 L1813.6 804.6 L1815.2 800.0 L1816.8 794.4 L1818.4 797.0 L1820.0 800.3 L1821.6 802.6 L1823.2 797.1 L1824.8 791.1 L1826.4 795.8 L1828.0 797.9 L1829.6 802.4 L1831.2 798.4 L1832.8 787.8 L1834.4 794.0 L1836.0 793.5 L1837.6 799.3 L1839.2 799.9 L1840.8 792.9 L1842.4 793.1 L1844.0 797.6 L1845.6 798.2 L1847.2 792.8 L1848.8 797.4 L1850.4 801.8 L1852.0 797.8 L1853.6 795.2 L1855.2 798.8 L1856.8 804.6 L1858.4 798.1 L1860.0 792.2 L1861.6 795.8 L1863.2 801.3 L1864.8 795.1 L1866.4 796.2 L1868.0 797.5 L1869.6 798.7 L1871.2 800.7 L1872.8 794.7 L1874.4 785.0 L1876.0 790.6 L1877.6 801.0 L1879.2 797.4 L1880.8 795.0 L1882.4 792.3 L1884.0 795.3 L1885.6 797.3 L1887.2 797.9 L1888.8 792.6 L1890.4 800.7 L1892.0 799.0 L1893.6 799.2 L1895.2 790.8 L1896.8 788.8 L1898.4 798.0 L1900.0 796.0 L1901.6 798.7 L1903.2 798.0 L1904.8 795.8 L1906.4 796.3 L1908.0 796.4 L1909.6 793.2 L1911.2 790.3 L1912.8 794.0 L1914.4 794.8 L1916.0 793.4 L1917.6 790.0 L1919.2 794.6 L1920.8 797.5 L1922.4 799.1 L1924.0 794.5 L1925.6 793.0 L1927.2 798.0 L1928.8 799.3 L1930.4 796.1 L1932.0 795.2 L1933.6 800.4 L1935.2 800.4 L1936.8 800.4 L1938.4 796.2 L1940.0 798.1 L1941.6 799.0 L1943.2 801.2 L1944.8 797.7 L1946.4 793.4 L1948.0 795.7 L1949.6 799.0 L1951.2 800.1 L1952.8 793.1 L1954.4 795.8 L1956.0 798.0 L1957.6 798.6 L1959.2 795.3 L1960.8 792.2 L1962.4 795.8 L1964.0 797.9 L1965.6 797.0 L1967.2 791.7 L1968.8 794.0 L1970.4 795.0 L1972.0 795.2 L1973.6 791.5 L1975.2 789.8 L1976.8 794.6 L1978.4 797.7 L1980.0 796.9 L1981.6 790.7 L1983.2 796.2 L1984.8 796.3 L1986.4 795.5 L1988.0 793.4 L1989.6 796.0 L1991.2 798.2 L1992.8 799.8 L1994.4 797.2 L1996.0 792.3 L1997.6 797.0 L1999.2 796.3 L2000.8 796.1 L2002.4 793.9 L2004.0 794.5 L2005.6 798.9 L2007.2 799.8 L2008.8 797.1 L2010.4 793.9 L2012.0 795.2 L2013.6 795.5 L2015.2 797.3 L2016.8 793.3 L2018.4 793.6 L2020.0 796.2 L2021.6 795.8 L2023.2 794.3 L2024.8 794.4 L2026.4 795.9 L2028.0 797.8 L2029.6 796.9 L2031.2 795.7 L2032.8 796.5 L2034.4 798.4 L2036.0 797.4 L2037.6 794.8 L2039.2 796.2 L2040.8 800.2 L2042.4 798.6 L2044.0 798.8 L2045.6 797.7 L2047.2 797.9 L2048.8 798.1 L2050.4 797.6 L2052.0 797.5 L2053.6 797.8 L2055.2 799.2 L2056.8 800.6 L2058.4 798.5 L2060.0 794.6 L2061.6 797.8 L2063.2 798.7 L2064.8 797.4 L2066.4 797.2 L2068.0 797.6 L2069.6 799.3 L2071.2 797.9 L2072.8 799.2 L2074.4 797.3 L2076.0 797.5 L2077.6 797.9 L2079.2 797.6 L2080.8 797.6 L2082.4 799.1 L2084.0 799.8 L2085.6 799.5 L2087.2 799.0 L2088.8 797.3 L2090.4 798.4 L2092.0 797.9 L2093.6 796.4 L2095.2 796.7 L2096.8 796.8 L2098.4 797.9 L2100.0 797.6 L2101.6 797.2 L2103.2 797.8 L2104.8 798.4 L2106.4 799.3 L2108.0 797.4 L2109.6 796.7 L2111.2 797.7 L2112.8 797.2 L2114.4 797.5 L2116.0 797.3 L2117.6 796.6 L2119.2 798.6 L2120.8 798.8 L2122.4 798.5 L2124.0 798.7 L2125.6 798.6 L2127.2 798.9 L2128.8 799.4 L2130.4 798.2 L2132.0 798.0 L2133.6 798.5 L2135.2 798.3 L2136.8 799.0 L2138.4 798.3 L2140.0 798.0 L2141.6 798.0 L2143.2 797.9 L2144.8 797.5 L2146.4 797.2 L2148.0 797.4 L2149.6 798.7 L2151.2 797.6 L2152.8 797.8 L2154.4 797.3 L2156.0 796.9 L2157.6 797.3 L2159.2 797.9 L2160.8 798.8 L2162.4 798.4 L2164.0 799.0 L2165.6 798.2 L2167.2 798.8 L2168.8 798.9 L2170.4 799.5 L2172.0 799.2 L2173.6 799.4 L2175.2 798.8 L2176.8 798.0 L2178.4 798.6 L2180.0 798.0 L2181.6 798.6 L2183.2 797.6 L2184.8 798.0 L2186.4 797.5 L2188.0 798.1 L2189.6 799.0 L2191.2 797.9 L2192.8 798.1 L2194.4 797.4 L2196.0 797.4 L2197.6 797.4 L2199.2 798.8 L2200.8 798.0 L2202.4 797.4 L2204.0 798.3 L2205.6 797.3 L2207.2 798.1 L2208.8 798.8 L2210.4 798.7 L2212.0 798.9 L2213.6 797.6 L2215.2 797.2 L2216.8 798.1 L2218.4 798.5 L2220.0 798.7 L2221.6 799.5 L2223.2 798.5 L2224.8 798.9 L2226.4 799.3 L2228.0 799.2 L2229.6 798.7 L2231.2 797.9 L2232.8 798.1 L2234.4 798.8 L2236.0 797.8 L2237.6 798.1 L2239.2 798.9 L2240.8 798.9 L2242.4 799.0 L2244.0 798.4 L2245.6 798.2 L2247.2 798.5 L2248.8 798.6 L2248.8 801.3 L2247.2 801.9 L2245.6 801.4 L2244.0 801.5 L2242.4 801.8 L2240.8 801.4 L2239.2 801.9 L2237.6 801.1 L2236.0 800.3 L2234.4 801.3 L2232.8 800.9 L2231.2 800.5 L2229.6 801.3 L2228.0 802.3 L2226.4 802.1 L2224.8 801.5 L2223.2 801.1 L2221.6 802.4 L2220.0 801.2 L2218.4 801.4 L2216.8 800.5 L2215.2 800.0 L2213.6 800.6 L2212.0 801.7 L2210.4 801.2 L2208.8 801.5 L2207.2 800.9 L2205.6 800.3 L2204.0 801.2 L2202.4 800.0 L2200.8 800.6 L2199.2 801.4 L2197.6 800.2 L2196.0 800.1 L2194.4 799.9 L2192.8 800.6 L2191.2 800.6 L2189.6 801.6 L2188.0 800.9 L2186.4 800.1 L2184.8 800.9 L2183.2 800.6 L2181.6 801.4 L2180.0 801.0 L2178.4 801.5 L2176.8 800.8 L2175.2 801.5 L2173.6 802.2 L2172.0 801.8 L2170.4 802.4 L2168.8 801.7 L2167.2 802.0 L2165.6 800.8 L2164.0 801.9 L2162.4 801.0 L2160.8 802.3 L2159.2 800.6 L2157.6 799.9 L2156.0 799.9 L2154.4 800.2 L2152.8 800.7 L2151.2 800.6 L2149.6 801.4 L2148.0 800.2 L2146.4 800.1 L2144.8 800.4 L2143.2 800.5 L2141.6 801.3 L2140.0 800.9 L2138.4 801.1 L2136.8 801.8 L2135.2 800.8 L2133.6 800.9 L2132.0 801.0 L2130.4 801.0 L2128.8 802.5 L2127.2 802.3 L2125.6 801.6 L2124.0 802.8 L2122.4 801.9 L2120.8 801.6 L2119.2 801.2 L2117.6 800.7 L2116.0 802.3 L2114.4 800.4 L2112.8 800.4 L2111.2 801.1 L2109.6 802.0 L2108.0 801.0 L2106.4 802.6 L2104.8 801.7 L2103.2 802.8 L2101.6 802.6 L2100.0 800.7 L2098.4 801.3 L2096.8 800.7 L2095.2 801.6 L2093.6 800.8 L2092.0 800.6 L2090.4 801.9 L2088.8 803.7 L2087.2 805.4 L2085.6 802.8 L2084.0 802.5 L2082.4 804.4 L2080.8 804.9 L2079.2 801.5 L2077.6 801.1 L2076.0 801.1 L2074.4 804.8 L2072.8 804.5 L2071.2 801.0 L2069.6 802.1 L2068.0 802.1 L2066.4 804.7 L2064.8 801.6 L2063.2 801.7 L2061.6 802.1 L2060.0 802.5 L2058.4 803.8 L2056.8 803.3 L2055.2 802.5 L2053.6 806.5 L2052.0 804.5 L2050.4 801.3 L2048.8 801.5 L2047.2 802.7 L2045.6 806.1 L2044.0 805.1 L2042.4 801.5 L2040.8 803.1 L2039.2 804.0 L2037.6 803.7 L2036.0 800.6 L2034.4 802.5 L2032.8 801.6 L2031.2 807.9 L2029.6 802.8 L2028.0 801.1 L2026.4 800.2 L2024.8 806.4 L2023.2 800.9 L2021.6 798.6 L2020.0 799.6 L2018.4 803.0 L2016.8 806.4 L2015.2 802.1 L2013.6 798.4 L2012.0 799.0 L2010.4 804.9 L2008.8 803.0 L2007.2 802.9 L2005.6 801.8 L2004.0 801.6 L2002.4 807.3 L2000.8 800.4 L1999.2 799.6 L1997.6 803.0 L1996.0 808.0 L1994.4 804.4 L1992.8 802.9 L1991.2 801.1 L1989.6 804.5 L1988.0 805.2 L1986.4 798.5 L1984.8 799.3 L1983.2 803.6 L1981.6 806.2 L1980.0 804.2 L1978.4 801.2 L1976.8 797.8 L1975.2 803.7 L1973.6 800.7 L1972.0 798.6 L1970.4 798.2 L1968.8 800.2 L1967.2 808.5 L1965.6 804.0 L1964.0 801.5 L1962.4 801.0 L1960.8 808.1 L1959.2 804.2 L1957.6 801.9 L1956.0 801.0 L1954.4 807.9 L1952.8 810.7 L1951.2 804.8 L1949.6 803.2 L1948.0 802.7 L1946.4 809.4 L1944.8 806.5 L1943.2 804.7 L1941.6 803.0 L1940.0 808.9 L1938.4 813.2 L1936.8 805.7 L1935.2 803.7 L1933.6 807.4 L1932.0 815.6 L1930.4 804.4 L1928.8 802.6 L1927.2 801.4 L1925.6 807.1 L1924.0 808.2 L1922.4 803.1 L1920.8 801.5 L1919.2 804.1 L1917.6 805.3 L1916.0 801.4 L1914.4 798.1 L1912.8 798.7 L1911.2 809.0 L1909.6 808.9 L1908.0 800.3 L1906.4 799.5 L1904.8 805.9 L1903.2 810.2 L1901.6 804.5 L1900.0 800.1 L1898.4 804.4 L1896.8 802.2 L1895.2 804.9 L1893.6 803.1 L1892.0 802.5 L1890.4 810.1 L1888.8 805.2 L1887.2 804.8 L1885.6 800.9 L1884.0 803.8 L1882.4 812.7 L1880.8 804.1 L1879.2 801.8 L1877.6 805.7 L1876.0 806.0 L1874.4 798.6 L1872.8 798.8 L1871.2 805.4 L1869.6 807.9 L1868.0 814.8 L1866.4 804.5 L1864.8 799.5 L1863.2 805.6 L1861.6 808.7 L1860.0 806.7 L1858.4 801.8 L1856.8 809.1 L1855.2 811.2 L1853.6 807.8 L1852.0 805.7 L1850.4 805.7 L1848.8 803.2 L1847.2 808.5 L1845.6 812.3 L1844.0 801.1 L1842.4 796.6 L1840.8 807.1 L1839.2 815.7 L1837.6 804.8 L1836.0 796.8 L1834.4 800.5 L1832.8 808.6 L1831.2 806.3 L1829.6 807.0 L1828.0 801.5 L1826.4 807.7 L1824.8 803.7 L1823.2 801.3 L1821.6 806.1 L1820.0 809.2 L1818.4 811.1 L1816.8 804.3 L1815.2 803.3 L1813.6 808.5 L1812.0 814.6 L1810.4 807.0 L1808.8 806.4 L1807.2 805.4 L1805.6 807.8 L1804.0 810.3 L1802.4 806.8 L1800.8 798.3 L1799.2 798.6 L1797.6 808.3 L1796.0 800.6 L1794.4 798.1 L1792.8 800.4 L1791.2 799.1 L1789.6 805.6 L1788.0 800.3 L1786.4 805.2 L1784.8 803.5 L1783.2 807.1 L1781.6 801.2 L1780.0 798.0 L1778.4 795.0 L1776.8 800.1 L1775.2 806.0 L1773.6 801.3 L1772.0 805.6 L1770.4 804.7 L1768.8 811.8 L1767.2 809.9 L1765.6 805.3 L1764.0 801.9 L1762.4 808.5 L1760.8 808.6 L1759.2 804.2 L1757.6 803.5 L1756.0 804.2 L1754.4 802.6 L1752.8 799.9 L1751.2 801.8 L1749.6 797.6 L1748.0 806.2 L1746.4 804.9 L1744.8 808.1 L1743.2 804.2 L1741.6 810.3 L1740.0 809.3 L1738.4 804.5 L1736.8 801.5 L1735.2 801.5 L1733.6 806.7 L1732.0 803.7 L1730.4 805.6 L1728.8 801.7 L1727.2 805.5 L1725.6 808.4 L1724.0 803.1 L1722.4 804.3 L1720.8 803.9 L1719.2 806.5 L1717.6 805.1 L1716.0 802.1 L1714.4 801.7 L1712.8 800.8 L1711.2 806.6 L1709.6 803.2 L1708.0 798.0 L1706.4 798.8 L1704.8 801.2 L1703.2 802.5 L1701.6 800.0 L1700.0 803.1 L1698.4 807.0 L1696.8 807.1 L1695.2 805.8 L1693.6 801.6 L1692.0 806.3 L1690.4 801.8 L1688.8 798.2 L1687.2 797.6 L1685.6 799.6 L1684.0 805.8 L1682.4 799.3 L1680.8 798.8 L1679.2 802.3 L1677.6 805.6 L1676.0 812.2 L1674.4 806.3 L1672.8 801.5 L1671.2 802.8 L1669.6 807.2 L1668.0 806.3 L1666.4 801.5 L1664.8 804.8 L1663.2 805.4 L1661.6 807.5 L1660.0 803.0 L1658.4 803.9 L1656.8 799.6 L1655.2 804.3 L1653.6 800.8 L1652.0 804.0 L1650.4 802.9 L1648.8 808.0 L1647.2 804.4 L1645.6 804.7 L1644.0 800.5 L1642.4 797.7 L1640.8 800.0 L1639.2 802.2 L1637.6 803.6 L1636.0 800.0 L1634.4 804.8 L1632.8 802.4 L1631.2 802.9 L1629.6 803.0 L1628.0 803.5 L1626.4 805.1 L1624.8 806.7 L1623.2 804.7 L1621.6 801.2 L1620.0 804.0 L1618.4 805.9 L1616.8 805.2 L1615.2 803.4 L1613.6 801.3 L1612.0 802.6 L1610.4 801.4 L1608.8 800.3 L1607.2 797.5 L1605.6 802.5 L1604.0 804.5 L1602.4 803.8 L1600.8 800.3 L1599.2 804.5 L1597.6 807.3 L1596.0 803.3 L1594.4 801.8 L1592.8 798.2 L1591.2 805.8 L1589.6 799.3 L1588.0 800.8 L1586.4 800.1 L1584.8 802.0 L1583.2 800.5 L1581.6 796.5 L1580.0 799.1 L1578.4 800.7 L1576.8 807.6 L1575.2 803.0 L1573.6 801.5 L1572.0 807.1 L1570.4 809.3 L1568.8 805.2 L1567.2 801.0 L1565.6 802.9 L1564.0 803.0 L1562.4 806.0 L1560.8 799.8 L1559.2 801.7 L1557.6 798.6 L1556.0 803.6 L1554.4 802.5 L1552.8 803.9 L1551.2 799.4 L1549.6 801.5 L1548.0 803.7 L1546.4 798.0 L1544.8 800.7 L1543.2 801.5 L1541.6 802.8 L1540.0 801.0 L1538.4 798.9 L1536.8 803.1 L1535.2 807.6 L1533.6 807.7 L1532.0 804.7 L1530.4 803.5 L1528.8 799.3 L1527.2 803.7 L1525.6 803.5 L1524.0 803.9 L1522.4 801.9 L1520.8 804.2 L1519.2 804.1 L1517.6 800.2 L1516.0 801.5 L1514.4 808.1 L1512.8 806.8 L1511.2 805.3 L1509.6 803.1 L1508.0 798.4 L1506.4 803.7 L1504.8 803.8 L1503.2 804.1 L1501.6 804.5 L1500.0 805.3 L1498.4 803.2 L1496.8 800.3 L1495.2 799.9 L1493.6 800.1 L1492.0 805.0 L1490.4 804.2 L1488.8 801.5 L1487.2 803.0 L1485.6 804.7 L1484.0 804.0 L1482.4 802.0 L1480.8 796.6 L1479.2 797.3 L1477.6 801.3 L1476.0 802.2 L1474.4 801.5 L1472.8 801.9 L1471.2 805.5 L1469.6 803.1 L1468.0 802.1 L1466.4 800.5 L1464.8 805.3 L1463.2 804.5 L1461.6 800.0 L1460.0 800.1 L1458.4 800.6 L1456.8 803.3 L1455.2 802.2 L1453.6 803.3 L1452.0 801.4 L1450.4 805.6 L1448.8 807.0 L1447.2 806.4 L1445.6 804.7 L1444.0 805.1 L1442.4 804.1 L1440.8 800.0 L1439.2 800.9 L1437.6 801.2 L1436.0 801.5 L1434.4 802.7 L1432.8 798.4 L1431.2 801.0 L1429.6 802.4 L1428.0 804.9 L1426.4 799.1 L1424.8 800.9 L1423.2 800.6 L1421.6 802.0 L1420.0 805.5 L1418.4 801.7 L1416.8 804.5 L1415.2 802.7 L1413.6 804.1 L1412.0 805.4 L1410.4 802.9 L1408.8 800.6 L1407.2 803.4 L1405.6 799.6 L1404.0 800.9 L1402.4 801.9 L1400.8 802.2 L1399.2 803.6 L1397.6 804.6 L1396.0 800.6 L1394.4 800.1 L1392.8 803.7 L1391.2 804.1 L1389.6 805.3 L1388.0 803.2 L1386.4 803.2 L1384.8 803.9 L1383.2 802.5 L1381.6 799.4 L1380.0 800.0 L1378.4 803.6 L1376.8 803.3 L1375.2 799.5 L1373.6 801.8 L1372.0 801.9 L1370.4 805.1 L1368.8 803.8 L1367.2 800.9 L1365.6 804.9 L1364.0 802.6 L1362.4 801.2 L1360.8 799.9 L1359.2 799.8 L1357.6 799.9 L1356.0 799.2 L1354.4 800.3 L1352.8 800.4 L1351.2 802.4 L1349.6 806.1 L1348.0 802.6 L1346.4 803.7 L1344.8 800.3 L1343.2 803.7 L1341.6 801.8 L1340.0 802.7 L1338.4 802.6 L1336.8 802.3 L1335.2 803.4 L1333.6 801.3 L1332.0 803.7 L1330.4 803.0 L1328.8 804.6 L1327.2 801.6 L1325.6 804.5 L1324.0 802.1 L1322.4 800.8 L1320.8 801.7 L1319.2 801.0 L1317.6 804.2 L1316.0 801.3 L1314.4 798.6 L1312.8 799.2 L1311.2 801.1 L1309.6 802.5 L1308.0 801.0 L1306.4 804.7 L1304.8 802.6 L1303.2 805.5 L1301.6 805.4 L1300.0 805.6 L1298.4 802.8 L1296.8 802.8 L1295.2 802.0 L1293.6 800.1 L1292.0 802.1 L1290.4 802.5 L1288.8 798.3 L1287.2 800.5 L1285.6 799.8 L1284.0 802.1 L1282.4 802.8 L1280.8 805.0 L1279.2 804.3 L1277.6 803.0 L1276.0 799.9 L1274.4 802.0 L1272.8 801.0 L1271.2 802.3 L1269.6 799.3 L1268.0 798.7 L1266.4 799.6 L1264.8 798.9 L1263.2 799.6 L1261.6 797.6 L1260.0 800.4 L1258.4 798.7 L1256.8 799.1 L1255.2 800.8 L1253.6 800.9 L1252.0 800.7 L1250.4 802.6 L1248.8 802.6 L1247.2 798.4 L1245.6 801.3 L1244.0 802.2 L1242.4 799.8 L1240.8 799.6 L1239.2 800.2 L1237.6 803.7 L1236.0 809.8 L1234.4 806.7 L1232.8 804.7 L1231.2 803.3 L1229.6 802.4 L1228.0 806.9 L1226.4 807.7 L1224.8 802.8 L1223.2 804.7 L1221.6 808.7 L1220.0 809.6 L1218.4 809.1 L1216.8 809.3 L1215.2 806.2 L1213.6 805.0 L1212.0 805.3 L1210.4 804.3 L1208.8 801.1 L1207.2 802.1 L1205.6 807.2 L1204.0 803.0 L1202.4 801.0 L1200.8 803.4 L1199.2 803.3 L1197.6 804.7 L1196.0 803.0 L1194.4 803.9 L1192.8 801.3 L1191.2 803.6 L1189.6 802.4 L1188.0 802.1 L1186.4 802.0 L1184.8 801.0 L1183.2 802.7 L1181.6 802.0 L1180.0 801.3 L1178.4 802.3 L1176.8 800.2 L1175.2 802.6 L1173.6 800.7 L1172.0 800.1 L1170.4 800.1 L1168.8 801.9 L1167.2 802.2 L1165.6 801.0 L1164.0 800.8 L1162.4 800.0 L1160.8 800.7 L1159.2 801.7 L1157.6 801.3 L1156.0 801.6 L1154.4 802.5 L1152.8 802.4 L1151.2 805.2 L1149.6 801.6 L1148.0 800.3 L1146.4 801.3 L1144.8 800.7 L1143.2 801.1 L1141.6 801.8 L1140.0 800.7 L1138.4 801.7 L1136.8 801.4 L1135.2 800.2 L1133.6 801.5 L1132.0 800.6 L1130.4 801.6 L1128.8 802.9 L1127.2 801.4 L1125.6 800.7 L1124.0 800.9 L1122.4 801.0 L1120.8 802.2 L1119.2 802.1 L1117.6 800.3 L1116.0 801.0 L1114.4 802.3 L1112.8 803.1 L1111.2 801.2 L1109.6 802.8 L1108.0 802.3 L1106.4 801.2 L1104.8 801.4 L1103.2 800.2 L1101.6 800.5 L1100.0 800.0 L1098.4 803.1 L1096.8 801.9 L1095.2 801.5 L1093.6 801.7 L1092.0 801.8 L1090.4 801.7 L1088.8 802.3 L1087.2 802.5 L1085.6 802.2 L1084.0 802.7 L1082.4 802.0 L1080.8 802.9 L1079.2 802.2 L1077.6 802.0 L1076.0 801.3 L1074.4 801.7 L1072.8 802.2 L1071.2 801.5 L1069.6 801.9 L1068.0 801.6 L1066.4 803.0 L1064.8 801.5 L1063.2 801.5 L1061.6 803.1 L1060.0 800.2 L1058.4 801.5 L1056.8 801.6 L1055.2 801.4 L1053.6 802.1 L1052.0 800.1 L1050.4 800.7 L1048.8 801.9 L1047.2 801.0 L1045.6 802.4 L1044.0 802.8 L1042.4 802.2 L1040.8 800.0 L1039.2 802.7 L1037.6 801.9 L1036.0 801.6 L1034.4 801.3 L1032.8 802.3 L1031.2 803.3 L1029.6 803.7 L1028.0 801.3 L1026.4 801.7 L1024.8 800.3 L1023.2 800.3 L1021.6 801.5 L1020.0 801.4 L1018.4 802.3 L1016.8 800.4 L1015.2 800.5 L1013.6 802.5 L1012.0 801.2 L1010.4 801.5 L1008.8 800.9 L1007.2 801.3 L1005.6 801.5 L1004.0 800.9 L1002.4 801.6 L1000.8 802.5 L999.2 801.0 L997.6 801.2 L996.0 801.2 L994.4 801.0 L992.8 801.4 L991.2 801.8 L989.6 801.7 L988.0 802.1 L986.4 803.0 L984.8 801.6 L983.2 801.0 L981.6 801.6 L980.0 801.6 L978.4 803.1 L976.8 801.7 L975.2 802.4 L973.6 803.3 L972.0 802.1 L970.4 803.6 L968.8 801.1 L967.2 802.1 L965.6 802.5 L964.0 802.6 L962.4 801.8 L960.8 802.0 L959.2 801.7 L957.6 804.0 L956.0 804.7 L954.4 802.9 L952.8 804.1 L951.2 801.7 L949.6 802.8 L948.0 804.2 L946.4 802.0 L944.8 803.5 L943.2 803.4 L941.6 805.2 L940.0 801.8 L938.4 804.6 L936.8 802.2 L935.2 802.7 L933.6 803.9 L932.0 804.2 L930.4 802.0 L928.8 803.0 L927.2 803.0 L925.6 803.5 L924.0 802.5 L922.4 801.5 L920.8 802.4 L919.2 802.7 L917.6 803.8 L916.0 804.1 L914.4 802.8 L912.8 803.8 L911.2 804.3 L909.6 804.5 L908.0 802.9 L906.4 802.6 L904.8 806.2 L903.2 804.1 L901.6 801.6 L900.0 806.0 L898.4 801.9 L896.8 805.1 L895.2 802.4 L893.6 804.7 L892.0 807.8 L890.4 802.5 L888.8 804.8 L887.2 804.6 L885.6 801.4 L884.0 803.8 L882.4 802.7 L880.8 805.6 L879.2 804.3 L877.6 803.9 L876.0 803.5 L874.4 802.8 L872.8 806.2 L871.2 802.9 L869.6 803.2 L868.0 805.4 L866.4 803.8 L864.8 802.4 L863.2 802.8 L861.6 802.5 L860.0 802.4 L858.4 805.8 L856.8 805.2 L855.2 805.8 L853.6 805.0 L852.0 804.8 L850.4 805.9 L848.8 806.6 L847.2 805.7 L845.6 804.3 L844.0 801.2 L842.4 803.1 L840.8 805.9 L839.2 804.5 L837.6 805.0 L836.0 802.7 L834.4 802.0 L832.8 803.9 L831.2 801.9 L829.6 802.2 L828.0 805.2 L826.4 803.5 L824.8 802.5 L823.2 805.4 L821.6 802.5 L820.0 803.0 L818.4 805.9 L816.8 804.1 L815.2 802.5 L813.6 803.0 L812.0 804.5 L810.4 803.5 L808.8 802.1 L807.2 804.8 L805.6 805.2 L804.0 806.7 L802.4 805.9 L800.8 804.4 L799.2 804.8 L797.6 802.6 L796.0 804.6 L794.4 807.1 L792.8 802.1 L791.2 803.5 L789.6 803.5 L788.0 804.3 L786.4 809.5 L784.8 802.8 L783.2 802.3 L781.6 808.3 L780.0 804.9 L778.4 805.5 L776.8 806.4 L775.2 803.2 L773.6 802.8 L772.0 803.8 L770.4 803.9 L768.8 802.6 L767.2 802.3 L765.6 803.5 L764.0 804.7 L762.4 803.9 L760.8 803.7 L759.2 808.6 L757.6 809.2 L756.0 803.7 L754.4 803.7 L752.8 806.5 L751.2 804.8 L749.6 803.6 L748.0 805.9 L746.4 806.3 L744.8 803.3 L743.2 803.6 L741.6 802.7 L740.0 802.4 L738.4 805.1 L736.8 805.0 L735.2 802.5 L733.6 802.5 L732.0 802.4 L730.4 804.3 L728.8 808.3 L727.2 803.2 L725.6 803.1 L724.0 804.2 L722.4 808.1 L720.8 803.0 L719.2 804.2 L717.6 809.6 L716.0 804.3 L714.4 812.2 L712.8 809.3 L711.2 804.6 L709.6 807.1 L708.0 804.5 L706.4 802.7 L704.8 802.7 L703.2 805.0 L701.6 805.6 L700.0 804.5 L698.4 802.6 L696.8 802.0 L695.2 806.1 L693.6 802.8 L692.0 811.1 L690.4 804.3 L688.8 802.0 L687.2 802.1 L685.6 802.8 L684.0 803.2 L682.4 805.0 L680.8 804.4 L679.2 803.6 L677.6 805.5 L676.0 806.4 L674.4 802.5 L672.8 803.1 L671.2 801.7 L669.6 802.2 L668.0 801.8 L666.4 802.7 L664.8 806.6 L663.2 804.9 L661.6 806.2 L660.0 802.6 L658.4 806.2 L656.8 805.4 L655.2 803.8 L653.6 805.2 L652.0 802.4 L650.4 804.2 L648.8 806.5 L647.2 810.1 L645.6 802.2 L644.0 804.3 L642.4 803.8 L640.8 804.6 L639.2 805.1 L637.6 803.2 L636.0 804.3 L634.4 805.2 L632.8 805.8 L631.2 802.5 L629.6 806.4 L628.0 806.6 L626.4 805.1 L624.8 802.3 L623.2 806.6 L621.6 804.1 L620.0 803.1 L618.4 804.8 L616.8 805.0 L615.2 808.3 L613.6 802.5 L612.0 803.2 L610.4 806.2 L608.8 802.9 L607.2 807.2 L605.6 802.0 L604.0 803.6 L602.4 802.5 L600.8 801.9 L599.2 803.3 L597.6 803.1 L596.0 803.7 L594.4 803.9 L592.8 802.1 L591.2 804.2 L589.6 807.4 L588.0 802.7 L586.4 803.5 L584.8 803.2 L583.2 803.7 L581.6 805.8 L580.0 803.8 L578.4 808.7 L576.8 804.3 L575.2 803.1 L573.6 805.8 L572.0 806.9 L570.4 806.7 L568.8 804.0 L567.2 804.7 L565.6 806.2 L564.0 802.9 L562.4 804.1 L560.8 805.5 L559.2 802.8 L557.6 809.0 L556.0 805.6 L554.4 805.6 L552.8 809.8 L551.2 802.5 L549.6 803.5 L548.0 804.3 L546.4 805.0 L544.8 803.3 L543.2 806.6 L541.6 807.3 L540.0 804.5 L538.4 804.3 L536.8 805.6 L535.2 805.3 L533.6 806.7 L532.0 805.0 L530.4 803.5 L528.8 803.5 L527.2 804.6 L525.6 804.5 L524.0 805.5 L522.4 803.0 L520.8 804.5 L519.2 804.0 L517.6 803.3 L516.0 807.8 L514.4 805.9 L512.8 806.9 L511.2 804.1 L509.6 804.3 L508.0 805.1 L506.4 805.7 L504.8 802.8 L503.2 806.6 L501.6 805.4 L500.0 804.8 L498.4 806.4 L496.8 811.5 L495.2 806.9 L493.6 806.4 L492.0 803.9 L490.4 807.1 L488.8 803.5 L487.2 805.4 L485.6 803.5 L484.0 804.2 L482.4 804.1 L480.8 806.9 L479.2 810.0 L477.6 802.6 L476.0 802.7 L474.4 807.9 L472.8 805.1 L471.2 802.5 L469.6 805.0 L468.0 806.6 L466.4 804.7 L464.8 807.3 L463.2 808.6 L461.6 803.9 L460.0 810.4 L458.4 805.7 L456.8 809.3 L455.2 804.5 L453.6 810.7 L452.0 807.9 L450.4 807.8 L448.8 805.9 L447.2 807.8 L445.6 812.0 L444.0 808.0 L442.4 806.7 L440.8 811.0 L439.2 806.2 L437.6 806.5 L436.0 809.2 L434.4 811.8 L432.8 812.4 L431.2 812.7 L429.6 810.0 L428.0 808.8 L426.4 808.1 L424.8 812.8 L423.2 806.9 L421.6 806.9 L420.0 810.7 L418.4 809.2 L416.8 807.2 L415.2 806.6 L413.6 808.9 L412.0 810.7 L410.4 808.4 L408.8 810.3 L407.2 806.3 L405.6 806.0 L404.0 808.5 L402.4 805.3 L400.8 805.0 L399.2 810.2 L397.6 808.5 L396.0 804.0 L394.4 806.7 L392.8 806.6 L391.2 803.6 L389.6 804.7 L388.0 808.2 L386.4 806.0 L384.8 811.4 L383.2 802.5 L381.6 804.9 L380.0 808.8 L378.4 809.8 L376.8 802.7 L375.2 805.3 L373.6 807.3 L372.0 804.0 L370.4 804.3 L368.8 802.5 L367.2 807.7 L365.6 805.9 L364.0 805.3 L362.4 802.8 L360.8 802.8 L359.2 803.5 L357.6 804.4 L356.0 806.3 L354.4 804.9 L352.8 802.8 L351.2 804.2 L349.6 802.8 L348.0 803.9 L346.4 807.5 L344.8 808.5 L343.2 802.6 L341.6 807.3 L340.0 807.8 L338.4 803.9 L336.8 810.5 L335.2 805.3 L333.6 807.1 L332.0 805.6 L330.4 803.3 L328.8 805.3 L327.2 806.6 L325.6 805.4 L324.0 803.1 L322.4 805.4 L320.8 809.6 L319.2 803.2 L317.6 804.6 L316.0 807.1 L314.4 807.3 L312.8 805.6 L311.2 804.4 L309.6 805.1 L308.0 803.6 L306.4 807.1 L304.8 806.0 L303.2 812.9 L301.6 806.9 L300.0 803.5 L298.4 805.1 L296.8 810.9 L295.2 804.7 L293.6 808.4 L292.0 809.2 L290.4 805.4 L288.8 810.3 L287.2 812.7 L285.6 809.3 L284.0 804.8 L282.4 804.4 L280.8 814.7 L279.2 808.0 L277.6 808.3 L276.0 807.8 L274.4 807.7 L272.8 805.8 L271.2 805.0 L269.6 809.2 L268.0 807.0 L266.4 811.4 L264.8 806.4 L263.2 804.2 L261.6 806.0 L260.0 808.9 L258.4 806.7 L256.8 809.1 L255.2 810.4 L253.6 805.1 L252.0 808.1 L250.4 811.5 L248.8 805.6 L247.2 805.6 L245.6 806.3 L244.0 806.2 L242.4 806.3 L240.8 807.7 L239.2 804.7z" fill="#ff0000" stroke="#7a0606" stroke-width="1.1" stroke-linejoin="round"/><path d="M2249.8 704.5 V830.5" stroke="#ffff00" stroke-width="2.8" stroke-dasharray="6.6 4.4" fill="none"/><path d="M245.3 818.0 L256.8 777.7 L279.3 722.5 L332.9 806.1 L364.8 747.0 L381.0 716.6 L440.0 716.6 L446.9 720.8 L506.1 796.7 L521.8 819.2 L2115.6 819.2 L2249.0 716.0" fill="none" stroke="#2a2a2a" stroke-opacity="0.75" stroke-width="3.0" stroke-linejoin="round"/><rect x="239.0" y="811.7" width="12.6" height="12.6" fill="#87cefa" stroke="#2a2a2a" stroke-width="1.6" opacity="1.00"/><rect x="250.5" y="771.4" width="12.6" height="12.6" fill="#87cefa" stroke="#2a2a2a" stroke-width="1.6" opacity="1.00"/><rect x="273.0" y="716.2" width="12.6" height="12.6" fill="#87cefa" stroke="#2a2a2a" stroke-width="1.6" opacity="1.00"/><rect x="326.6" y="799.8" width="12.6" height="12.6" fill="#87cefa" stroke="#2a2a2a" stroke-width="1.6" opacity="1.00"/><rect x="358.5" y="740.7" width="12.6" height="12.6" fill="#87cefa" stroke="#2a2a2a" stroke-width="1.6" opacity="1.00"/><rect x="440.6" y="714.5" width="12.6" height="12.6" fill="#87cefa" stroke="#2a2a2a" stroke-width="1.6" opacity="1.00"/><rect x="499.8" y="790.4" width="12.6" height="12.6" fill="#87cefa" stroke="#2a2a2a" stroke-width="1.6" opacity="1.00"/><rect x="2242.7" y="709.7" width="12.6" height="12.6" fill="#87cefa" stroke="#2a2a2a" stroke-width="1.6" opacity="1.00"/><rect x="243.7" y="706.4" width="2033" height="22.4" fill="#dcdcf8" fill-opacity="0.62" stroke="#9a9aa8" stroke-opacity="0.55" stroke-width="1.2"/><text transform="translate(247.40 725.70) scale(1.0291 1)" font-size="18.76" fill="#1e1e1e">Audio 00</text></g><rect x="1930.90" y="135.90" width="2.30" height="1322.00" fill="#f0644a"/><rect x="2284.00" y="136.10" width="2.30" height="1321.60" fill="#e6e6e6"/><rect x="237.00" y="136.10" width="2.30" height="1321.60" fill="#ffff00"/><rect x="2364.30" y="157.30" width="185.70" height="2.00" fill="#161616"/><rect x="2468" y="151" width="37" height="17" rx="4" fill="url(#thumb)"/><rect x="2364.8" y="189.9" width="184.7" height="1296.1" fill="#333333" stroke="#5e5e5e" stroke-width="1.1"/>
</g>
</svg>
</body></html>
